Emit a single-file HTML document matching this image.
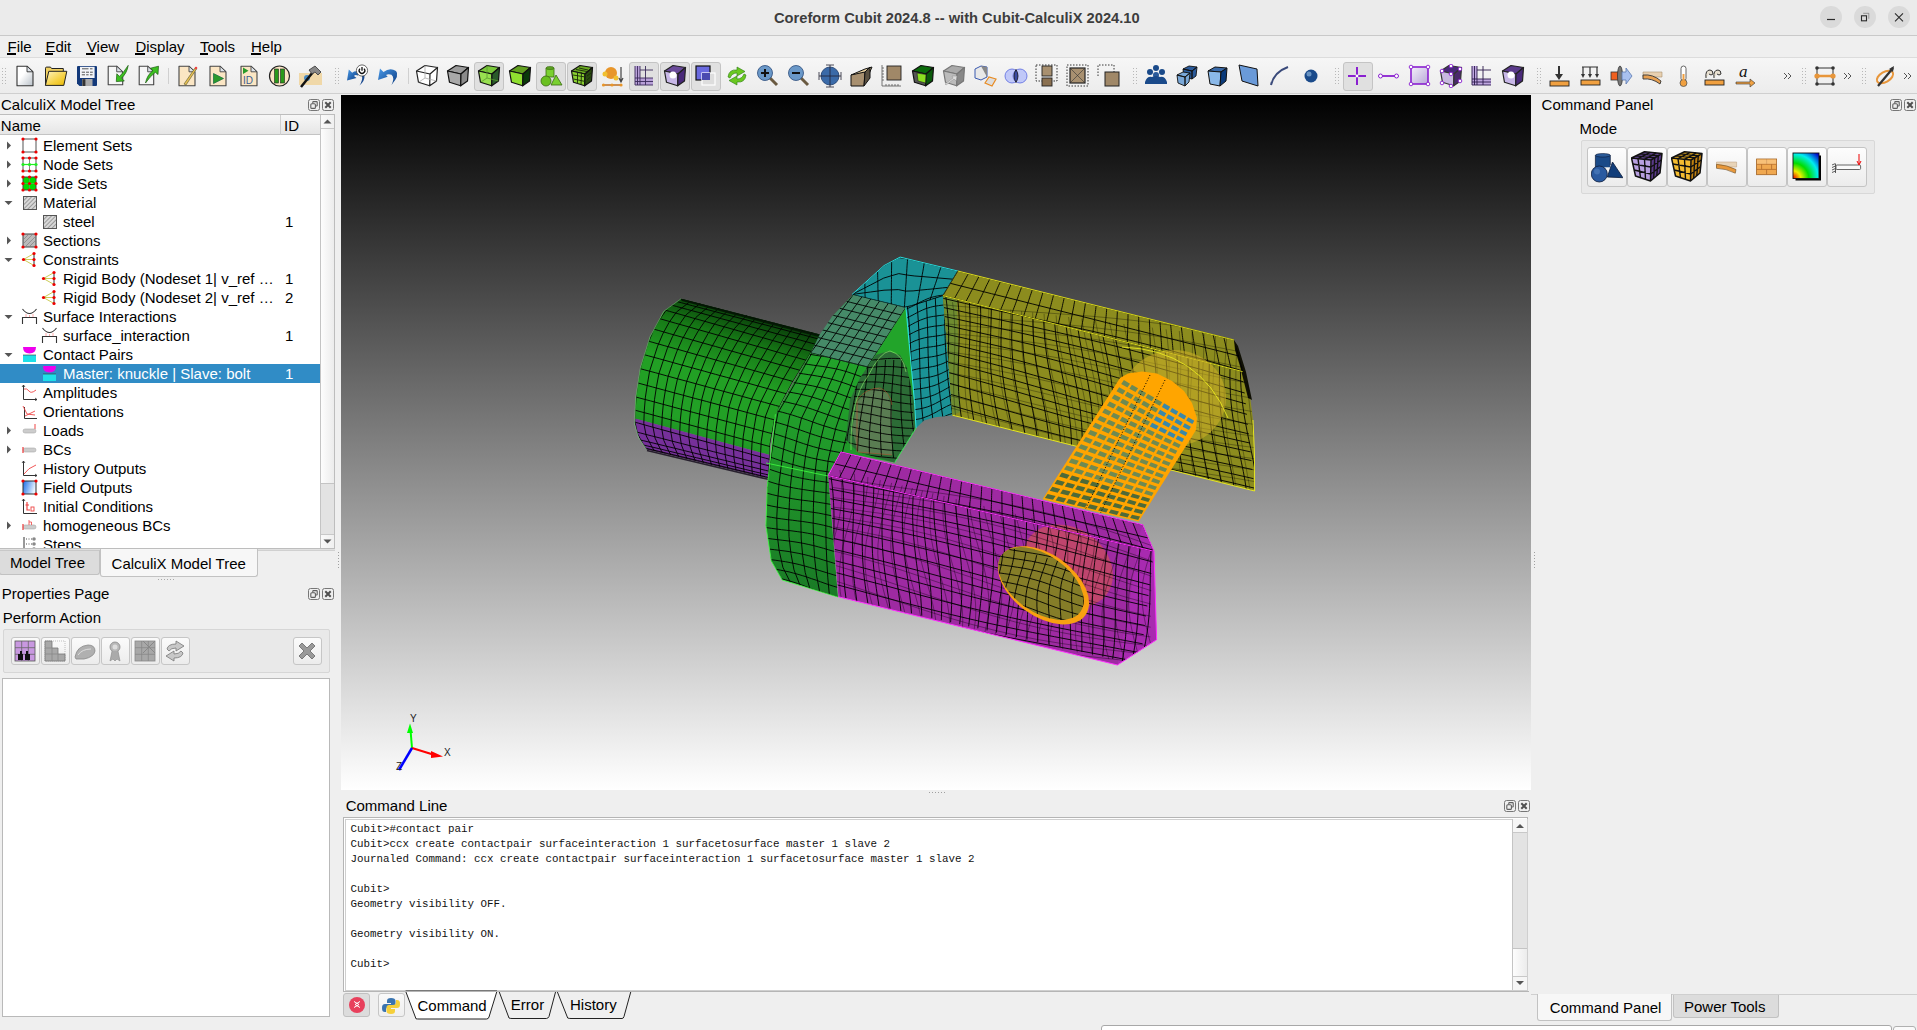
<!DOCTYPE html>
<html><head><meta charset="utf-8"><title>Coreform Cubit</title>
<style>
html,body{margin:0;padding:0;width:1917px;height:1030px;overflow:hidden;background:#efefef;position:relative}
.t{position:absolute;white-space:pre;line-height:1;font-family:'Liberation Sans',sans-serif}
svg{display:block}
</style></head><body>
<div style="position:absolute;left:0px;top:0px;width:1917px;height:35px;background:#ebebeb"></div>
<div style="position:absolute;left:0px;top:35px;width:1917px;height:1px;background:#c9c9c9"></div>
<div class="t" style="left:774px;top:10.76px;font-size:14.7px;color:#3d3d3d;font-family:'Liberation Sans',sans-serif;font-weight:700;">Coreform Cubit 2024.8 -- with Cubit-CalculiX 2024.10</div>
<div style="position:absolute;left:1820px;top:6px;width:22px;height:22px;border-radius:50%;background:#dadada"></div>
<div style="position:absolute;left:1854px;top:6px;width:22px;height:22px;border-radius:50%;background:#dadada"></div>
<div style="position:absolute;left:1888px;top:6px;width:22px;height:22px;border-radius:50%;background:#dadada"></div>
<svg style="position:absolute;left:1820px;top:6px" width="90" height="22" viewBox="0 0 90 22"><path d="M7 13.5h8" stroke="#2b2b2b" stroke-width="1.2"/><rect x="41.5" y="9.8" width="5" height="5" fill="none" stroke="#2b2b2b" stroke-width="1.1"/><path d="M43.2 7.3H48.8V12.8" fill="none" stroke="#555" stroke-width="0.5"/><path d="M75 7.3l8 8M83 7.3l-8 8" stroke="#2b2b2b" stroke-width="1.1"/></svg>
<div style="position:absolute;left:0px;top:36px;width:1917px;height:22px;background:#efefef"></div>
<div style="position:absolute;left:0px;top:57px;width:1917px;height:1px;background:#dcdcdc"></div>
<div class="t" style="left:7.5px;top:38.70px;font-size:15px;color:#000;font-family:'Liberation Sans',sans-serif;">File</div>
<div style="position:absolute;left:7.0px;top:53.2px;width:8.5px;height:1.6px;background:#000"></div>
<div class="t" style="left:45.4px;top:38.70px;font-size:15px;color:#000;font-family:'Liberation Sans',sans-serif;">Edit</div>
<div style="position:absolute;left:44.9px;top:53.2px;width:8.5px;height:1.6px;background:#000"></div>
<div class="t" style="left:86.9px;top:38.70px;font-size:15px;color:#000;font-family:'Liberation Sans',sans-serif;">View</div>
<div style="position:absolute;left:86.4px;top:53.2px;width:8.5px;height:1.6px;background:#000"></div>
<div class="t" style="left:135.4px;top:38.70px;font-size:15px;color:#000;font-family:'Liberation Sans',sans-serif;">Display</div>
<div style="position:absolute;left:134.9px;top:53.2px;width:10px;height:1.6px;background:#000"></div>
<div class="t" style="left:200px;top:38.70px;font-size:15px;color:#000;font-family:'Liberation Sans',sans-serif;">Tools</div>
<div style="position:absolute;left:199.5px;top:53.2px;width:8.5px;height:1.6px;background:#000"></div>
<div class="t" style="left:251px;top:38.70px;font-size:15px;color:#000;font-family:'Liberation Sans',sans-serif;">Help</div>
<div style="position:absolute;left:250.5px;top:53.2px;width:10px;height:1.6px;background:#000"></div>
<div style="position:absolute;left:0px;top:58px;width:1917px;height:35px;background:linear-gradient(#f6f6f6,#ececec)"></div>
<div style="position:absolute;left:0px;top:93px;width:1917px;height:1px;background:#cfcfcf"></div>
<div style="position:absolute;left:0px;top:94px;width:1917px;height:1px;background:#efefef"></div>
<div style="position:absolute;left:0px;top:95px;width:341px;height:935px;background:#efefef"></div>
<div class="t" style="left:1px;top:97.00px;font-size:15px;color:#000;font-family:'Liberation Sans',sans-serif;">CalculiX Model Tree</div>
<svg style="position:absolute;left:308px;top:99px" width="27" height="12" viewBox="0 0 27 12"><rect x="0.5" y="0.5" width="11" height="11" rx="2" fill="none" stroke="#777"/><rect x="2.8" y="4.8" width="4.6" height="4.6" rx="1" fill="none" stroke="#606060" stroke-width="1.1"/><path d="M4.8 4.6V3.2Q4.8 2.6 5.4 2.6H8.6Q9.2 2.6 9.2 3.2V6.4Q9.2 7 8.6 7H7.6" fill="none" stroke="#606060" stroke-width="1.1"/><rect x="14.5" y="0.5" width="11" height="11" rx="2" fill="none" stroke="#777"/><path d="M17.3 3.3l5.4 5.4M22.7 3.3l-5.4 5.4" stroke="#505050" stroke-width="2"/></svg>
<div style="position:absolute;left:-1px;top:114px;width:336px;height:435px;background:#fff;border:1px solid #bdbdbd;box-sizing:border-box"></div>
<div style="position:absolute;left:0px;top:115px;width:320px;height:20px;background:linear-gradient(#f7f7f7,#e6e6e6);border-bottom:1px solid #c4c4c4;box-sizing:border-box"></div>
<div style="position:absolute;left:280px;top:115px;width:1px;height:20px;background:#cfcfcf"></div>
<div class="t" style="left:0.8px;top:117.90px;font-size:15px;color:#000;font-family:'Liberation Sans',sans-serif;">Name</div>
<div class="t" style="left:284px;top:117.90px;font-size:15px;color:#000;font-family:'Liberation Sans',sans-serif;">ID</div>
<div style="position:absolute;left:320px;top:115px;width:14px;height:433px;background:#e3e3e3;border-left:1px solid #c4c4c4;box-sizing:border-box"></div>
<div style="position:absolute;left:321px;top:115px;width:13px;height:14px;background:linear-gradient(90deg,#fafafa,#f0f0f0);border-bottom:1px solid #c8c8c8;box-sizing:border-box"></div>
<div style="position:absolute;left:321px;top:129px;width:13px;height:355px;background:linear-gradient(90deg,#fdfdfd,#ececec);border-bottom:1px solid #c4c4c4;box-sizing:border-box"></div>
<div style="position:absolute;left:321px;top:534px;width:13px;height:14px;background:linear-gradient(90deg,#fafafa,#f0f0f0);border-top:1px solid #c8c8c8;box-sizing:border-box"></div>
<svg style="position:absolute;left:321px;top:115px" width="13" height="14" viewBox="0 0 13 14"><path d="M2.5 8.5L6.5 4.5L10.5 8.5z" fill="#555"/></svg>
<svg style="position:absolute;left:321px;top:534px" width="13" height="14" viewBox="0 0 13 14"><path d="M2.5 5.5L6.5 9.5L10.5 5.5z" fill="#555"/></svg>
<div style="position:absolute;left:0px;top:136px;width:320px;height:412px;overflow:hidden">
<svg style="position:absolute;left:6px;top:5px" width="6" height="9"><path d="M1 0.5L5 4.5L1 8.5z" fill="#555"/></svg>
<div class="ic" style="position:absolute;left:21px;top:1px;width:17px;height:17px"><svg width="17" height="17" viewBox="0 0 17 17"><rect x="2" y="2" width="13" height="13" fill="none" stroke="#555" stroke-width="1"/><circle cx="2" cy="2" r="1.6" fill="#e00"/><circle cx="15" cy="2" r="1.6" fill="#e00"/><circle cx="2" cy="15" r="1.6" fill="#e00"/><circle cx="15" cy="15" r="1.6" fill="#e00"/></svg></div>
<div class="t" style="left:43px;top:2.3px;font-size:15px;color:#000">Element Sets</div>
<svg style="position:absolute;left:6px;top:24px" width="6" height="9"><path d="M1 0.5L5 4.5L1 8.5z" fill="#555"/></svg>
<div class="ic" style="position:absolute;left:21px;top:20px;width:17px;height:17px"><svg width="17" height="17" viewBox="0 0 17 17"><rect x="2" y="2" width="13" height="13" fill="none" stroke="#555"/><path d="M8.5 2V15" stroke="#888"/><path d="M2 8.5H15" stroke="#2e2" stroke-width="1.2"/><circle cx="2" cy="2" r="1.6" fill="#e00"/><circle cx="8.5" cy="2" r="1.6" fill="#e00"/><circle cx="15" cy="2" r="1.6" fill="#e00"/><circle cx="2" cy="15" r="1.6" fill="#e00"/><circle cx="8.5" cy="15" r="1.6" fill="#e00"/><circle cx="15" cy="15" r="1.6" fill="#e00"/><circle cx="2" cy="8.5" r="1.6" fill="#2e2"/><circle cx="8.5" cy="8.5" r="1.6" fill="#2e2"/><circle cx="15" cy="8.5" r="1.6" fill="#2e2"/></svg></div>
<div class="t" style="left:43px;top:21.3px;font-size:15px;color:#000">Node Sets</div>
<svg style="position:absolute;left:6px;top:43px" width="6" height="9"><path d="M1 0.5L5 4.5L1 8.5z" fill="#555"/></svg>
<div class="ic" style="position:absolute;left:21px;top:39px;width:17px;height:17px"><svg width="17" height="17" viewBox="0 0 17 17"><rect x="2" y="2" width="13" height="13" fill="#0d0" stroke="#444"/><path d="M8.5 2V15M2 8.5H15" stroke="#5a5" stroke-width="0.8"/><circle cx="2" cy="2" r="1.6" fill="#e00"/><circle cx="8.5" cy="2" r="1.6" fill="#e00"/><circle cx="15" cy="2" r="1.6" fill="#e00"/><circle cx="2" cy="8.5" r="1.6" fill="#e00"/><circle cx="8.5" cy="8.5" r="1.6" fill="#e00"/><circle cx="15" cy="8.5" r="1.6" fill="#e00"/><circle cx="2" cy="15" r="1.6" fill="#e00"/><circle cx="8.5" cy="15" r="1.6" fill="#e00"/><circle cx="15" cy="15" r="1.6" fill="#e00"/></svg></div>
<div class="t" style="left:43px;top:40.3px;font-size:15px;color:#000">Side Sets</div>
<svg style="position:absolute;left:4px;top:64px" width="9" height="6"><path d="M0.5 1L4.5 5L8.5 1z" fill="#555"/></svg>
<div class="ic" style="position:absolute;left:21px;top:58px;width:17px;height:17px"><svg width="17" height="17" viewBox="0 0 17 17"><defs><pattern id="hat" width="3" height="3" patternUnits="userSpaceOnUse" patternTransform="rotate(45)"><rect width="3" height="3" fill="#d8d8d8"/><rect width="1" height="3" fill="#9a9a9a"/></pattern></defs><rect x="2.5" y="2.5" width="13" height="13" fill="url(#hat)" stroke="#555"/></svg></div>
<div class="t" style="left:43px;top:59.3px;font-size:15px;color:#000">Material</div>
<div class="ic" style="position:absolute;left:41px;top:77px;width:17px;height:17px"><svg width="17" height="17" viewBox="0 0 17 17"><defs><pattern id="hat" width="3" height="3" patternUnits="userSpaceOnUse" patternTransform="rotate(45)"><rect width="3" height="3" fill="#d8d8d8"/><rect width="1" height="3" fill="#9a9a9a"/></pattern></defs><rect x="2.5" y="2.5" width="13" height="13" fill="url(#hat)" stroke="#555"/></svg></div>
<div class="t" style="left:63px;top:78.3px;font-size:15px;color:#000">steel</div>
<div class="t" style="left:285px;top:78.3px;font-size:15px;color:#000">1</div>
<svg style="position:absolute;left:6px;top:100px" width="6" height="9"><path d="M1 0.5L5 4.5L1 8.5z" fill="#555"/></svg>
<div class="ic" style="position:absolute;left:21px;top:96px;width:17px;height:17px"><svg width="17" height="17" viewBox="0 0 17 17"><rect x="2" y="2" width="13" height="13" fill="#bbb" stroke="#444"/><path d="M3 11l8-8M5 14l9-9M3 7l4-4M9 14l5-5" stroke="#888" stroke-width="0.8"/><circle cx="2" cy="2" r="1.6" fill="#e00"/><circle cx="15" cy="2" r="1.6" fill="#e00"/><circle cx="2" cy="15" r="1.6" fill="#e00"/><circle cx="15" cy="15" r="1.6" fill="#e00"/></svg></div>
<div class="t" style="left:43px;top:97.3px;font-size:15px;color:#000">Sections</div>
<svg style="position:absolute;left:4px;top:121px" width="9" height="6"><path d="M0.5 1L4.5 5L8.5 1z" fill="#555"/></svg>
<div class="ic" style="position:absolute;left:21px;top:115px;width:17px;height:17px"><svg width="17" height="17" viewBox="0 0 17 17"><path d="M2.5 8.5L13 2.5M2.5 8.5H13M2.5 8.5L13 14.5" stroke="#cc5" stroke-width="1"/><path d="M13 2V15" stroke="#333"/><circle cx="2.5" cy="8.5" r="1.6" fill="#e00"/><circle cx="13" cy="2.5" r="1.6" fill="#e00"/><circle cx="13" cy="8.5" r="1.6" fill="#e00"/><circle cx="13" cy="14.5" r="1.6" fill="#e00"/></svg></div>
<div class="t" style="left:43px;top:116.3px;font-size:15px;color:#000">Constraints</div>
<div class="ic" style="position:absolute;left:41px;top:134px;width:17px;height:17px"><svg width="17" height="17" viewBox="0 0 17 17"><path d="M2.5 8.5L13 2.5M2.5 8.5H13M2.5 8.5L13 14.5" stroke="#cc5" stroke-width="1"/><path d="M13 2V15" stroke="#333"/><circle cx="2.5" cy="8.5" r="1.6" fill="#e00"/><circle cx="13" cy="2.5" r="1.6" fill="#e00"/><circle cx="13" cy="8.5" r="1.6" fill="#e00"/><circle cx="13" cy="14.5" r="1.6" fill="#e00"/></svg></div>
<div class="t" style="left:63px;top:135.3px;font-size:15px;color:#000">Rigid Body (Nodeset 1| v_ref …</div>
<div class="t" style="left:285px;top:135.3px;font-size:15px;color:#000">1</div>
<div class="ic" style="position:absolute;left:41px;top:153px;width:17px;height:17px"><svg width="17" height="17" viewBox="0 0 17 17"><path d="M2.5 8.5L13 2.5M2.5 8.5H13M2.5 8.5L13 14.5" stroke="#cc5" stroke-width="1"/><path d="M13 2V15" stroke="#333"/><circle cx="2.5" cy="8.5" r="1.6" fill="#e00"/><circle cx="13" cy="2.5" r="1.6" fill="#e00"/><circle cx="13" cy="8.5" r="1.6" fill="#e00"/><circle cx="13" cy="14.5" r="1.6" fill="#e00"/></svg></div>
<div class="t" style="left:63px;top:154.3px;font-size:15px;color:#000">Rigid Body (Nodeset 2| v_ref …</div>
<div class="t" style="left:285px;top:154.3px;font-size:15px;color:#000">2</div>
<svg style="position:absolute;left:4px;top:178px" width="9" height="6"><path d="M0.5 1L4.5 5L8.5 1z" fill="#555"/></svg>
<div class="ic" style="position:absolute;left:21px;top:172px;width:17px;height:17px"><svg width="17" height="17" viewBox="0 0 17 17"><path d="M1.5 1Q8.5 10 15.5 1" fill="none" stroke="#333" stroke-width="1.1"/><path d="M1.5 16V9.5H15.5V16" fill="none" stroke="#333" stroke-width="1.1"/><path d="M5 6V9M8.5 7V9M12 6V9" stroke="#f88" stroke-width="0.7"/></svg></div>
<div class="t" style="left:43px;top:173.3px;font-size:15px;color:#000">Surface Interactions</div>
<div class="ic" style="position:absolute;left:41px;top:191px;width:17px;height:17px"><svg width="17" height="17" viewBox="0 0 17 17"><path d="M1.5 1Q8.5 10 15.5 1" fill="none" stroke="#333" stroke-width="1.1"/><path d="M1.5 16V9.5H15.5V16" fill="none" stroke="#333" stroke-width="1.1"/><path d="M5 6V9M8.5 7V9M12 6V9" stroke="#f88" stroke-width="0.7"/></svg></div>
<div class="t" style="left:63px;top:192.3px;font-size:15px;color:#000">surface_interaction</div>
<div class="t" style="left:285px;top:192.3px;font-size:15px;color:#000">1</div>
<svg style="position:absolute;left:4px;top:216px" width="9" height="6"><path d="M0.5 1L4.5 5L8.5 1z" fill="#555"/></svg>
<div class="ic" style="position:absolute;left:21px;top:210px;width:17px;height:17px"><svg width="17" height="17" viewBox="0 0 17 17"><path d="M2 1H15Q15 7.5 8.5 7.5Q2 7.5 2 1z" fill="#e0e"/><rect x="2" y="9" width="13" height="7" fill="#1ee0e8"/><path d="M2 9H15" stroke="#333" stroke-width="0.6"/></svg></div>
<div class="t" style="left:43px;top:211.3px;font-size:15px;color:#000">Contact Pairs</div>
<div style="position:absolute;left:0;top:228px;width:320px;height:19px;background:#308cc6"></div>
<div class="ic" style="position:absolute;left:41px;top:229px;width:17px;height:17px"><svg width="17" height="17" viewBox="0 0 17 17"><path d="M2 1H15Q15 7.5 8.5 7.5Q2 7.5 2 1z" fill="#e0e"/><rect x="2" y="9" width="13" height="7" fill="#1ee0e8"/><path d="M2 9H15" stroke="#333" stroke-width="0.6"/></svg></div>
<div class="t" style="left:63px;top:230.3px;font-size:15px;color:#fff">Master: knuckle | Slave: bolt</div>
<div class="t" style="left:285px;top:230.3px;font-size:15px;color:#fff">1</div>
<div class="ic" style="position:absolute;left:21px;top:248px;width:17px;height:17px"><svg width="17" height="17" viewBox="0 0 17 17"><path d="M2.5 1V15.5H16" fill="none" stroke="#333"/><path d="M1 3L2.5 1L4 3M14 14L16 15.5L14 17" fill="none" stroke="#333" stroke-width="0.8"/><path d="M3 5Q6 4 8 7T15 6" fill="none" stroke="#e44" stroke-width="0.9"/></svg></div>
<div class="t" style="left:43px;top:249.3px;font-size:15px;color:#000">Amplitudes</div>
<div class="ic" style="position:absolute;left:21px;top:267px;width:17px;height:17px"><svg width="17" height="17" viewBox="0 0 17 17"><path d="M3.5 4V15.5H16" fill="none" stroke="#333"/><path d="M2 3L6 11L14 12M4 13L14 8" fill="none" stroke="#e44" stroke-width="0.9"/></svg></div>
<div class="t" style="left:43px;top:268.3px;font-size:15px;color:#000">Orientations</div>
<svg style="position:absolute;left:6px;top:290px" width="6" height="9"><path d="M1 0.5L5 4.5L1 8.5z" fill="#555"/></svg>
<div class="ic" style="position:absolute;left:21px;top:286px;width:17px;height:17px"><svg width="17" height="17" viewBox="0 0 17 17"><rect x="2" y="7" width="13" height="4" rx="2" fill="#ccc" stroke="#aaa" stroke-width="0.6"/><path d="M14 2V7" stroke="#e44" stroke-width="1"/></svg></div>
<div class="t" style="left:43px;top:287.3px;font-size:15px;color:#000">Loads</div>
<svg style="position:absolute;left:6px;top:309px" width="6" height="9"><path d="M1 0.5L5 4.5L1 8.5z" fill="#555"/></svg>
<div class="ic" style="position:absolute;left:21px;top:305px;width:17px;height:17px"><svg width="17" height="17" viewBox="0 0 17 17"><rect x="2" y="7" width="13" height="4" rx="2" fill="#ccc" stroke="#aaa" stroke-width="0.6"/><path d="M2 6V12M1 7h2M1 9h2M1 11h2" stroke="#e44" stroke-width="0.8"/></svg></div>
<div class="t" style="left:43px;top:306.3px;font-size:15px;color:#000">BCs</div>
<div class="ic" style="position:absolute;left:21px;top:324px;width:17px;height:17px"><svg width="17" height="17" viewBox="0 0 17 17"><path d="M2.5 1V15.5H16" fill="none" stroke="#333"/><path d="M1 3L2.5 1L4 3M14 14L16 15.5L14 17" fill="none" stroke="#333" stroke-width="0.8"/><path d="M3 14Q7 8 15 5" fill="none" stroke="#e44" stroke-width="0.9"/></svg></div>
<div class="t" style="left:43px;top:325.3px;font-size:15px;color:#000">History Outputs</div>
<div class="ic" style="position:absolute;left:21px;top:343px;width:17px;height:17px"><svg width="17" height="17" viewBox="0 0 17 17"><defs><linearGradient id="fg" x1="0" y1="0" x2="1" y2="0.3"><stop offset="0" stop-color="#1a6ee8"/><stop offset="1" stop-color="#e8f4ff"/></linearGradient></defs><rect x="2" y="2" width="13" height="13" fill="url(#fg)" stroke="#333"/><circle cx="2" cy="2" r="1.6" fill="#e00"/><circle cx="15" cy="2" r="1.6" fill="#e00"/><circle cx="2" cy="15" r="1.6" fill="#e00"/><circle cx="15" cy="15" r="1.6" fill="#e00"/></svg></div>
<div class="t" style="left:43px;top:344.3px;font-size:15px;color:#000">Field Outputs</div>
<div class="ic" style="position:absolute;left:21px;top:362px;width:17px;height:17px"><svg width="17" height="17" viewBox="0 0 17 17"><path d="M2.5 1V15.5H16" fill="none" stroke="#333"/><path d="M1 3L2.5 1L4 3" fill="none" stroke="#333" stroke-width="0.8"/><path d="M6 4V12H9M4.5 7H8" fill="none" stroke="#e44" stroke-width="1.2"/><rect x="10" y="9" width="3" height="4" fill="none" stroke="#e44" stroke-width="0.9"/></svg></div>
<div class="t" style="left:43px;top:363.3px;font-size:15px;color:#000">Initial Conditions</div>
<svg style="position:absolute;left:6px;top:385px" width="6" height="9"><path d="M1 0.5L5 4.5L1 8.5z" fill="#555"/></svg>
<div class="ic" style="position:absolute;left:21px;top:381px;width:17px;height:17px"><svg width="17" height="17" viewBox="0 0 17 17"><rect x="2" y="8" width="13" height="4" rx="2" fill="#ccc" stroke="#aaa" stroke-width="0.6"/><path d="M2 7V13M1 8h2M1 10h2M1 12h2M8 3V8M8 5h2.5V8" stroke="#e44" stroke-width="0.8" fill="none"/></svg></div>
<div class="t" style="left:43px;top:382.3px;font-size:15px;color:#000">homogeneous BCs</div>
<div class="ic" style="position:absolute;left:21px;top:400px;width:17px;height:17px"><svg width="17" height="17" viewBox="0 0 17 17"><path d="M3 1V16" stroke="#333"/><path d="M5 3H14M5 8H14" stroke="#555" stroke-dasharray="1 1.5"/><circle cx="13" cy="3" r="1.8" fill="#888"/><circle cx="13" cy="8" r="1.8" fill="#888"/><circle cx="13" cy="13" r="1.8" fill="#888"/></svg></div>
<div class="t" style="left:43px;top:401.3px;font-size:15px;color:#000">Steps</div>
</div>
<div style="position:absolute;left:0px;top:549px;width:341px;height:1px;background:#e0e0e0"></div>
<div style="position:absolute;left:-1px;top:550px;width:101px;height:24.5px;background:#dcdcdc;border:1px solid #c2c2c2;border-top:1px solid #c8c8c8;border-radius:0 0 3px 3px;box-sizing:border-box"></div>
<div style="position:absolute;left:100px;top:549px;width:158px;height:28px;background:#f7f7f7;border:1px solid #c2c2c2;border-top:none;border-radius:0 0 3px 3px;box-sizing:border-box"></div>
<div class="t" style="left:10px;top:555.10px;font-size:15px;color:#000;font-family:'Liberation Sans',sans-serif;">Model Tree</div>
<div class="t" style="left:111.6px;top:556.00px;font-size:15px;color:#000;font-family:'Liberation Sans',sans-serif;">CalculiX Model Tree</div>
<svg style="position:absolute;left:158px;top:579px" width="18" height="3" viewBox="0 0 18 3"><rect x="0" y="0" width="1" height="1" fill="#aaa"/><rect x="3" y="0" width="1" height="1" fill="#aaa"/><rect x="6" y="0" width="1" height="1" fill="#aaa"/><rect x="9" y="0" width="1" height="1" fill="#aaa"/><rect x="12" y="0" width="1" height="1" fill="#aaa"/><rect x="15" y="0" width="1" height="1" fill="#aaa"/></svg>
<div class="t" style="left:1.8px;top:586.30px;font-size:15px;color:#000;font-family:'Liberation Sans',sans-serif;">Properties Page</div>
<svg style="position:absolute;left:308px;top:588px" width="27" height="12" viewBox="0 0 27 12"><rect x="0.5" y="0.5" width="11" height="11" rx="2" fill="none" stroke="#777"/><rect x="2.8" y="4.8" width="4.6" height="4.6" rx="1" fill="none" stroke="#606060" stroke-width="1.1"/><path d="M4.8 4.6V3.2Q4.8 2.6 5.4 2.6H8.6Q9.2 2.6 9.2 3.2V6.4Q9.2 7 8.6 7H7.6" fill="none" stroke="#606060" stroke-width="1.1"/><rect x="14.5" y="0.5" width="11" height="11" rx="2" fill="none" stroke="#777"/><path d="M17.3 3.3l5.4 5.4M22.7 3.3l-5.4 5.4" stroke="#505050" stroke-width="2"/></svg>
<div class="t" style="left:2.7px;top:610.00px;font-size:15px;color:#000;font-family:'Liberation Sans',sans-serif;">Perform Action</div>
<div style="position:absolute;left:3px;top:629px;width:327px;height:44px;background:#e9e9e9;border:1px solid #d6d6d6;border-radius:2px;box-sizing:border-box"></div>
<div style="position:absolute;left:10.5px;top:636.5px;width:29px;height:28px;background:linear-gradient(#fbfbfb,#ececec);border:1px solid #c6c6c6;border-radius:3px;box-sizing:border-box"></div>
<div style="position:absolute;left:41px;top:636.5px;width:29px;height:28px;background:linear-gradient(#fbfbfb,#ececec);border:1px solid #c6c6c6;border-radius:3px;box-sizing:border-box"></div>
<div style="position:absolute;left:71px;top:636.5px;width:29px;height:28px;background:linear-gradient(#fbfbfb,#ececec);border:1px solid #c6c6c6;border-radius:3px;box-sizing:border-box"></div>
<div style="position:absolute;left:101px;top:636.5px;width:29px;height:28px;background:linear-gradient(#fbfbfb,#ececec);border:1px solid #c6c6c6;border-radius:3px;box-sizing:border-box"></div>
<div style="position:absolute;left:131px;top:636.5px;width:29px;height:28px;background:linear-gradient(#fbfbfb,#ececec);border:1px solid #c6c6c6;border-radius:3px;box-sizing:border-box"></div>
<div style="position:absolute;left:161px;top:636.5px;width:29px;height:28px;background:linear-gradient(#fbfbfb,#ececec);border:1px solid #c6c6c6;border-radius:3px;box-sizing:border-box"></div>
<div style="position:absolute;left:292.5px;top:636.5px;width:29px;height:28px;background:linear-gradient(#fbfbfb,#ececec);border:1px solid #c6c6c6;border-radius:3px;box-sizing:border-box"></div>
<div style="position:absolute;left:2px;top:678px;width:328px;height:339px;background:#fff;border:1px solid #b9b9b9;box-sizing:border-box"></div>
<div style="position:absolute;left:335px;top:95px;width:6px;height:695px;background:#efefef"></div>
<div style="position:absolute;left:341px;top:95px;width:1190px;height:695px;background:linear-gradient(#000 0%,#fff 100%);overflow:hidden"><svg width="1190" height="695" viewBox="341 95 1190 695" style="position:absolute;left:0;top:0"><defs><linearGradient id="gcyl" gradientUnits="userSpaceOnUse" x1="700" y1="300" x2="655" y2="440"><stop offset="0" stop-color="#0a400a"/><stop offset="0.18" stop-color="#167816"/><stop offset="0.45" stop-color="#22a024"/><stop offset="0.8" stop-color="#22a026"/><stop offset="1" stop-color="#1c8a22"/></linearGradient></defs><polygon points="681.3,298.7 676.8,302.0 672.3,305.3 667.7,308.5 663.5,312.0 660.8,317.0 658.1,321.9 655.5,326.8 652.8,331.7 650.2,336.6 648.5,342.0 646.9,347.3 645.2,352.6 643.5,358.0 641.9,363.3 640.3,368.7 639.5,374.2 638.6,379.7 637.8,385.2 636.9,390.8 636.1,396.3 635.6,401.8 635.4,407.4 635.1,413.0 634.9,418.6 769.6,454.9 769.8,449.3 770.2,443.8 771.2,438.3 772.1,432.9 773.1,427.4 774.0,422.0 775.0,416.5 776.9,411.4 779.5,406.5 782.1,401.6 784.7,396.7 787.3,391.8 789.9,386.9 792.6,382.1 795.5,377.4 798.4,372.6 801.3,367.9 804.2,363.2 807.1,358.5 810.0,353.8 812.9,349.0 815.7,344.3 818.5,339.5 821.3,334.7" fill="url(#gcyl)"/><polygon points="634.9,418.6 634.7,422.8 635.5,426.9 636.7,430.9 637.8,434.9 639.4,438.8 641.7,442.2 644.1,445.7 646.4,449.2 768.7,478.3 768.8,475.6 768.9,473.0 769.0,470.3 769.1,467.6 769.2,465.0 769.3,462.3 769.4,459.7 769.6,454.9" fill="#76309a"/><clipPath id="c1"><polygon points="681.3,298.7 676.8,302.0 672.3,305.3 667.7,308.5 663.5,312.0 660.8,317.0 658.1,321.9 655.5,326.8 652.8,331.7 650.2,336.6 648.5,342.0 646.9,347.3 645.2,352.6 643.5,358.0 641.9,363.3 640.3,368.7 639.5,374.2 638.6,379.7 637.8,385.2 636.9,390.8 636.1,396.3 635.6,401.8 635.4,407.4 635.1,413.0 634.9,418.6 634.8,424.2 636.3,429.5 637.8,434.9 640.2,439.9 643.3,444.6 646.4,449.2 768.7,478.3 768.8,474.8 769.0,471.2 769.1,467.6 769.2,464.1 769.4,460.6 769.6,454.9 769.8,449.3 770.2,443.8 771.2,438.3 772.1,432.9 773.1,427.4 774.0,422.0 775.0,416.5 776.9,411.4 779.5,406.5 782.1,401.6 784.7,396.7 787.3,391.8 789.9,386.9 792.6,382.1 795.5,377.4 798.4,372.6 801.3,367.9 804.2,363.2 807.1,358.5 810.0,353.8 812.9,349.0 815.7,344.3 818.5,339.5 821.3,334.7"/></clipPath><g clip-path="url(#c1)"><path d="M688.1 293.8 L677.4 301.5 L666.8 309.3 L659.3 319.8 L653.0 331.4 L648.0 343.5 L644.1 356.1 L640.3 368.7 L638.3 381.7 L636.3 394.7 L635.3 407.8 L634.8 421.0 L637.5 433.8 L643.7 445.2 L646.4 449.2 M697.2 296.0 L686.9 304.0 L676.5 312.0 L669.0 322.5 L662.7 334.1 L657.6 346.2 L653.6 358.7 L649.6 371.2 L647.4 384.1 L645.4 397.2 L644.3 410.3 L643.8 423.5 L646.3 436.0 L652.1 447.2 L654.6 451.1 M706.4 298.3 L696.3 306.5 L686.2 314.7 L678.8 325.3 L672.4 336.8 L667.2 348.8 L663.0 361.3 L658.9 373.7 L656.5 386.6 L654.5 399.6 L653.3 412.7 L652.8 426.0 L655.1 438.2 L660.4 449.2 L662.7 453.1 M715.6 300.5 L705.7 309.0 L695.9 317.4 L688.5 328.1 L682.1 339.6 L676.8 351.5 L672.4 363.8 L668.2 376.2 L665.6 389.0 L663.5 402.0 L662.3 415.1 L661.7 428.5 L663.8 440.4 L668.7 451.2 L670.9 455.0 M724.7 302.8 L715.1 311.5 L705.6 320.1 L698.3 330.8 L691.8 342.3 L686.4 354.1 L681.9 366.4 L677.5 378.8 L674.7 391.5 L672.6 404.5 L671.3 417.5 L670.7 431.0 L672.6 442.6 L677.1 453.2 L679.0 457.0 M733.9 305.0 L724.6 313.9 L715.3 322.9 L708.0 333.6 L701.6 345.0 L696.0 356.8 L691.3 369.0 L686.7 381.3 L683.8 394.0 L681.7 406.9 L680.3 420.0 L679.7 433.5 L681.4 444.8 L685.4 455.2 L687.2 458.9 M743.1 307.3 L734.0 316.4 L725.0 325.6 L717.8 336.3 L711.3 347.7 L705.5 359.5 L700.7 371.6 L696.0 383.8 L692.9 396.4 L690.7 409.4 L689.3 422.4 L688.7 436.0 L690.2 447.0 L693.8 457.2 L695.3 460.8 M752.2 309.5 L743.4 318.9 L734.7 328.3 L727.5 339.1 L721.0 350.5 L715.1 362.1 L710.2 374.2 L705.3 386.3 L701.9 398.9 L699.8 411.8 L698.2 424.8 L697.6 438.5 L698.9 449.2 L702.1 459.2 L703.5 462.8 M761.4 311.8 L752.9 321.4 L744.4 331.0 L737.3 341.9 L730.7 353.2 L724.7 364.8 L719.6 376.8 L714.6 388.8 L711.0 401.3 L708.9 414.2 L707.2 427.2 L706.6 441.0 L707.7 451.4 L710.4 461.2 L711.6 464.7 M770.5 314.0 L762.3 323.9 L754.1 333.7 L747.0 344.6 L740.4 355.9 L734.3 367.5 L729.0 379.4 L723.8 391.4 L720.1 403.8 L718.0 416.7 L716.2 429.6 L715.6 443.5 L716.5 453.6 L718.8 463.2 L719.8 466.7 M779.7 316.3 L771.7 326.4 L763.8 336.5 L756.7 347.4 L750.1 358.7 L743.9 370.1 L738.5 382.0 L733.1 393.9 L729.2 406.2 L727.0 419.1 L725.2 432.1 L724.6 446.0 L725.3 455.8 L727.1 465.2 L727.9 468.6 M788.9 318.5 L781.2 328.9 L773.5 339.2 L766.5 350.2 L759.8 361.4 L753.4 372.8 L747.9 384.6 L742.4 396.4 L738.3 408.7 L736.1 421.6 L734.2 434.5 L733.5 448.5 L734.0 458.1 L735.5 467.2 L736.1 470.5 M798.0 320.8 L790.6 331.3 L783.2 341.9 L776.2 352.9 L769.5 364.1 L763.0 375.4 L757.3 387.2 L751.7 398.9 L747.4 411.1 L745.2 424.0 L743.2 436.9 L742.5 451.0 L742.8 460.3 L743.8 469.3 L744.2 472.5 M807.2 323.0 L800.0 333.8 L792.9 344.6 L786.0 355.7 L779.2 366.8 L772.6 378.1 L766.8 389.8 L760.9 401.4 L756.5 413.6 L754.3 426.4 L752.2 439.3 L751.5 453.5 L751.6 462.5 L752.1 471.3 L752.4 474.4 M816.4 325.3 L809.5 336.3 L802.6 347.3 L795.7 358.4 L788.9 369.6 L782.2 380.8 L776.2 392.4 L770.2 404.0 L765.6 416.0 L763.3 428.9 L761.2 441.8 L760.5 456.0 L760.4 464.7 L760.5 473.3 L760.5 476.4 M825.5 327.5 L818.9 338.8 L812.3 350.1 L805.5 361.2 L798.6 372.3 L791.8 383.4 L785.6 395.0 L779.5 406.5 L774.7 418.5 L772.4 431.3 L770.1 444.2 L769.4 458.5 L769.1 466.9 L768.8 475.3 L768.7 478.3 M674.3 296.9 L685.3 299.7 L696.3 302.6 L707.3 305.4 L718.3 308.2 L729.3 311.0 L740.3 313.9 L751.3 316.7 L762.3 319.5 L773.3 322.4 L784.3 325.2 L795.3 328.0 L806.3 330.8 L817.3 333.7 L828.3 336.5 M673.2 297.6 L684.3 300.5 L695.3 303.3 L706.3 306.2 L717.4 309.1 L728.4 311.9 L739.4 314.8 L750.5 317.6 L761.5 320.5 L772.5 323.3 L783.6 326.2 L794.6 329.0 L805.6 331.9 L816.6 334.8 L827.7 337.6 M670.1 299.8 L681.3 302.7 L692.4 305.7 L703.5 308.6 L714.6 311.5 L725.7 314.5 L736.9 317.4 L748.0 320.3 L759.1 323.3 L770.2 326.2 L781.3 329.1 L792.5 332.1 L803.6 335.0 L814.7 338.0 L825.8 340.9 M665.0 303.3 L676.3 306.4 L687.6 309.5 L698.9 312.5 L710.1 315.6 L721.4 318.7 L732.7 321.7 L743.9 324.8 L755.2 327.9 L766.5 330.9 L777.7 334.0 L789.0 337.1 L800.3 340.1 L811.6 343.2 L822.8 346.2 M658.1 308.2 L669.6 311.4 L681.1 314.6 L692.5 317.9 L704.0 321.1 L715.5 324.4 L727.0 327.6 L738.4 330.8 L749.9 334.1 L761.4 337.3 L772.9 340.6 L784.3 343.8 L795.8 347.0 L807.3 350.3 L818.7 353.5 M652.5 316.6 L664.0 319.9 L675.5 323.2 L687.0 326.4 L698.5 329.7 L710.0 332.9 L721.5 336.2 L733.0 339.5 L744.5 342.7 L756.0 346.0 L767.4 349.2 L778.9 352.5 L790.4 355.8 L801.9 359.0 L813.4 362.3 M646.9 327.2 L658.3 330.4 L669.8 333.7 L681.2 336.9 L692.7 340.1 L704.1 343.3 L715.6 346.5 L727.0 349.8 L738.5 353.0 L749.9 356.2 L761.4 359.4 L772.8 362.7 L784.2 365.9 L795.7 369.1 L807.1 372.3 M641.5 339.3 L652.9 342.4 L664.2 345.6 L675.5 348.7 L686.9 351.9 L698.2 355.1 L709.5 358.2 L720.8 361.4 L732.2 364.5 L743.5 367.7 L754.8 370.8 L766.2 374.0 L777.5 377.2 L788.8 380.3 L800.2 383.5 M637.5 352.8 L648.6 355.9 L659.7 358.9 L670.9 362.0 L682.0 365.1 L693.1 368.1 L704.3 371.2 L715.4 374.3 L726.5 377.3 L737.7 380.4 L748.8 383.4 L760.0 386.5 L771.1 389.6 L782.2 392.6 L793.4 395.7 M633.4 366.8 L644.3 369.8 L655.3 372.7 L666.2 375.7 L677.1 378.7 L688.1 381.6 L699.0 384.6 L709.9 387.6 L720.9 390.6 L731.8 393.5 L742.7 396.5 L753.7 399.5 L764.6 402.4 L775.5 405.4 L786.5 408.4 M631.3 381.2 L642.0 384.1 L652.7 387.0 L663.4 389.9 L674.1 392.8 L684.9 395.7 L695.6 398.6 L706.3 401.4 L717.0 404.3 L727.7 407.2 L738.4 410.1 L749.1 413.0 L759.8 415.9 L770.5 418.8 L781.2 421.7 M629.2 395.2 L639.8 398.1 L650.5 400.9 L661.2 403.8 L671.9 406.7 L682.6 409.6 L693.3 412.4 L704.0 415.3 L714.7 418.2 L725.4 421.1 L736.0 423.9 L746.7 426.8 L757.4 429.7 L768.1 432.6 L778.8 435.4 M628.5 408.4 L639.1 411.3 L649.7 414.1 L660.3 417.0 L670.8 419.8 L681.4 422.7 L692.0 425.5 L702.6 428.4 L713.2 431.2 L723.8 434.1 L734.3 436.9 L744.9 439.8 L755.5 442.7 L766.1 445.5 L776.7 448.4 M628.0 420.3 L638.6 423.2 L649.2 426.2 L659.8 429.1 L670.4 432.0 L680.9 434.9 L691.5 437.8 L702.1 440.7 L712.7 443.6 L723.3 446.6 L733.8 449.5 L744.4 452.4 L755.0 455.3 L765.6 458.2 L776.1 461.1 M630.4 430.5 L640.8 433.1 L651.2 435.8 L661.6 438.4 L672.0 441.1 L682.3 443.7 L692.7 446.4 L703.1 449.0 L713.5 451.7 L723.9 454.3 L734.3 456.9 L744.6 459.6 L755.0 462.2 L765.4 464.9 L775.8 467.5 M633.7 438.3 L643.8 440.8 L653.9 443.2 L664.1 445.7 L674.2 448.1 L684.3 450.6 L694.4 453.1 L704.6 455.5 L714.7 458.0 L724.8 460.4 L734.9 462.9 L745.0 465.4 L755.2 467.8 L765.3 470.3 L775.4 472.7 M637.3 443.5 L647.2 445.9 L657.0 448.2 L666.8 450.6 L676.7 453.0 L686.5 455.3 L696.4 457.7 L706.2 460.0 L716.0 462.4 L725.9 464.8 L735.7 467.1 L745.6 469.5 L755.4 471.9 L765.2 474.2 L775.1 476.6 M639.5 446.7 L649.2 449.0 L658.9 451.3 L668.5 453.6 L678.2 455.9 L687.9 458.2 L697.5 460.5 L707.2 462.8 L716.9 465.1 L726.5 467.4 L736.2 469.7 L745.9 472.0 L755.5 474.3 L765.2 476.7 L774.9 479.0 M640.3 447.7 L649.9 450.0 L659.5 452.3 L669.1 454.6 L678.7 456.9 L688.3 459.2 L697.9 461.5 L707.5 463.8 L717.2 466.0 L726.8 468.3 L736.4 470.6 L746.0 472.9 L755.6 475.2 L765.2 477.5 L774.8 479.8" fill="none" stroke="#000" stroke-width="1" stroke-opacity="0.9"/></g><path d="M681.3,298.7 663.8,311.4 650.2,336.6 640.5,367.7 635.7,398.7 634.7,424.0 638.6,437.6 646.4,449.2" fill="none" stroke="#7dff7d" stroke-width="0.8" stroke-opacity="0.6"/><path d="M682 300L821 336.5" stroke="#031803" stroke-width="2.2" stroke-opacity="0.85"/><path d="M647 450.5L769 479.5" stroke="#100818" stroke-width="1.6" stroke-opacity="0.8"/><defs><linearGradient id="gfl" gradientUnits="userSpaceOnUse" x1="0" y1="350" x2="0" y2="595"><stop offset="0" stop-color="#22a42a"/><stop offset="0.45" stop-color="#20982a"/><stop offset="1" stop-color="#1a7a26"/></linearGradient></defs><polygon points="853.4,294.4 905.9,307.5 914.6,403.6 916.0,428.0 894.7,462.5 841.0,452.0 828.0,474.0 838.0,597.0 782.2,580.0 771.3,561.0 765.9,525.7 767.2,487.6 775.4,414.2 810.6,352.9 832.4,316.2" fill="url(#gfl)"/><clipPath id="c2"><polygon points="853.4,294.4 905.9,307.5 914.6,403.6 916.0,428.0 894.7,462.5 841.0,452.0 828.0,474.0 838.0,597.0 782.2,580.0 771.3,561.0 765.9,525.7 767.2,487.6 775.4,414.2 810.6,352.9 832.4,316.2"/></clipPath><g clip-path="url(#c2)"><path d="M811.8 353.2 L803.5 368.1 L795.1 383.1 L786.6 398.0 L777.9 412.8 L774.9 429.5 L772.5 446.5 L770.2 463.4 L767.7 480.3 L766.1 497.3 L765.1 514.4 L765.3 531.4 L767.8 548.4 L772.0 564.7 L780.9 579.6 M821.5 355.6 L813.7 370.7 L805.8 385.8 L797.8 400.8 L789.7 415.8 L786.3 432.4 L783.6 449.2 L781.2 466.1 L779.1 482.9 L777.7 499.9 L776.8 516.9 L777.1 533.9 L779.2 550.8 L782.9 567.3 L790.4 582.5 M830.9 357.9 L823.7 373.2 L816.3 388.4 L808.7 403.6 L801.3 418.8 L797.6 435.3 L794.6 452.0 L792.3 468.7 L790.5 485.6 L789.4 502.5 L788.7 519.5 L789.0 536.4 L790.9 553.3 L794.0 569.9 L800.0 585.4 M840.3 360.2 L833.5 375.6 L826.6 391.0 L819.6 406.4 L812.8 421.8 L809.0 438.2 L805.7 454.7 L803.5 471.4 L802.1 488.2 L801.3 505.1 L800.9 522.1 L801.2 539.0 L802.7 555.9 L805.2 572.5 L809.8 588.4 M849.4 362.5 L843.2 378.1 L836.8 393.6 L830.4 409.1 L824.3 424.7 L820.4 441.1 L816.8 457.5 L814.9 474.2 L813.9 491.0 L813.4 507.8 L813.2 524.7 L813.6 541.6 L814.7 558.5 L816.5 575.2 L819.6 591.4 M858.5 364.7 L852.8 380.4 L847.0 396.2 L841.3 411.9 L835.9 427.7 L831.9 444.0 L828.2 460.3 L826.4 476.9 L826.0 493.7 L825.8 510.5 L825.8 527.4 L826.1 544.3 L826.8 561.1 L827.8 577.8 L829.3 594.4 M867.5 366.9 L862.4 382.8 L857.3 398.8 L852.2 414.7 L847.7 430.8 L843.7 447.0 L839.8 463.2 L838.2 479.8 L838.2 496.5 L838.3 513.3 L838.5 530.1 L838.7 546.9 L838.9 563.7 L839.1 580.5 L839.0 597.3 M809.8 354.3 L814.0 355.0 L818.3 355.7 L822.6 356.3 L826.8 356.9 L830.9 357.9 L834.9 358.9 L839.0 359.9 L843.1 360.9 L847.1 361.9 L851.2 362.9 L855.2 363.9 L859.3 364.9 L863.3 365.9 L867.4 366.9 M804.3 363.8 L808.8 364.5 L813.3 365.2 L817.7 365.8 L822.2 366.4 L826.6 367.1 L830.9 367.9 L835.2 368.7 L839.5 369.7 L843.7 370.8 L847.8 372.0 L851.9 373.4 L856.0 374.8 L860.1 376.3 L864.2 377.8 M798.9 373.2 L803.6 373.9 L808.2 374.6 L812.9 375.3 L817.5 376.1 L822.0 376.9 L826.4 377.9 L830.9 379.0 L835.2 380.2 L839.5 381.5 L843.8 382.9 L848.1 384.4 L852.4 386.0 L856.7 387.5 L861.0 389.1 M793.6 382.6 L798.4 383.3 L803.2 384.1 L808.0 385.0 L812.7 385.9 L817.3 387.0 L821.9 388.1 L826.4 389.5 L830.9 390.9 L835.3 392.4 L839.8 394.0 L844.2 395.6 L848.7 397.2 L853.2 398.7 L857.7 400.2 M788.2 391.9 L793.2 392.8 L798.1 393.7 L803.0 394.8 L807.7 395.9 L812.5 397.2 L817.2 398.6 L821.8 400.1 L826.4 401.7 L831.1 403.4 L835.7 405.1 L840.4 406.7 L845.0 408.3 L849.8 409.8 L854.5 411.2 M782.8 401.4 L787.8 402.4 L792.9 403.6 L797.8 404.8 L802.7 406.2 L807.6 407.7 L812.4 409.3 L817.2 411.0 L822.0 412.7 L826.8 414.4 L831.7 416.1 L836.6 417.7 L841.5 419.3 L846.5 420.7 L851.5 422.0 M777.2 411.0 L782.4 412.3 L787.6 413.7 L792.7 415.2 L797.7 416.8 L802.8 418.5 L807.8 420.2 L812.8 422.0 L817.8 423.8 L822.9 425.5 L828.1 427.1 L833.2 428.7 L838.4 430.1 L843.7 431.4 L849.0 432.6 M774.5 421.8 L779.7 423.3 L784.9 424.8 L790.0 426.5 L795.1 428.3 L800.2 430.0 L805.3 431.8 L810.4 433.6 L815.5 435.3 L820.6 436.9 L825.7 438.3 L830.9 439.7 L836.0 440.9 L841.3 442.0 L846.5 442.9 M773.3 433.4 L778.3 435.0 L783.3 436.6 L788.4 438.4 L793.4 440.1 L798.4 441.9 L803.4 443.6 L808.4 445.2 L813.4 446.7 L818.4 448.1 L823.5 449.3 L828.6 450.4 L833.7 451.4 L838.9 452.3 L844.0 453.2 M771.9 445.2 L776.9 446.9 L781.8 448.6 L786.7 450.3 L791.6 452.0 L796.5 453.6 L801.5 455.2 L806.4 456.6 L811.3 457.9 L816.3 459.0 L821.3 460.0 L826.4 461.0 L831.4 461.8 L836.5 462.6 L841.6 463.4 M770.6 457.2 L775.5 458.9 L780.4 460.6 L785.3 462.2 L790.3 463.8 L795.2 465.2 L800.2 466.6 L805.1 467.8 L810.1 468.9 L815.1 469.8 L820.1 470.7 L825.0 471.4 L830.0 472.2 L835.0 472.9 L839.9 473.7 M769.3 469.2 L774.2 470.9 L779.2 472.5 L784.2 474.0 L789.3 475.4 L794.3 476.7 L799.4 477.8 L804.4 478.8 L809.5 479.7 L814.5 480.5 L819.6 481.2 L824.7 481.9 L829.7 482.7 L834.7 483.5 L839.8 484.3 M767.9 481.2 L773.0 482.8 L778.1 484.3 L783.2 485.6 L788.3 486.8 L793.4 487.9 L798.6 488.8 L803.7 489.6 L808.9 490.4 L814.0 491.1 L819.1 491.8 L824.3 492.5 L829.4 493.3 L834.5 494.2 L839.6 495.2 M767.0 493.2 L772.2 494.6 L777.3 495.8 L782.5 496.9 L787.7 497.9 L792.9 498.8 L798.0 499.6 L803.2 500.3 L808.4 500.9 L813.6 501.6 L818.8 502.4 L823.9 503.2 L829.1 504.1 L834.3 505.2 L839.4 506.3 M766.6 504.9 L771.8 506.1 L777.0 507.1 L782.2 508.0 L787.4 508.8 L792.6 509.6 L797.8 510.2 L803.0 510.9 L808.1 511.6 L813.3 512.3 L818.5 513.1 L823.7 514.1 L828.9 515.2 L834.1 516.4 L839.2 517.7 M766.2 516.4 L771.4 517.3 L776.6 518.2 L781.8 518.9 L787.1 519.6 L792.3 520.2 L797.5 520.9 L802.7 521.5 L807.9 522.3 L813.1 523.1 L818.3 524.1 L823.5 525.2 L828.7 526.5 L833.9 527.9 L839.1 529.3 M766.2 527.6 L771.3 528.3 L776.5 529.0 L781.6 529.7 L786.8 530.3 L792.0 530.9 L797.2 531.6 L802.4 532.3 L807.6 533.2 L812.8 534.2 L818.1 535.4 L823.3 536.7 L828.5 538.1 L833.7 539.5 L838.9 541.1 M767.8 538.4 L772.8 539.1 L777.8 539.7 L782.9 540.3 L787.9 540.9 L792.9 541.6 L798.0 542.4 L803.1 543.3 L808.2 544.4 L813.3 545.5 L818.4 546.9 L823.5 548.3 L828.6 549.8 L833.6 551.3 L838.7 552.9 M769.5 549.1 L774.3 549.7 L779.2 550.3 L784.1 550.9 L789.0 551.6 L794.0 552.5 L798.9 553.4 L803.9 554.5 L808.8 555.7 L813.8 557.1 L818.8 558.5 L823.7 560.1 L828.7 561.6 L833.6 563.1 L838.5 564.6 M771.1 559.7 L775.8 560.3 L780.6 561.0 L785.4 561.7 L790.2 562.6 L795.0 563.6 L799.8 564.7 L804.7 566.0 L809.5 567.4 L814.3 568.8 L819.1 570.4 L824.0 571.9 L828.8 573.4 L833.6 574.8 L838.3 576.2 M776.0 569.3 L780.3 570.1 L784.7 571.0 L789.1 571.9 L793.5 573.1 L798.0 574.3 L802.6 575.7 L807.1 577.1 L811.6 578.7 L816.2 580.2 L820.6 581.8 L825.0 583.4 L829.4 584.9 L833.8 586.3 L838.1 587.5 M781.5 578.8 L785.4 579.8 L789.4 580.9 L793.5 582.2 L797.6 583.5 L801.8 585.0 L805.9 586.6 L810.0 588.2 L814.1 589.7 L818.1 590.9 L822.1 592.1 L826.0 593.4 L830.0 594.6 L834.0 595.8 L838.0 597.0" fill="none" stroke="#000" stroke-width="1" stroke-opacity="0.9"/></g><path d="M775.4 414.2L767.2 487.6L765.9 525.7L771.3 561L782.2 580L838 597M766 463L828 476" fill="none" stroke="#40ff40" stroke-width="1" stroke-opacity="0.8"/><polygon points="853.4,294.4 905.9,307.5 867.4,366.9 810.6,352.9 820.0,334.0 832.4,316.2" fill="#468a68"/><clipPath id="c3"><polygon points="853.4,294.4 905.9,307.5 867.4,366.9 810.6,352.9 820.0,334.0 832.4,316.2"/></clipPath><g clip-path="url(#c3)"><path d="M866.2 276.8 L861.3 283.5 L856.5 290.2 L851.6 296.9 L846.7 303.6 L841.8 310.3 L836.9 317.0 L832.0 323.6 L827.1 330.3 L822.2 337.0 L817.3 343.7 L812.4 350.4 L807.5 357.1 L802.7 363.8 L797.8 370.4 M874.8 279.0 L870.0 285.7 L865.2 292.4 L860.3 299.1 L855.5 305.8 L850.7 312.5 L845.9 319.2 L841.1 325.9 L836.3 332.6 L831.5 339.3 L826.7 346.0 L821.9 352.7 L817.1 359.4 L812.3 366.1 L807.4 372.8 M883.3 281.1 L878.6 287.8 L873.9 294.6 L869.1 301.3 L864.4 308.0 L859.7 314.7 L854.9 321.4 L850.2 328.2 L845.5 334.9 L840.8 341.6 L836.0 348.3 L831.3 355.0 L826.6 361.8 L821.9 368.5 L817.1 375.2 M891.8 283.3 L887.2 290.0 L882.6 296.7 L877.9 303.5 L873.3 310.2 L868.6 317.0 L864.0 323.7 L859.3 330.4 L854.7 337.2 L850.0 343.9 L845.4 350.6 L840.7 357.4 L836.1 364.1 L831.5 370.8 L826.8 377.6 M900.4 285.4 L895.8 292.2 L891.3 298.9 L886.7 305.7 L882.1 312.4 L877.6 319.2 L873.0 325.9 L868.4 332.7 L863.9 339.4 L859.3 346.2 L854.7 352.9 L850.2 359.7 L845.6 366.5 L841.1 373.2 L836.5 380.0 M908.9 287.5 L904.4 294.3 L900.0 301.1 L895.5 307.9 L891.0 314.6 L886.5 321.4 L882.0 328.2 L877.5 334.9 L873.1 341.7 L868.6 348.5 L864.1 355.3 L859.6 362.0 L855.1 368.8 L850.7 375.6 L846.2 382.3 M917.4 289.7 L913.0 296.5 L908.6 303.3 L904.2 310.0 L899.9 316.8 L895.4 323.6 L891.0 330.4 L886.6 337.2 L882.2 344.0 L877.9 350.8 L873.4 357.6 L869.0 364.4 L864.6 371.1 L860.2 377.9 L855.9 384.7 M837.6 290.5 L843.6 292.0 L849.6 293.5 L855.6 295.0 L861.6 296.5 L867.6 298.0 L873.6 299.5 L879.6 300.9 L885.6 302.4 L891.6 303.9 L897.6 305.4 L903.6 306.9 L909.6 308.4 L915.6 309.9 L921.6 311.4 M832.1 297.7 L838.2 299.3 L844.3 300.8 L850.3 302.3 L856.4 303.8 L862.4 305.3 L868.5 306.8 L874.6 308.3 L880.6 309.8 L886.7 311.3 L892.8 312.8 L898.8 314.4 L904.9 315.9 L910.9 317.4 L917.0 318.9 M826.6 305.0 L832.8 306.6 L838.9 308.1 L845.0 309.6 L851.1 311.1 L857.2 312.6 L863.4 314.2 L869.5 315.7 L875.6 317.2 L881.7 318.7 L887.9 320.3 L894.0 321.8 L900.1 323.3 L906.2 324.8 L912.3 326.3 M821.1 312.3 L827.3 313.8 L833.5 315.4 L839.7 316.9 L845.9 318.4 L852.0 320.0 L858.2 321.5 L864.4 323.1 L870.6 324.6 L876.8 326.1 L883.0 327.7 L889.1 329.2 L895.3 330.7 L901.5 332.3 L907.7 333.8 M815.6 319.6 L821.9 321.1 L828.1 322.7 L834.3 324.2 L840.6 325.8 L846.8 327.3 L853.1 328.9 L859.3 330.4 L865.6 332.0 L871.8 333.5 L878.1 335.1 L884.3 336.6 L890.6 338.2 L896.8 339.7 L903.0 341.3 M810.1 326.9 L816.4 328.4 L822.7 330.0 L829.0 331.5 L835.3 333.1 L841.6 334.7 L847.9 336.2 L854.2 337.8 L860.6 339.4 L866.9 340.9 L873.2 342.5 L879.5 344.0 L885.8 345.6 L892.1 347.2 L898.4 348.7 M804.6 334.1 L811.0 335.7 L817.3 337.3 L823.7 338.9 L830.1 340.4 L836.4 342.0 L842.8 343.6 L849.2 345.2 L855.5 346.7 L861.9 348.3 L868.3 349.9 L874.6 351.5 L881.0 353.0 L887.4 354.6 L893.7 356.2 M799.1 341.4 L805.5 343.0 L811.9 344.6 L818.4 346.2 L824.8 347.8 L831.2 349.4 L837.7 350.9 L844.1 352.5 L850.5 354.1 L856.9 355.7 L863.4 357.3 L869.8 358.9 L876.2 360.5 L882.7 362.1 L889.1 363.6 M793.6 348.7 L800.1 350.3 L806.5 351.9 L813.0 353.5 L819.5 355.1 L826.0 356.7 L832.5 358.3 L839.0 359.9 L845.5 361.5 L852.0 363.1 L858.5 364.7 L865.0 366.3 L871.5 367.9 L877.9 369.5 L884.4 371.1" fill="none" stroke="#000" stroke-width="1" stroke-opacity="0.9"/></g><polygon points="867.4,366.9 876.0,355.0 888.4,351.0 900.0,355.0 907.0,368.0 914.6,403.6 916.0,428.0 894.7,462.5 858.0,452.0 846.0,440.0 850.0,400.0 860.0,378.0" fill="#2c6c36"/><polygon points="857.0,402.0 866.0,392.0 878.0,388.0 888.0,394.0 892.0,410.0 892.0,455.0 858.0,452.0 852.0,430.0" fill="#5a7c52"/><clipPath id="c4"><polygon points="867.4,366.9 876.0,355.0 888.4,351.0 900.0,355.0 907.0,368.0 914.6,403.6 916.0,428.0 894.7,462.5 858.0,452.0 846.0,440.0 850.0,400.0 860.0,378.0"/></clipPath><g clip-path="url(#c4)"><path d="M859.5 360.0 L859.0 366.5 L858.4 372.9 L857.6 379.4 L856.7 385.8 L855.7 392.2 L854.5 398.6 L853.3 405.0 L852.0 411.4 L850.7 417.7 L849.5 424.1 L848.3 430.4 L847.3 436.8 L846.5 443.2 L845.8 449.6 M868.4 360.0 L867.9 366.6 L867.3 373.2 L866.6 379.8 L865.7 386.4 L864.7 392.9 L863.7 399.4 L862.6 406.0 L861.5 412.5 L860.5 419.0 L859.6 425.5 L858.8 432.0 L858.2 438.5 L857.8 445.1 L857.5 451.7 M877.1 360.0 L876.6 366.7 L876.0 373.5 L875.4 380.2 L874.6 386.9 L873.7 393.6 L872.8 400.2 L871.9 406.9 L871.1 413.5 L870.5 420.2 L869.9 426.9 L869.5 433.5 L869.3 440.3 L869.3 447.0 L869.4 453.8 M885.5 360.0 L885.1 366.9 L884.6 373.7 L884.0 380.6 L883.3 387.4 L882.6 394.2 L882.0 401.0 L881.4 407.8 L881.0 414.6 L880.6 421.5 L880.5 428.3 L880.5 435.1 L880.7 442.0 L881.0 449.0 L881.5 455.9 M893.8 360.0 L893.5 367.0 L893.1 374.0 L892.6 381.0 L892.1 388.0 L891.7 394.9 L891.3 401.9 L891.1 408.8 L891.0 415.8 L891.1 422.8 L891.3 429.8 L891.7 436.8 L892.3 443.8 L892.9 450.9 L893.6 458.0 M902.0 360.0 L901.8 367.1 L901.5 374.3 L901.2 381.4 L901.0 388.5 L900.9 395.6 L900.9 402.7 L901.0 409.8 L901.3 416.9 L901.8 424.1 L902.4 431.2 L903.1 438.5 L904.0 445.7 L904.8 452.9 L905.7 460.2 M910.1 360.0 L910.0 367.3 L909.9 374.5 L909.9 381.8 L910.0 389.0 L910.3 396.3 L910.6 403.5 L911.1 410.8 L911.8 418.1 L912.7 425.4 L913.6 432.8 L914.6 440.1 L915.7 447.5 L916.7 454.9 L917.7 462.3 M857.8 361.4 L861.6 361.1 L865.4 360.8 L869.1 360.4 L872.9 360.0 L876.6 359.6 L880.3 359.1 L884.0 358.8 L887.7 358.5 L891.4 358.4 L895.1 358.4 L898.8 358.5 L902.5 358.7 L906.2 359.1 L910.0 359.5 M857.1 368.5 L860.9 368.2 L864.8 367.9 L868.6 367.5 L872.4 367.2 L876.3 366.9 L880.1 366.6 L883.9 366.5 L887.7 366.5 L891.4 366.6 L895.2 366.8 L899.0 367.2 L902.9 367.6 L906.7 368.1 L910.5 368.7 M856.3 375.5 L860.2 375.2 L864.2 374.9 L868.1 374.7 L872.0 374.5 L875.9 374.3 L879.8 374.3 L883.7 374.4 L887.6 374.6 L891.5 375.0 L895.4 375.5 L899.3 376.0 L903.2 376.6 L907.1 377.2 L911.0 377.8 M855.5 382.4 L859.5 382.2 L863.6 382.0 L867.6 381.9 L871.6 381.9 L875.6 382.0 L879.6 382.2 L883.5 382.6 L887.5 383.1 L891.5 383.6 L895.5 384.3 L899.5 385.0 L903.5 385.6 L907.5 386.3 L911.6 386.8 M854.7 389.3 L858.9 389.3 L863.0 389.3 L867.1 389.4 L871.1 389.6 L875.2 389.9 L879.3 390.4 L883.4 391.0 L887.4 391.7 L891.5 392.4 L895.6 393.1 L899.7 393.9 L903.9 394.6 L908.0 395.2 L912.1 395.6 M854.0 396.4 L858.2 396.5 L862.3 396.7 L866.5 397.0 L870.7 397.5 L874.8 398.1 L879.0 398.8 L883.2 399.6 L887.4 400.4 L891.5 401.2 L895.8 402.0 L900.0 402.7 L904.2 403.3 L908.4 403.8 L912.6 404.2 M853.2 403.6 L857.4 403.9 L861.7 404.4 L866.0 405.0 L870.2 405.7 L874.5 406.5 L878.7 407.3 L883.0 408.2 L887.3 409.1 L891.6 409.9 L895.9 410.6 L900.2 411.3 L904.5 411.8 L908.8 412.2 L913.1 412.5 M852.3 411.0 L856.7 411.6 L861.0 412.3 L865.4 413.1 L869.7 414.0 L874.1 414.9 L878.4 415.9 L882.8 416.8 L887.2 417.7 L891.6 418.4 L896.0 419.1 L900.4 419.7 L904.8 420.1 L909.2 420.3 L913.6 420.5 M851.5 418.7 L855.9 419.5 L860.3 420.4 L864.8 421.4 L869.2 422.4 L873.7 423.4 L878.2 424.4 L882.6 425.3 L887.1 426.1 L891.6 426.8 L896.1 427.3 L900.6 427.7 L905.1 428.1 L909.6 428.3 L914.0 428.4 M850.6 426.6 L855.1 427.6 L859.7 428.6 L864.2 429.7 L868.7 430.8 L873.3 431.8 L877.9 432.7 L882.5 433.5 L887.1 434.3 L891.6 434.8 L896.2 435.3 L900.8 435.6 L905.4 435.9 L909.9 436.0 L914.5 436.2 M849.7 434.6 L854.3 435.7 L859.0 436.9 L863.6 438.0 L868.3 439.0 L872.9 440.0 L877.6 440.9 L882.3 441.6 L887.0 442.2 L891.7 442.7 L896.3 443.0 L901.0 443.3 L905.7 443.6 L910.3 443.8 L914.9 444.1 M848.8 442.7 L853.5 443.9 L858.3 445.0 L863.0 446.1 L867.8 447.1 L872.6 448.0 L877.4 448.7 L882.1 449.4 L886.9 449.9 L891.7 450.3 L896.5 450.6 L901.2 450.9 L906.0 451.3 L910.7 451.6 L915.4 452.1 M847.9 450.7 L852.8 451.9 L857.6 453.1 L862.5 454.1 L867.3 455.0 L872.2 455.7 L877.1 456.4 L882.0 456.9 L886.9 457.4 L891.7 457.8 L896.6 458.2 L901.4 458.6 L906.2 459.1 L911.1 459.6 L915.9 460.3" fill="none" stroke="#000" stroke-width="1" stroke-opacity="0.9"/></g><path d="M857 452L857 400Q866 388 880 388Q890 392 892 405M858 452L892 455" fill="none" stroke="#c05030" stroke-width="0.8" stroke-opacity="0.7"/><path d="M851 450Q850 400 868 376Q880 352 890 351Q903 354 906 372" fill="none" stroke="#9aff70" stroke-width="0.8" stroke-opacity="0.7"/><path d="M916 428L894.7 462.5" stroke="#40ff60" stroke-width="1" stroke-opacity="0.8"/><polygon points="852.0,294.5 862.7,284.9 884.0,265.6 900.1,257.1 957.8,271.0 942.9,295.6 948.2,359.7 952.5,415.2 935.4,417.2 924.0,420.5 916.0,428.0 914.6,403.6 905.9,307.5" fill="#1a9296"/><clipPath id="c5"><polygon points="852.0,294.5 862.7,284.9 884.0,265.6 900.1,257.1 957.8,271.0 942.9,295.6 948.2,359.7 952.5,415.2 935.4,417.2 924.0,420.5 916.0,428.0 914.6,403.6 905.9,307.5"/></clipPath><g clip-path="url(#c5)"><path d="M852.0 294.5 L852.0 294.5 L852.0 294.5 L852.0 294.5 L852.0 294.5 L852.0 294.5 L852.0 294.5 L852.0 294.5 L852.0 294.5 L852.0 294.5 L852.0 294.5 L852.0 294.5 L852.0 294.5 L852.0 294.5 L852.0 294.5 M864.8 282.7 L864.8 283.8 L864.9 284.9 L864.9 286.0 L864.9 287.0 L864.9 288.1 L864.9 289.2 L865.0 290.3 L865.0 291.4 L865.0 292.5 L865.0 293.6 L865.0 294.7 L865.1 295.8 L865.1 296.9 L865.1 298.0 M877.6 270.8 L877.6 273.0 L877.7 275.2 L877.7 277.4 L877.8 279.6 L877.8 281.7 L877.9 283.9 L877.9 286.1 L877.9 288.3 L878.0 290.5 L878.0 292.7 L878.1 294.9 L878.1 297.0 L878.2 299.2 L878.2 301.4 M891.6 260.7 L891.6 263.9 L891.6 267.0 L891.5 270.2 L891.5 273.3 L891.5 276.5 L891.5 279.6 L891.4 282.8 L891.4 285.9 L891.4 289.1 L891.4 292.2 L891.4 295.4 L891.3 298.5 L891.3 301.7 L891.3 304.8 M907.6 257.9 L907.4 261.5 L907.1 265.1 L906.9 268.7 L906.7 272.3 L906.4 275.8 L906.2 279.4 L906.0 283.0 L905.7 286.6 L905.5 290.2 L905.3 293.8 L905.0 297.3 L904.8 300.9 L904.6 304.5 L904.3 308.1 M924.4 262.1 L923.9 265.1 L923.4 268.2 L922.9 271.2 L922.3 274.3 L921.8 277.3 L921.3 280.3 L920.8 283.4 L920.2 286.4 L919.7 289.5 L919.2 292.5 L918.7 295.5 L918.2 298.6 L917.6 301.6 L917.1 304.7 M941.3 266.3 L940.4 268.7 L939.6 271.2 L938.8 273.6 L938.0 276.0 L937.2 278.5 L936.4 280.9 L935.6 283.3 L934.7 285.8 L933.9 288.2 L933.1 290.6 L932.3 293.1 L931.5 295.5 L930.7 297.9 L929.9 300.4 M958.1 270.5 L957.0 272.3 L955.9 274.2 L954.8 276.0 L953.7 277.8 L952.6 279.6 L951.5 281.5 L950.3 283.3 L949.2 285.1 L948.1 287.0 L947.0 288.8 L945.9 290.6 L944.8 292.4 L943.7 294.3 L942.6 296.1 M852.0 294.5 L856.9 290.1 L863.5 284.1 L870.2 278.1 L876.8 272.1 L883.5 266.1 L891.3 261.7 L899.2 257.6 L907.9 259.0 L916.6 261.1 L925.3 263.2 L934.0 265.3 L942.7 267.4 L951.4 269.5 L957.8 271.0 M852.0 294.5 L856.9 292.0 L863.6 288.5 L870.3 285.1 L877.0 281.6 L883.7 278.1 L891.2 275.8 L898.8 273.6 L906.8 275.0 L914.8 276.0 L922.9 276.6 L930.9 277.3 L938.9 278.0 L947.0 278.7 L952.8 279.2 M852.0 294.5 L856.9 293.8 L863.7 292.9 L870.5 292.0 L877.2 291.1 L884.0 290.2 L891.1 289.9 L898.3 289.6 L905.7 291.1 L913.1 290.9 L920.4 290.1 L927.8 289.4 L935.1 288.7 L942.5 287.9 L947.9 287.4 M852.0 294.5 L857.0 295.7 L863.8 297.3 L870.6 299.0 L877.4 300.6 L884.2 302.3 L891.0 303.9 L897.8 305.6 L904.7 307.2 L911.3 305.7 L918.0 303.6 L924.7 301.5 L931.4 299.3 L938.0 297.2 L942.9 295.6" fill="none" stroke="#000" stroke-width="1" stroke-opacity="0.9"/><path d="M907.5 307.0 L908.4 315.5 L909.2 324.1 L909.8 332.7 L910.3 341.4 L910.7 350.1 L911.0 358.9 L911.2 367.7 L911.4 376.4 L911.6 385.2 L911.9 394.0 L912.3 402.7 L912.8 411.4 L913.5 420.0 L914.2 428.6 M917.0 303.9 L917.7 312.5 L918.3 321.1 L918.8 329.8 L919.1 338.5 L919.4 347.3 L919.6 356.0 L919.8 364.8 L920.0 373.5 L920.3 382.3 L920.7 391.0 L921.2 399.6 L921.9 408.3 L922.7 416.8 L923.7 425.3 M926.2 301.0 L926.8 309.6 L927.2 318.2 L927.5 326.9 L927.8 335.7 L927.9 344.4 L928.1 353.2 L928.4 361.9 L928.7 370.6 L929.1 379.3 L929.6 387.9 L930.3 396.5 L931.2 405.0 L932.2 413.5 L933.2 422.0 M935.3 298.0 L935.7 306.7 L936.0 315.4 L936.2 324.1 L936.3 332.8 L936.5 341.6 L936.7 350.3 L937.1 359.0 L937.5 367.6 L938.1 376.2 L938.8 384.8 L939.7 393.3 L940.7 401.7 L941.8 410.2 L943.0 418.5 M944.1 295.2 L944.4 303.9 L944.6 312.6 L944.7 321.3 L944.9 330.0 L945.2 338.7 L945.5 347.4 L946.0 356.0 L946.6 364.6 L947.3 373.1 L948.2 381.6 L949.2 390.0 L950.3 398.4 L951.5 406.8 L952.7 415.1 M906.0 309.2 L908.7 308.0 L911.3 306.8 L913.9 305.5 L916.5 304.1 L919.1 302.7 L921.7 301.4 L924.3 300.2 L926.9 299.0 L929.5 298.0 L932.2 297.2 L934.8 296.5 L937.5 295.9 L940.2 295.5 L942.9 295.1 M906.8 318.0 L909.4 316.7 L912.0 315.4 L914.6 314.0 L917.2 312.6 L919.8 311.3 L922.4 310.1 L925.0 309.0 L927.6 308.1 L930.3 307.3 L932.9 306.6 L935.6 306.1 L938.3 305.7 L941.0 305.3 L943.7 305.0 M907.5 326.7 L910.1 325.3 L912.7 323.9 L915.3 322.5 L917.9 321.3 L920.5 320.1 L923.1 319.1 L925.8 318.2 L928.4 317.4 L931.1 316.8 L933.7 316.4 L936.4 316.0 L939.1 315.6 L941.8 315.3 L944.4 314.9 M908.2 335.2 L910.8 333.8 L913.4 332.5 L916.0 331.2 L918.6 330.1 L921.3 329.1 L923.9 328.3 L926.5 327.6 L929.2 327.1 L931.9 326.6 L934.5 326.2 L937.2 325.9 L939.9 325.6 L942.6 325.2 L945.2 324.7 M908.9 343.8 L911.5 342.5 L914.1 341.2 L916.8 340.2 L919.4 339.2 L922.0 338.5 L924.7 337.8 L927.3 337.3 L930.0 336.9 L932.7 336.5 L935.4 336.2 L938.0 335.8 L940.7 335.4 L943.3 334.8 L946.0 334.2 M909.7 352.4 L912.3 351.3 L914.9 350.3 L917.5 349.4 L920.2 348.7 L922.8 348.1 L925.5 347.6 L928.1 347.2 L930.8 346.9 L933.5 346.5 L936.2 346.1 L938.8 345.6 L941.5 345.0 L944.1 344.3 L946.7 343.4 M910.4 361.4 L913.0 360.4 L915.7 359.6 L918.3 358.9 L921.0 358.3 L923.6 357.9 L926.3 357.5 L929.0 357.2 L931.6 356.8 L934.3 356.4 L936.9 355.8 L939.6 355.2 L942.2 354.4 L944.8 353.5 L947.5 352.4 M911.2 370.5 L913.8 369.8 L916.5 369.2 L919.1 368.6 L921.8 368.2 L924.4 367.9 L927.1 367.5 L929.8 367.1 L932.4 366.6 L935.1 366.1 L937.7 365.3 L940.3 364.5 L943.0 363.5 L945.6 362.3 L948.2 361.1 M912.0 380.0 L914.6 379.4 L917.3 379.0 L919.9 378.6 L922.6 378.2 L925.3 377.8 L927.9 377.4 L930.6 376.9 L933.2 376.3 L935.9 375.5 L938.5 374.6 L941.1 373.5 L943.7 372.3 L946.3 371.0 L948.8 369.6 M912.8 389.8 L915.5 389.3 L918.1 388.9 L920.8 388.6 L923.4 388.2 L926.1 387.7 L928.7 387.1 L931.4 386.4 L934.0 385.6 L936.6 384.6 L939.2 383.5 L941.8 382.2 L944.4 380.9 L946.9 379.5 L949.5 378.1 M913.6 399.7 L916.3 399.3 L918.9 398.9 L921.6 398.5 L924.2 398.0 L926.9 397.4 L929.5 396.6 L932.1 395.7 L934.7 394.7 L937.3 393.5 L939.9 392.2 L942.5 390.8 L945.1 389.4 L947.6 388.0 L950.2 386.6 M914.5 409.7 L917.1 409.3 L919.8 408.8 L922.4 408.3 L925.0 407.6 L927.7 406.8 L930.3 405.8 L932.9 404.7 L935.4 403.5 L938.0 402.1 L940.6 400.7 L943.2 399.3 L945.7 397.9 L948.3 396.5 L950.9 395.3 M915.3 419.6 L917.9 419.2 L920.6 418.6 L923.2 417.8 L925.8 416.9 L928.4 415.9 L931.0 414.7 L933.6 413.4 L936.2 412.1 L938.7 410.6 L941.3 409.2 L943.9 407.8 L946.4 406.5 L949.0 405.3 L951.6 404.2 M916.1 429.5 L918.8 428.8 L921.4 428.0 L924.0 427.1 L926.6 426.0 L929.1 424.7 L931.7 423.4 L934.3 422.0 L936.8 420.6 L939.4 419.1 L942.0 417.8 L944.6 416.5 L947.1 415.3 L949.7 414.3 L952.4 413.4" fill="none" stroke="#000" stroke-width="1" stroke-opacity="0.9"/></g><path d="M852 294.5L862.7 284.9L884 265.6L900.1 257.1L957.8 271M905.9 307.5L914.6 403.6L916 428" fill="none" stroke="#30ffff" stroke-width="1" stroke-opacity="0.8"/><polygon points="957.8,271.0 1233.6,339.2 1242.4,365.4 1249.0,388.0 1253.0,420.0 1254.5,455.0 1254.6,491.0 952.5,415.2 948.2,359.7 942.9,295.6" fill="#8c8c1e"/><polygon points="942.9,295.6 957.0,300.0 960.0,412.0 952.5,415.2 948.2,359.7" fill="#6f8c30"/><polygon points="1234.0,340.0 1238.0,346.0 1246.0,372.0 1252.0,400.0 1248.0,398.0 1240.0,366.0 1235.0,350.0" fill="#101004"/><clipPath id="c6"><polygon points="957.8,271.0 1233.6,339.2 1242.4,365.4 1249.0,388.0 1253.0,420.0 1254.5,455.0 1254.6,491.0 952.5,415.2 948.2,359.7 942.9,295.6"/></clipPath><g clip-path="url(#c6)"><path d="M945.8 296.3 L946.9 305.0 L947.7 313.6 L948.3 322.1 L948.6 330.5 L948.6 338.9 L948.5 347.2 L948.2 355.5 L947.9 363.8 L947.6 372.1 L947.5 380.5 L947.5 388.8 L947.8 397.3 L948.3 405.8 L949.2 414.4 M957.8 299.4 L958.6 307.9 L959.1 316.4 L959.3 324.9 L959.3 333.2 L959.1 341.5 L958.8 349.8 L958.6 358.1 L958.3 366.4 L958.2 374.8 L958.3 383.2 L958.6 391.6 L959.3 400.2 L960.2 408.8 L961.3 417.4 M969.4 302.3 L969.8 310.8 L970.0 319.2 L970.0 327.6 L969.8 335.9 L969.5 344.2 L969.2 352.5 L969.0 360.8 L968.9 369.1 L969.1 377.5 L969.5 386.0 L970.2 394.5 L971.2 403.1 L972.4 411.8 L973.8 420.5 M980.5 305.1 L980.7 313.5 L980.6 321.9 L980.4 330.2 L980.1 338.5 L979.9 346.8 L979.7 355.1 L979.7 363.5 L979.9 371.9 L980.4 380.4 L981.1 388.9 L982.2 397.5 L983.4 406.2 L984.9 415.0 L986.6 423.7 M991.3 307.9 L991.2 316.2 L991.0 324.5 L990.7 332.8 L990.5 341.1 L990.4 349.4 L990.4 357.8 L990.7 366.2 L991.2 374.7 L992.1 383.3 L993.2 392.0 L994.5 400.6 L996.0 409.4 L997.7 418.2 L999.4 427.0 M1001.9 310.6 L1001.6 318.8 L1001.4 327.1 L1001.1 335.4 L1001.0 343.8 L1001.1 352.2 L1001.5 360.6 L1002.1 369.1 L1003.0 377.7 L1004.2 386.4 L1005.5 395.1 L1007.1 403.8 L1008.8 412.6 L1010.5 421.4 L1012.2 430.2 M1012.2 313.2 L1012.0 321.5 L1011.8 329.8 L1011.7 338.1 L1011.9 346.5 L1012.3 355.0 L1013.0 363.5 L1013.9 372.1 L1015.1 380.8 L1016.6 389.5 L1018.2 398.3 L1019.9 407.0 L1021.6 415.8 L1023.3 424.6 L1024.8 433.3 M1022.5 315.8 L1022.4 324.1 L1022.4 332.5 L1022.6 340.9 L1023.1 349.3 L1023.8 357.9 L1024.9 366.5 L1026.1 375.2 L1027.6 383.9 L1029.3 392.7 L1031.0 401.5 L1032.7 410.3 L1034.3 419.0 L1035.8 427.7 L1037.0 436.4 M1033.0 318.4 L1033.1 326.8 L1033.3 335.2 L1033.9 343.7 L1034.7 352.3 L1035.8 360.9 L1037.1 369.6 L1038.7 378.3 L1040.3 387.1 L1042.1 395.9 L1043.8 404.7 L1045.4 413.4 L1046.8 422.2 L1048.0 430.8 L1048.9 439.4 M1043.7 321.2 L1044.1 329.6 L1044.7 338.1 L1045.6 346.7 L1046.7 355.3 L1048.1 364.0 L1049.7 372.8 L1051.4 381.6 L1053.1 390.3 L1054.8 399.1 L1056.4 407.9 L1057.8 416.6 L1058.9 425.2 L1059.8 433.8 L1060.4 442.3 M1054.8 324.0 L1055.5 332.5 L1056.4 341.1 L1057.7 349.7 L1059.1 358.5 L1060.7 367.2 L1062.4 376.0 L1064.2 384.8 L1065.9 393.6 L1067.4 402.3 L1068.7 411.0 L1069.8 419.6 L1070.7 428.2 L1071.2 436.6 L1071.5 445.1 M1066.3 326.9 L1067.3 335.5 L1068.6 344.2 L1070.1 352.9 L1071.7 361.7 L1073.5 370.4 L1075.2 379.2 L1076.9 388.0 L1078.4 396.7 L1079.7 405.4 L1080.7 414.0 L1081.5 422.5 L1082.0 431.0 L1082.2 439.4 L1082.2 447.7 M1078.2 329.9 L1079.5 338.6 L1081.1 347.3 L1082.7 356.1 L1084.5 364.9 L1086.2 373.7 L1087.9 382.4 L1089.3 391.1 L1090.6 399.8 L1091.6 408.4 L1092.3 416.9 L1092.7 425.3 L1092.9 433.7 L1092.9 442.1 L1092.7 450.4 M1090.4 333.0 L1092.0 341.8 L1093.7 350.5 L1095.5 359.3 L1097.2 368.1 L1098.8 376.8 L1100.3 385.5 L1101.5 394.2 L1102.4 402.8 L1103.0 411.3 L1103.4 419.7 L1103.6 428.1 L1103.5 436.4 L1103.3 444.7 L1103.1 453.0 M1103.0 336.2 L1104.7 345.0 L1106.5 353.8 L1108.2 362.5 L1109.8 371.3 L1111.2 380.0 L1112.3 388.6 L1113.2 397.1 L1113.8 405.6 L1114.1 414.1 L1114.2 422.4 L1114.1 430.7 L1113.9 439.0 L1113.7 447.3 L1113.6 455.6 M1115.7 339.4 L1117.5 348.2 L1119.1 357.0 L1120.7 365.7 L1122.0 374.4 L1123.1 383.0 L1124.0 391.5 L1124.5 400.0 L1124.8 408.4 L1124.8 416.8 L1124.7 425.1 L1124.5 433.4 L1124.3 441.6 L1124.2 449.9 L1124.2 458.3 M1128.4 342.6 L1130.1 351.4 L1131.6 360.1 L1132.9 368.8 L1133.9 377.4 L1134.7 385.9 L1135.2 394.4 L1135.4 402.8 L1135.4 411.1 L1135.3 419.4 L1135.1 427.7 L1134.9 436.0 L1134.8 444.3 L1134.9 452.6 L1135.2 461.0 M1141.0 345.8 L1142.5 354.5 L1143.7 363.2 L1144.7 371.8 L1145.4 380.3 L1145.8 388.7 L1146.0 397.1 L1146.0 405.4 L1145.9 413.7 L1145.7 422.0 L1145.5 430.3 L1145.5 438.6 L1145.6 447.0 L1145.9 455.4 L1146.5 463.9 M1153.3 349.0 L1154.5 357.6 L1155.5 366.2 L1156.1 374.7 L1156.5 383.1 L1156.6 391.4 L1156.6 399.8 L1156.4 408.1 L1156.3 416.3 L1156.1 424.6 L1156.1 433.0 L1156.3 441.3 L1156.7 449.8 L1157.4 458.3 L1158.3 466.8 M1165.3 352.0 L1166.2 360.5 L1166.8 369.0 L1167.1 377.4 L1167.2 385.8 L1167.1 394.1 L1167.0 402.4 L1166.8 410.7 L1166.7 419.0 L1166.7 427.3 L1167.0 435.7 L1167.4 444.1 L1168.2 452.7 L1169.2 461.2 L1170.5 469.9 M1176.9 354.9 L1177.4 363.4 L1177.7 371.8 L1177.8 380.1 L1177.7 388.4 L1177.5 396.7 L1177.4 405.0 L1177.3 413.3 L1177.3 421.7 L1177.6 430.1 L1178.2 438.5 L1179.0 447.0 L1180.1 455.6 L1181.4 464.3 L1183.0 473.0 M1188.0 357.8 L1188.2 366.1 L1188.3 374.5 L1188.2 382.8 L1188.0 391.1 L1187.9 399.3 L1187.8 407.6 L1188.0 416.0 L1188.3 424.4 L1188.9 432.9 L1189.8 441.4 L1191.0 450.1 L1192.4 458.7 L1194.0 467.5 L1195.8 476.2 M1198.8 360.5 L1198.8 368.8 L1198.7 377.1 L1198.5 385.4 L1198.4 393.7 L1198.4 402.0 L1198.6 410.4 L1199.0 418.8 L1199.7 427.3 L1200.6 435.8 L1201.9 444.5 L1203.3 453.2 L1205.0 461.9 L1206.8 470.7 L1208.6 479.5 M1209.3 363.2 L1209.2 371.4 L1209.0 379.7 L1208.9 388.0 L1209.0 396.3 L1209.2 404.7 L1209.7 413.2 L1210.4 421.7 L1211.4 430.2 L1212.7 438.9 L1214.3 447.6 L1216.0 456.3 L1217.8 465.1 L1219.6 473.9 L1221.4 482.7 M1219.6 365.8 L1219.5 374.1 L1219.4 382.4 L1219.5 390.7 L1219.8 399.1 L1220.3 407.5 L1221.2 416.1 L1222.3 424.7 L1223.6 433.3 L1225.2 442.0 L1226.9 450.8 L1228.7 459.6 L1230.6 468.3 L1232.3 477.1 L1233.9 485.8 M1230.0 368.4 L1229.9 376.7 L1230.1 385.1 L1230.4 393.5 L1231.0 401.9 L1231.9 410.5 L1233.1 419.1 L1234.5 427.7 L1236.1 436.5 L1237.9 445.2 L1239.7 454.0 L1241.5 462.8 L1243.3 471.5 L1244.9 480.2 L1246.2 488.9 M1240.4 371.1 L1240.6 379.4 L1241.0 387.8 L1241.7 396.3 L1242.7 404.9 L1243.9 413.5 L1245.4 422.2 L1247.0 430.9 L1248.8 439.7 L1250.7 448.4 L1252.5 457.2 L1254.2 466.0 L1255.7 474.7 L1257.0 483.3 L1258.1 491.9 M943.1 298.3 L964.5 303.3 L985.8 308.1 L1007.2 312.7 L1028.5 317.3 L1049.9 321.9 L1071.2 326.6 L1092.5 331.3 L1113.9 336.3 L1135.3 341.5 L1156.7 346.9 L1178.1 352.6 L1199.6 358.5 L1221.0 364.6 L1242.5 370.8 M943.9 307.6 L965.2 312.3 L986.6 316.9 L1007.9 321.5 L1029.3 326.1 L1050.6 330.8 L1072.0 335.7 L1093.4 340.7 L1114.8 346.0 L1136.2 351.5 L1157.7 357.3 L1179.1 363.3 L1200.6 369.4 L1222.1 375.6 L1243.6 381.9 M944.6 316.5 L965.9 321.1 L987.3 325.7 L1008.7 330.3 L1030.1 335.1 L1051.4 340.0 L1072.9 345.2 L1094.3 350.5 L1115.7 356.2 L1137.2 362.0 L1158.7 368.0 L1180.2 374.2 L1201.7 380.5 L1223.2 386.8 L1244.7 393.0 M945.3 325.3 L966.7 329.9 L988.1 334.6 L1009.4 339.4 L1030.9 344.4 L1052.3 349.6 L1073.7 355.1 L1095.2 360.8 L1116.7 366.8 L1138.2 372.9 L1159.7 379.1 L1181.3 385.4 L1202.8 391.6 L1224.3 397.8 L1245.8 403.8 M946.0 334.1 L967.4 338.9 L988.8 343.8 L1010.2 348.8 L1031.7 354.2 L1053.2 359.7 L1074.7 365.5 L1096.2 371.5 L1117.7 377.7 L1139.2 383.9 L1160.8 390.2 L1182.3 396.5 L1203.9 402.6 L1225.4 408.5 L1246.9 414.3 M946.7 343.2 L968.2 348.1 L989.6 353.3 L1011.1 358.7 L1032.6 364.4 L1054.1 370.3 L1075.6 376.4 L1097.2 382.6 L1118.7 388.8 L1140.3 395.1 L1161.8 401.3 L1183.4 407.3 L1204.9 413.2 L1226.4 418.9 L1247.9 424.3 M947.5 352.6 L968.9 357.8 L990.4 363.4 L1012.0 369.1 L1033.5 375.1 L1055.0 381.2 L1076.6 387.4 L1098.2 393.7 L1119.8 399.9 L1141.3 406.1 L1162.9 412.1 L1184.4 417.9 L1205.9 423.4 L1227.4 428.8 L1248.9 433.9 M948.3 362.4 L969.8 368.0 L991.3 373.8 L1012.9 379.9 L1034.4 386.1 L1056.0 392.3 L1077.6 398.6 L1099.2 404.8 L1120.8 410.9 L1142.3 416.8 L1163.8 422.5 L1185.4 428.0 L1206.9 433.2 L1228.3 438.2 L1249.8 443.0 M949.1 372.7 L970.6 378.6 L992.2 384.7 L1013.8 390.9 L1035.4 397.2 L1057.0 403.4 L1078.6 409.6 L1100.2 415.6 L1121.7 421.5 L1143.3 427.1 L1164.8 432.4 L1186.3 437.6 L1207.8 442.5 L1229.2 447.2 L1250.7 451.9 M949.9 383.4 L971.5 389.6 L993.1 395.8 L1014.8 402.1 L1036.4 408.3 L1058.0 414.4 L1079.5 420.4 L1101.1 426.1 L1122.7 431.6 L1144.2 436.9 L1165.7 441.9 L1187.2 446.8 L1208.6 451.5 L1230.1 456.1 L1251.5 460.6 M950.8 394.4 L972.5 400.7 L994.1 406.9 L1015.7 413.1 L1037.3 419.2 L1058.9 425.1 L1080.5 430.7 L1102.0 436.1 L1123.5 441.3 L1145.1 446.3 L1166.6 451.0 L1188.0 455.7 L1209.5 460.3 L1231.0 464.8 L1252.4 469.5 M951.7 405.6 L973.4 411.8 L995.0 418.0 L1016.6 424.0 L1038.2 429.7 L1059.8 435.3 L1081.3 440.6 L1102.9 445.7 L1124.4 450.6 L1145.9 455.3 L1167.4 459.9 L1188.9 464.5 L1210.4 469.0 L1231.8 473.7 L1253.4 478.6 M952.6 416.7 L974.3 422.8 L995.9 428.7 L1017.5 434.4 L1039.1 439.8 L1060.6 445.1 L1082.2 450.0 L1103.7 454.8 L1125.2 459.5 L1146.7 464.1 L1168.2 468.7 L1189.7 473.3 L1211.2 478.0 L1232.8 482.9 L1254.3 488.1" fill="none" stroke="#000" stroke-width="1" stroke-opacity="0.9"/><path d="M939.2 300.5 L940.9 309.9 L942.2 319.3 L943.0 328.6 L943.5 337.8 L943.6 347.0 L943.5 356.1 L943.2 365.1 L942.9 374.2 L942.6 383.2 L942.4 392.2 L942.6 401.3 L943.1 410.4 L944.0 419.6 L945.2 428.9 M952.5 302.2 L953.7 311.6 L954.4 321.0 L954.8 330.3 L954.9 339.6 L954.7 348.7 L954.3 357.9 L954.0 367.0 L953.7 376.1 L953.6 385.3 L953.8 394.5 L954.4 403.7 L955.3 413.0 L956.7 422.4 L958.4 431.9 M965.2 303.8 L965.8 313.3 L966.1 322.7 L966.1 332.0 L965.8 341.3 L965.5 350.5 L965.1 359.7 L964.9 368.9 L964.8 378.2 L965.1 387.5 L965.7 396.8 L966.7 406.2 L968.2 415.7 L970.0 425.3 L972.1 435.0 M977.3 305.4 L977.5 314.8 L977.4 324.2 L977.1 333.6 L976.7 342.9 L976.3 352.2 L976.1 361.6 L976.1 370.9 L976.4 380.3 L977.1 389.7 L978.2 399.3 L979.7 408.9 L981.6 418.6 L983.7 428.3 L986.1 438.1 M988.8 306.8 L988.6 316.3 L988.3 325.8 L987.9 335.2 L987.5 344.6 L987.3 354.0 L987.3 363.5 L987.7 373.0 L988.5 382.5 L989.7 392.1 L991.3 401.8 L993.2 411.6 L995.4 421.5 L997.8 431.4 L1000.2 441.3 M999.9 308.2 L999.5 317.8 L999.1 327.3 L998.7 336.8 L998.6 346.3 L998.7 355.9 L999.1 365.5 L1000.0 375.1 L1001.3 384.8 L1002.9 394.7 L1004.9 404.5 L1007.1 414.5 L1009.5 424.5 L1011.9 434.5 L1014.2 444.5 M1010.8 309.6 L1010.4 319.2 L1010.0 328.8 L1009.9 338.5 L1010.1 348.1 L1010.6 357.8 L1011.5 367.6 L1012.9 377.4 L1014.6 387.3 L1016.6 397.3 L1018.9 407.3 L1021.2 417.4 L1023.6 427.5 L1025.9 437.5 L1028.0 447.6 M1021.7 311.0 L1021.4 320.7 L1021.3 330.4 L1021.5 340.2 L1022.1 350.0 L1023.1 359.8 L1024.5 369.8 L1026.3 379.7 L1028.4 389.8 L1030.7 399.9 L1033.0 410.1 L1035.4 420.3 L1037.6 430.4 L1039.7 440.6 L1041.4 450.6 M1032.7 312.4 L1032.7 322.2 L1033.0 332.1 L1033.7 342.0 L1034.7 351.9 L1036.2 362.0 L1038.1 372.0 L1040.2 382.2 L1042.5 392.4 L1044.9 402.6 L1047.2 412.9 L1049.4 423.1 L1051.3 433.3 L1052.9 443.5 L1054.2 453.5 M1044.1 313.9 L1044.5 323.8 L1045.3 333.8 L1046.4 343.9 L1048.0 354.0 L1049.9 364.2 L1052.0 374.4 L1054.3 384.7 L1056.7 395.0 L1059.0 405.3 L1061.1 415.6 L1063.0 425.9 L1064.5 436.1 L1065.6 446.2 L1066.3 456.3 M1056.1 315.4 L1056.9 325.5 L1058.1 335.6 L1059.8 345.8 L1061.7 356.1 L1063.9 366.4 L1066.2 376.8 L1068.6 387.2 L1070.8 397.6 L1072.9 408.0 L1074.7 418.3 L1076.1 428.6 L1077.1 438.8 L1077.7 448.9 L1078.0 458.9 M1068.6 317.0 L1069.9 327.2 L1071.6 337.5 L1073.6 347.9 L1075.8 358.3 L1078.1 368.7 L1080.5 379.2 L1082.7 389.7 L1084.7 400.1 L1086.4 410.5 L1087.7 420.9 L1088.6 431.1 L1089.1 441.3 L1089.3 451.4 L1089.1 461.4 M1081.7 318.6 L1083.5 329.0 L1085.5 339.5 L1087.8 350.0 L1090.1 360.5 L1092.4 371.0 L1094.6 381.6 L1096.5 392.1 L1098.1 402.6 L1099.3 413.0 L1100.1 423.3 L1100.5 433.6 L1100.6 443.7 L1100.3 453.8 L1099.9 463.8 M1095.4 320.4 L1097.5 330.9 L1099.8 341.5 L1102.1 352.1 L1104.3 362.7 L1106.4 373.3 L1108.3 383.9 L1109.8 394.4 L1110.9 404.9 L1111.6 415.3 L1111.9 425.6 L1111.9 435.9 L1111.6 446.1 L1111.1 456.2 L1110.6 466.3 M1109.5 322.2 L1111.8 332.8 L1114.1 343.5 L1116.3 354.2 L1118.3 364.9 L1120.1 375.5 L1121.5 386.1 L1122.5 396.7 L1123.1 407.2 L1123.3 417.5 L1123.2 427.9 L1122.8 438.1 L1122.3 448.3 L1121.8 458.5 L1121.3 468.7 M1123.8 324.0 L1126.1 334.7 L1128.3 345.5 L1130.3 356.3 L1131.9 367.0 L1133.2 377.7 L1134.1 388.3 L1134.6 398.8 L1134.7 409.3 L1134.5 419.7 L1134.1 430.0 L1133.6 440.3 L1133.0 450.6 L1132.6 460.9 L1132.4 471.2 M1138.2 325.8 L1140.3 336.6 L1142.2 347.5 L1143.8 358.3 L1145.0 369.0 L1145.7 379.7 L1146.1 390.3 L1146.2 400.8 L1145.9 411.3 L1145.4 421.8 L1144.9 432.1 L1144.3 442.5 L1143.9 452.9 L1143.7 463.3 L1143.8 473.8 M1152.3 327.6 L1154.1 338.5 L1155.6 349.4 L1156.7 360.2 L1157.4 370.9 L1157.7 381.6 L1157.6 392.2 L1157.3 402.8 L1156.8 413.3 L1156.2 423.8 L1155.6 434.3 L1155.2 444.7 L1155.1 455.3 L1155.3 465.8 L1155.8 476.5 M1166.1 329.3 L1167.5 340.3 L1168.5 351.2 L1169.0 362.0 L1169.2 372.8 L1169.1 383.5 L1168.7 394.1 L1168.1 404.7 L1167.5 415.3 L1167.0 425.8 L1166.6 436.4 L1166.5 447.0 L1166.8 457.7 L1167.4 468.5 L1168.5 479.3 M1179.3 331.0 L1180.2 342.0 L1180.7 352.9 L1180.8 363.7 L1180.6 374.5 L1180.1 385.2 L1179.5 395.9 L1178.9 406.6 L1178.4 417.3 L1178.0 428.0 L1178.0 438.7 L1178.3 449.5 L1179.0 460.3 L1180.2 471.3 L1181.7 482.3 M1192.0 332.6 L1192.4 343.6 L1192.4 354.5 L1192.1 365.4 L1191.5 376.2 L1190.9 387.0 L1190.3 397.8 L1189.8 408.5 L1189.5 419.3 L1189.5 430.1 L1189.9 441.0 L1190.7 452.0 L1191.9 463.0 L1193.5 474.2 L1195.3 485.4 M1204.0 334.2 L1203.9 345.2 L1203.6 356.1 L1203.0 367.0 L1202.3 377.9 L1201.7 388.7 L1201.2 399.6 L1201.0 410.5 L1201.1 421.4 L1201.6 432.4 L1202.4 443.5 L1203.7 454.6 L1205.3 465.9 L1207.2 477.2 L1209.3 488.6 M1215.5 335.6 L1215.1 346.7 L1214.5 357.7 L1213.8 368.6 L1213.2 379.6 L1212.7 390.5 L1212.6 401.5 L1212.7 412.6 L1213.3 423.7 L1214.2 434.8 L1215.6 446.1 L1217.2 457.4 L1219.2 468.8 L1221.3 480.3 L1223.5 491.7 M1226.6 337.0 L1226.0 348.1 L1225.3 359.2 L1224.7 370.2 L1224.3 381.3 L1224.2 392.4 L1224.4 403.5 L1225.0 414.7 L1226.0 426.0 L1227.4 437.3 L1229.2 448.8 L1231.2 460.3 L1233.3 471.8 L1235.4 483.4 L1237.5 494.9 M1237.5 338.4 L1236.8 349.6 L1236.2 360.7 L1235.9 371.9 L1235.8 383.1 L1236.1 394.3 L1236.8 405.6 L1237.9 417.0 L1239.4 428.4 L1241.2 440.0 L1243.2 451.5 L1245.3 463.1 L1247.4 474.8 L1249.5 486.4 L1251.3 498.0 M1248.4 339.8 L1247.8 351.0 L1247.5 362.3 L1247.5 373.6 L1247.9 384.9 L1248.6 396.3 L1249.8 407.8 L1251.4 419.4 L1253.2 431.0 L1255.2 442.6 L1257.3 454.3 L1259.5 466.0 L1261.4 477.7 L1263.2 489.4 L1264.6 501.0 M935.5 303.9 L957.9 306.2 L980.3 308.1 L1002.6 309.8 L1025.0 311.4 L1047.4 313.0 L1069.8 314.6 L1092.2 316.3 L1114.6 318.4 L1137.1 320.8 L1159.6 323.6 L1182.2 326.8 L1204.7 330.4 L1227.3 334.3 L1249.9 338.5 M936.6 313.8 L958.9 315.8 L981.3 317.7 L1003.6 319.4 L1026.0 321.2 L1048.3 323.0 L1070.7 325.1 L1093.1 327.5 L1115.6 330.2 L1138.1 333.3 L1160.6 336.9 L1183.2 340.8 L1205.7 345.0 L1228.3 349.4 L1250.9 354.0 M937.7 323.1 L960.0 325.1 L982.3 327.1 L1004.6 329.1 L1026.9 331.2 L1049.3 333.6 L1071.7 336.3 L1094.2 339.4 L1116.6 342.8 L1139.2 346.7 L1161.7 350.9 L1184.2 355.3 L1206.8 360.0 L1229.3 364.7 L1251.8 369.3 M938.7 332.2 L961.0 334.4 L983.3 336.6 L1005.6 339.1 L1028.0 341.8 L1050.4 344.8 L1072.8 348.2 L1095.3 352.0 L1117.7 356.1 L1140.3 360.6 L1162.8 365.3 L1185.3 370.1 L1207.8 375.0 L1230.3 379.7 L1252.8 384.2 M939.8 341.4 L962.1 343.9 L984.4 346.6 L1006.7 349.6 L1029.1 353.0 L1051.5 356.7 L1073.9 360.8 L1096.4 365.3 L1118.9 370.0 L1141.4 374.9 L1163.9 379.9 L1186.4 384.9 L1208.8 389.7 L1231.2 394.3 L1253.7 398.5 M940.9 350.9 L963.2 353.9 L985.5 357.2 L1007.8 360.9 L1030.2 365.0 L1052.7 369.4 L1075.1 374.1 L1097.6 379.1 L1120.1 384.2 L1142.5 389.3 L1165.0 394.4 L1187.4 399.3 L1209.8 403.9 L1232.2 408.1 L1254.5 411.9 M942.0 360.9 L964.3 364.5 L986.7 368.5 L1009.1 372.9 L1031.5 377.6 L1053.9 382.6 L1076.4 387.8 L1098.8 393.1 L1121.2 398.3 L1143.6 403.5 L1166.0 408.5 L1188.4 413.1 L1210.7 417.3 L1233.0 421.2 L1255.3 424.6 M943.3 371.5 L965.6 375.8 L988.0 380.5 L1010.4 385.5 L1032.8 390.7 L1055.2 396.1 L1077.6 401.6 L1100.0 407.0 L1122.4 412.2 L1144.7 417.2 L1167.0 421.9 L1189.3 426.1 L1211.6 429.9 L1233.8 433.4 L1256.0 436.5 M944.6 382.8 L966.9 387.8 L989.3 393.0 L1011.7 398.5 L1034.1 404.1 L1056.5 409.7 L1078.8 415.2 L1101.2 420.5 L1123.5 425.5 L1145.7 430.2 L1168.0 434.5 L1190.2 438.3 L1212.4 441.8 L1234.6 445.0 L1256.7 447.9 M945.9 394.8 L968.3 400.3 L990.7 405.9 L1013.0 411.7 L1035.4 417.4 L1057.7 423.0 L1080.0 428.4 L1102.3 433.4 L1124.5 438.1 L1146.7 442.4 L1168.9 446.3 L1191.0 449.8 L1213.2 453.1 L1235.3 456.1 L1257.4 459.1 M947.4 407.1 L969.7 413.0 L992.0 418.9 L1014.4 424.7 L1036.7 430.4 L1058.9 435.8 L1081.1 440.9 L1103.3 445.6 L1125.5 449.9 L1147.6 453.9 L1169.7 457.5 L1191.8 460.8 L1213.9 464.0 L1236.0 467.2 L1258.2 470.4 M948.8 419.7 L971.1 425.7 L993.4 431.7 L1015.7 437.4 L1037.9 442.8 L1060.1 448.0 L1082.2 452.7 L1104.3 457.0 L1126.4 461.0 L1148.5 464.7 L1170.5 468.2 L1192.6 471.6 L1214.7 475.0 L1236.8 478.5 L1258.9 482.3 M950.2 432.1 L972.5 438.2 L994.7 444.0 L1016.9 449.5 L1039.0 454.6 L1061.1 459.4 L1083.2 463.8 L1105.2 467.8 L1127.3 471.6 L1149.3 475.3 L1171.3 478.8 L1193.4 482.5 L1215.5 486.3 L1237.6 490.3 L1259.7 494.8" fill="none" stroke="#000" stroke-width="0.9" stroke-opacity="0.35"/><path d="M957.8 271.0 L956.7 272.8 L955.7 274.5 L954.6 276.3 L953.5 278.0 L952.5 279.8 L951.4 281.5 L950.3 283.3 L949.3 285.1 L948.2 286.8 L947.2 288.6 L946.1 290.3 L945.0 292.1 L944.0 293.8 L942.9 295.6 M968.4 273.7 L967.4 275.4 L966.4 277.2 L965.4 279.0 L964.4 280.8 L963.4 282.5 L962.4 284.3 L961.4 286.1 L960.4 287.9 L959.4 289.6 L958.4 291.4 L957.4 293.2 L956.4 295.0 L955.4 296.7 L954.4 298.5 M979.1 276.3 L978.1 278.1 L977.2 279.9 L976.3 281.7 L975.3 283.5 L974.4 285.3 L973.5 287.1 L972.5 288.9 L971.6 290.7 L970.6 292.5 L969.7 294.3 L968.8 296.1 L967.8 297.9 L966.9 299.7 L966.0 301.4 M989.7 279.0 L988.9 280.8 L988.0 282.6 L987.1 284.4 L986.2 286.2 L985.4 288.0 L984.5 289.9 L983.6 291.7 L982.7 293.5 L981.9 295.3 L981.0 297.1 L980.1 298.9 L979.2 300.7 L978.4 302.6 L977.5 304.4 M1000.4 281.6 L999.6 283.5 L998.7 285.3 L997.9 287.1 L997.1 289.0 L996.3 290.8 L995.5 292.6 L994.7 294.5 L993.9 296.3 L993.1 298.1 L992.3 300.0 L991.4 301.8 L990.6 303.6 L989.8 305.5 L989.0 307.3 M1011.0 284.3 L1010.3 286.1 L1009.5 288.0 L1008.8 289.8 L1008.0 291.7 L1007.3 293.5 L1006.5 295.4 L1005.8 297.3 L1005.0 299.1 L1004.3 301.0 L1003.5 302.8 L1002.8 304.7 L1002.0 306.5 L1001.3 308.4 L1000.5 310.2 M1021.7 286.9 L1021.0 288.8 L1020.3 290.7 L1019.6 292.6 L1018.9 294.4 L1018.2 296.3 L1017.5 298.2 L1016.9 300.0 L1016.2 301.9 L1015.5 303.8 L1014.8 305.7 L1014.1 307.5 L1013.4 309.4 L1012.7 311.3 L1012.1 313.1 M1032.3 289.6 L1031.7 291.5 L1031.1 293.4 L1030.4 295.3 L1029.8 297.2 L1029.2 299.1 L1028.6 300.9 L1027.9 302.8 L1027.3 304.7 L1026.7 306.6 L1026.1 308.5 L1025.5 310.4 L1024.8 312.3 L1024.2 314.2 L1023.6 316.1 M1042.9 292.3 L1042.4 294.2 L1041.8 296.1 L1041.3 298.0 L1040.7 299.9 L1040.1 301.8 L1039.6 303.7 L1039.0 305.6 L1038.5 307.5 L1037.9 309.4 L1037.4 311.3 L1036.8 313.3 L1036.2 315.2 L1035.7 317.1 L1035.1 319.0 M1053.6 294.9 L1053.1 296.8 L1052.6 298.8 L1052.1 300.7 L1051.6 302.6 L1051.1 304.6 L1050.6 306.5 L1050.1 308.4 L1049.6 310.3 L1049.1 312.3 L1048.6 314.2 L1048.1 316.1 L1047.6 318.1 L1047.1 320.0 L1046.6 321.9 M1064.2 297.6 L1063.8 299.5 L1063.4 301.5 L1062.9 303.4 L1062.5 305.4 L1062.1 307.3 L1061.6 309.3 L1061.2 311.2 L1060.8 313.2 L1060.3 315.1 L1059.9 317.0 L1059.5 319.0 L1059.0 320.9 L1058.6 322.9 L1058.2 324.8 M1074.9 300.2 L1074.5 302.2 L1074.1 304.2 L1073.8 306.1 L1073.4 308.1 L1073.0 310.1 L1072.6 312.0 L1072.3 314.0 L1071.9 316.0 L1071.5 317.9 L1071.2 319.9 L1070.8 321.9 L1070.4 323.8 L1070.1 325.8 L1069.7 327.8 M1085.5 302.9 L1085.2 304.9 L1084.9 306.9 L1084.6 308.8 L1084.3 310.8 L1084.0 312.8 L1083.7 314.8 L1083.4 316.8 L1083.1 318.8 L1082.8 320.8 L1082.4 322.7 L1082.1 324.7 L1081.8 326.7 L1081.5 328.7 L1081.2 330.7 M1096.2 305.6 L1095.9 307.6 L1095.7 309.6 L1095.4 311.6 L1095.2 313.6 L1094.9 315.6 L1094.7 317.6 L1094.5 319.6 L1094.2 321.6 L1094.0 323.6 L1093.7 325.6 L1093.5 327.6 L1093.2 329.6 L1093.0 331.6 L1092.8 333.6 M1106.8 308.2 L1106.6 310.2 L1106.4 312.3 L1106.3 314.3 L1106.1 316.3 L1105.9 318.3 L1105.7 320.3 L1105.5 322.4 L1105.4 324.4 L1105.2 326.4 L1105.0 328.4 L1104.8 330.5 L1104.6 332.5 L1104.5 334.5 L1104.3 336.5 M1117.4 310.9 L1117.3 312.9 L1117.2 314.9 L1117.1 317.0 L1117.0 319.0 L1116.9 321.1 L1116.7 323.1 L1116.6 325.2 L1116.5 327.2 L1116.4 329.2 L1116.3 331.3 L1116.2 333.3 L1116.0 335.4 L1115.9 337.4 L1115.8 339.4 M1128.1 313.5 L1128.0 315.6 L1128.0 317.6 L1127.9 319.7 L1127.9 321.8 L1127.8 323.8 L1127.8 325.9 L1127.7 327.9 L1127.7 330.0 L1127.6 332.1 L1127.5 334.1 L1127.5 336.2 L1127.4 338.2 L1127.4 340.3 L1127.3 342.4 M1138.7 316.2 L1138.7 318.3 L1138.7 320.3 L1138.7 322.4 L1138.8 324.5 L1138.8 326.6 L1138.8 328.7 L1138.8 330.7 L1138.8 332.8 L1138.8 334.9 L1138.8 337.0 L1138.8 339.1 L1138.8 341.1 L1138.8 343.2 L1138.9 345.3 M1149.4 318.8 L1149.4 320.9 L1149.5 323.0 L1149.6 325.1 L1149.7 327.2 L1149.7 329.3 L1149.8 331.4 L1149.9 333.5 L1149.9 335.6 L1150.0 337.7 L1150.1 339.8 L1150.2 341.9 L1150.2 344.0 L1150.3 346.1 L1150.4 348.2 M1160.0 321.5 L1160.1 323.6 L1160.3 325.7 L1160.4 327.8 L1160.5 330.0 L1160.7 332.1 L1160.8 334.2 L1161.0 336.3 L1161.1 338.4 L1161.2 340.6 L1161.4 342.7 L1161.5 344.8 L1161.6 346.9 L1161.8 349.0 L1161.9 351.1 M1170.6 324.2 L1170.8 326.3 L1171.0 328.4 L1171.2 330.6 L1171.4 332.7 L1171.6 334.8 L1171.8 337.0 L1172.0 339.1 L1172.2 341.2 L1172.4 343.4 L1172.6 345.5 L1172.8 347.7 L1173.0 349.8 L1173.2 351.9 L1173.4 354.1 M1181.3 326.8 L1181.6 329.0 L1181.8 331.1 L1182.1 333.3 L1182.3 335.4 L1182.6 337.6 L1182.9 339.7 L1183.1 341.9 L1183.4 344.1 L1183.7 346.2 L1183.9 348.4 L1184.2 350.5 L1184.4 352.7 L1184.7 354.8 L1185.0 357.0 M1191.9 329.5 L1192.3 331.6 L1192.6 333.8 L1192.9 336.0 L1193.2 338.2 L1193.6 340.3 L1193.9 342.5 L1194.2 344.7 L1194.5 346.9 L1194.9 349.0 L1195.2 351.2 L1195.5 353.4 L1195.8 355.6 L1196.2 357.7 L1196.5 359.9 M1202.6 332.1 L1203.0 334.3 L1203.4 336.5 L1203.7 338.7 L1204.1 340.9 L1204.5 343.1 L1204.9 345.3 L1205.3 347.5 L1205.7 349.7 L1206.1 351.9 L1206.5 354.1 L1206.9 356.3 L1207.2 358.4 L1207.6 360.6 L1208.0 362.8 M1213.2 334.8 L1213.7 337.0 L1214.1 339.2 L1214.6 341.4 L1215.0 343.6 L1215.5 345.8 L1215.9 348.1 L1216.4 350.3 L1216.8 352.5 L1217.3 354.7 L1217.7 356.9 L1218.2 359.1 L1218.6 361.3 L1219.1 363.5 L1219.5 365.8 M1223.9 337.4 L1224.4 339.7 L1224.9 341.9 L1225.4 344.1 L1225.9 346.4 L1226.4 348.6 L1227.0 350.8 L1227.5 353.1 L1228.0 355.3 L1228.5 357.5 L1229.0 359.8 L1229.5 362.0 L1230.0 364.2 L1230.6 366.4 L1231.1 368.7 M1234.5 340.1 L1235.1 342.4 L1235.7 344.6 L1236.2 346.9 L1236.8 349.1 L1237.4 351.4 L1238.0 353.6 L1238.5 355.9 L1239.1 358.1 L1239.7 360.4 L1240.3 362.6 L1240.9 364.9 L1241.4 367.1 L1242.0 369.4 L1242.6 371.6 M957.8 271.0 L977.6 275.9 L997.3 280.9 L1017.1 285.8 L1036.9 290.7 L1056.6 295.7 L1076.4 300.6 L1096.2 305.6 L1115.9 310.5 L1135.7 315.4 L1155.4 320.4 L1175.2 325.3 L1195.0 330.2 L1214.7 335.2 L1234.5 340.1 M950.3 283.3 L970.9 288.5 L991.5 293.7 L1012.1 298.8 L1032.7 304.0 L1053.3 309.2 L1073.9 314.4 L1094.5 319.6 L1115.0 324.8 L1135.6 329.9 L1156.2 335.1 L1176.8 340.3 L1197.4 345.5 L1218.0 350.7 L1238.5 355.9 M942.9 295.6 L964.3 301.0 L985.7 306.5 L1007.1 311.9 L1028.5 317.3 L1049.9 322.7 L1071.3 328.2 L1092.8 333.6 L1114.2 339.0 L1135.6 344.5 L1157.0 349.9 L1178.4 355.3 L1199.8 360.7 L1221.2 366.2 L1242.6 371.6" fill="none" stroke="#000" stroke-width="1" stroke-opacity="0.9"/></g><path d="M957.8 271L1233.9 340M942.9 295.6L1242.6 371.6M952.5 415.2L1254.6 491M1254.6 491L1254.5 455L1253 420" fill="none" stroke="#f0f020" stroke-width="1" stroke-opacity="0.9"/><ellipse cx="1174" cy="398" rx="52" ry="48" fill="#d0b028" fill-opacity="0.55"/><path d="M1122 347Q1200 350 1228 418" fill="none" stroke="#f0f020" stroke-width="1" stroke-opacity="0.8"/><polygon points="1120.0,378.0 1128.0,373.5 1142.0,371.5 1157.0,373.5 1172.0,381.0 1184.0,391.0 1192.0,403.0 1197.0,418.0 1196.0,430.0 1138.7,521.6 1042.6,499.2" fill="#ffa500"/><clipPath id="c7"><polygon points="1120.0,378.0 1128.0,373.5 1142.0,371.5 1157.0,373.5 1172.0,381.0 1184.0,391.0 1192.0,403.0 1197.0,418.0 1196.0,430.0 1138.7,521.6 1042.6,499.2"/></clipPath><g clip-path="url(#c7)"><polygon points="1123.9,380.1 1130.0,383.7 1127.4,387.6 1121.2,384.1" fill="#6e8a52"/><polygon points="1119.1,387.2 1125.4,390.7 1122.8,394.6 1116.5,391.2" fill="#6e8a52"/><polygon points="1114.4,394.4 1120.7,397.7 1118.1,401.6 1111.7,398.3" fill="#6e8a52"/><polygon points="1109.6,401.5 1116.1,404.7 1113.5,408.6 1106.9,405.5" fill="#6e8a52"/><polygon points="1104.8,408.6 1111.4,411.7 1108.8,415.6 1102.2,412.6" fill="#6e8a52"/><polygon points="1100.1,415.7 1106.8,418.7 1104.2,422.7 1097.4,419.7" fill="#6e8a52"/><polygon points="1095.3,422.8 1102.1,425.8 1099.5,429.7 1092.6,426.8" fill="#6e8a52"/><polygon points="1090.5,429.9 1097.5,432.8 1094.9,436.7 1087.9,433.9" fill="#6e8a52"/><polygon points="1085.8,437.0 1092.8,439.8 1090.2,443.7 1083.1,441.0" fill="#6e8a52"/><polygon points="1081.0,444.2 1088.2,446.8 1085.6,450.7 1078.3,448.1" fill="#6e8a52"/><polygon points="1076.2,451.3 1083.5,453.8 1080.9,457.7 1073.5,455.2" fill="#6e8a52"/><polygon points="1071.4,458.4 1078.9,460.8 1076.3,464.8 1068.8,462.4" fill="#6e8a52"/><polygon points="1066.7,465.5 1074.2,467.9 1071.6,471.8 1064.0,469.5" fill="#6e8a52"/><polygon points="1061.9,472.6 1069.6,474.9 1067.0,478.8 1059.2,476.6" fill="#4e6a38"/><polygon points="1057.1,479.7 1064.9,481.9 1062.3,485.8 1054.5,483.7" fill="#4e6a38"/><polygon points="1052.4,486.8 1060.3,488.9 1057.7,492.8 1049.7,490.8" fill="#4e6a38"/><polygon points="1047.6,493.9 1055.6,495.9 1053.0,499.8 1044.9,497.9" fill="#4e6a38"/><polygon points="1131.9,384.8 1138.1,388.3 1135.5,392.1 1129.4,388.7" fill="#6e8a52"/><polygon points="1127.3,391.7 1133.6,395.2 1131.0,399.0 1124.8,395.7" fill="#6e8a52"/><polygon points="1122.7,398.7 1129.1,402.1 1126.6,405.9 1120.1,402.6" fill="#6e8a52"/><polygon points="1118.1,405.7 1124.6,409.0 1122.1,412.8 1115.5,409.6" fill="#6e8a52"/><polygon points="1113.5,412.7 1120.1,415.8 1117.6,419.7 1110.9,416.6" fill="#6e8a52"/><polygon points="1108.9,419.7 1115.6,422.7 1113.1,426.6 1106.3,423.6" fill="#6e8a52"/><polygon points="1104.3,426.7 1111.1,429.6 1108.6,433.5 1101.7,430.6" fill="#6e8a52"/><polygon points="1099.7,433.7 1106.6,436.5 1104.1,440.4 1097.1,437.6" fill="#6e8a52"/><polygon points="1095.1,440.7 1102.1,443.4 1099.6,447.3 1092.5,444.6" fill="#6e8a52"/><polygon points="1090.4,447.6 1097.6,450.3 1095.1,454.1 1087.9,451.5" fill="#6e8a52"/><polygon points="1085.8,454.6 1093.1,457.2 1090.6,461.0 1083.2,458.5" fill="#6e8a52"/><polygon points="1081.2,461.6 1088.6,464.1 1086.1,467.9 1078.6,465.5" fill="#6e8a52"/><polygon points="1076.6,468.6 1084.1,471.0 1081.6,474.8 1074.0,472.5" fill="#6e8a52"/><polygon points="1072.0,475.6 1079.7,477.8 1077.1,481.7 1069.4,479.5" fill="#4e6a38"/><polygon points="1067.4,482.6 1075.2,484.7 1072.6,488.6 1064.8,486.5" fill="#4e6a38"/><polygon points="1062.8,489.6 1070.7,491.6 1068.2,495.5 1060.2,493.5" fill="#4e6a38"/><polygon points="1058.2,496.5 1066.2,498.5 1063.7,502.4 1055.6,500.5" fill="#4e6a38"/><polygon points="1140.0,389.4 1146.1,392.9 1143.7,396.7 1137.5,393.2" fill="#6e8a52"/><polygon points="1135.5,396.3 1141.8,399.7 1139.3,403.5 1133.0,400.1" fill="#6e8a52"/><polygon points="1131.1,403.1 1137.4,406.4 1135.0,410.2 1128.6,407.0" fill="#6e8a52"/><polygon points="1126.6,410.0 1133.1,413.2 1130.7,417.0 1124.1,413.8" fill="#6e8a52"/><polygon points="1122.2,416.8 1128.7,420.0 1126.3,423.8 1119.7,420.7" fill="#6e8a52"/><polygon points="1117.7,423.7 1124.4,426.7 1122.0,430.5 1115.2,427.5" fill="#6e8a52"/><polygon points="1113.3,430.5 1120.1,433.5 1117.7,437.3 1110.8,434.4" fill="#6e8a52"/><polygon points="1108.8,437.4 1115.7,440.3 1113.3,444.0 1106.3,441.2" fill="#6e8a52"/><polygon points="1104.3,444.3 1111.4,447.0 1109.0,450.8 1101.9,448.1" fill="#6e8a52"/><polygon points="1099.9,451.1 1107.1,453.8 1104.6,457.6 1097.4,455.0" fill="#6e8a52"/><polygon points="1095.4,458.0 1102.7,460.5 1100.3,464.3 1092.9,461.8" fill="#6e8a52"/><polygon points="1091.0,464.8 1098.4,467.3 1096.0,471.1 1088.5,468.7" fill="#6e8a52"/><polygon points="1086.5,471.7 1094.1,474.1 1091.6,477.8 1084.0,475.5" fill="#6e8a52"/><polygon points="1082.1,478.6 1089.7,480.8 1087.3,484.6 1079.6,482.4" fill="#4e6a38"/><polygon points="1077.6,485.4 1085.4,487.6 1083.0,491.4 1075.1,489.3" fill="#4e6a38"/><polygon points="1073.2,492.3 1081.1,494.3 1078.6,498.1 1070.7,496.1" fill="#4e6a38"/><polygon points="1068.7,499.1 1076.7,501.1 1074.3,504.9 1066.2,503.0" fill="#4e6a38"/><polygon points="1148.0,394.0 1154.1,397.6 1151.8,401.3 1145.6,397.8" fill="#6e8a52"/><polygon points="1143.7,400.8 1149.9,404.2 1147.6,407.9 1141.3,404.5" fill="#6e8a52"/><polygon points="1139.4,407.5 1145.8,410.8 1143.4,414.5 1137.0,411.3" fill="#6e8a52"/><polygon points="1135.1,414.2 1141.6,417.5 1139.3,421.2 1132.7,418.0" fill="#6e8a52"/><polygon points="1130.8,421.0 1137.4,424.1 1135.1,427.8 1128.4,424.7" fill="#6e8a52"/><polygon points="1126.5,427.7 1133.2,430.7 1130.9,434.4 1124.1,431.5" fill="#6e8a52"/><polygon points="1122.2,434.4 1129.1,437.4 1126.7,441.1 1119.8,438.2" fill="#6e8a52"/><polygon points="1117.9,441.1 1124.9,444.0 1122.5,447.7 1115.5,444.9" fill="#6e8a52"/><polygon points="1113.6,447.9 1120.7,450.6 1118.4,454.3 1111.2,451.6" fill="#6e8a52"/><polygon points="1109.3,454.6 1116.5,457.3 1114.2,461.0 1106.9,458.4" fill="#6e8a52"/><polygon points="1105.0,461.3 1112.4,463.9 1110.0,467.6 1102.6,465.1" fill="#6e8a52"/><polygon points="1100.8,468.1 1108.2,470.5 1105.8,474.2 1098.3,471.8" fill="#6e8a52"/><polygon points="1096.5,474.8 1104.0,477.2 1101.7,480.9 1094.0,478.6" fill="#6e8a52"/><polygon points="1092.2,481.5 1099.8,483.8 1097.5,487.5 1089.8,485.3" fill="#4e6a38"/><polygon points="1087.9,488.3 1095.6,490.4 1093.3,494.1 1085.5,492.0" fill="#4e6a38"/><polygon points="1083.6,495.0 1091.5,497.1 1089.1,500.8 1081.2,498.8" fill="#4e6a38"/><polygon points="1079.3,501.7 1087.3,503.7 1084.9,507.4 1076.9,505.5" fill="#4e6a38"/><polygon points="1156.0,398.7 1162.2,402.2 1159.9,405.8 1153.7,402.4" fill="#6e8a52"/><polygon points="1151.9,405.3 1158.1,408.7 1155.9,412.4 1149.6,409.0" fill="#6e8a52"/><polygon points="1147.8,411.9 1154.1,415.2 1151.9,418.9 1145.5,415.6" fill="#6e8a52"/><polygon points="1143.6,418.5 1150.1,421.7 1147.8,425.4 1141.3,422.2" fill="#6e8a52"/><polygon points="1139.5,425.1 1146.1,428.2 1143.8,431.9 1137.2,428.8" fill="#6e8a52"/><polygon points="1135.4,431.7 1142.1,434.7 1139.8,438.4 1133.0,435.4" fill="#6e8a52"/><polygon points="1131.2,438.3 1138.0,441.2 1135.8,444.9 1128.9,442.0" fill="#6e8a52"/><polygon points="1127.1,444.9 1134.0,447.7 1131.8,451.4 1124.8,448.6" fill="#6e8a52"/><polygon points="1122.9,451.5 1130.0,454.2 1127.7,457.9 1120.6,455.2" fill="#6e8a52"/><polygon points="1118.8,458.1 1126.0,460.7 1123.7,464.4 1116.5,461.8" fill="#6e8a52"/><polygon points="1114.7,464.7 1122.0,467.2 1119.7,470.9 1112.3,468.4" fill="#6e8a52"/><polygon points="1110.5,471.3 1117.9,473.8 1115.7,477.4 1108.2,475.0" fill="#6e8a52"/><polygon points="1106.4,477.9 1113.9,480.3 1111.7,483.9 1104.1,481.6" fill="#6e8a52"/><polygon points="1102.2,484.5 1109.9,486.8 1107.7,490.4 1099.9,488.2" fill="#4e6a38"/><polygon points="1098.1,491.1 1105.9,493.3 1103.6,496.9 1095.8,494.8" fill="#4e6a38"/><polygon points="1094.0,497.7 1101.9,499.8 1099.6,503.4 1091.6,501.4" fill="#4e6a38"/><polygon points="1089.8,504.3 1097.8,506.3 1095.6,509.9 1087.5,508.0" fill="#4e6a38"/><polygon points="1164.1,403.3 1170.2,406.8 1168.0,410.4 1161.9,406.9" fill="#3a88a8"/><polygon points="1160.1,409.8 1166.3,413.2 1164.2,416.8 1157.9,413.4" fill="#3a88a8"/><polygon points="1156.1,416.3 1162.5,419.6 1160.3,423.2 1153.9,419.9" fill="#3a88a8"/><polygon points="1152.1,422.7 1158.6,426.0 1156.4,429.5 1149.9,426.4" fill="#3a88a8"/><polygon points="1148.2,429.2 1154.7,432.3 1152.6,435.9 1145.9,432.8" fill="#6e8a52"/><polygon points="1144.2,435.7 1150.9,438.7 1148.7,442.3 1141.9,439.3" fill="#6e8a52"/><polygon points="1140.2,442.2 1147.0,445.1 1144.9,448.7 1138.0,445.8" fill="#6e8a52"/><polygon points="1136.2,448.6 1143.2,451.5 1141.0,455.0 1134.0,452.3" fill="#6e8a52"/><polygon points="1132.2,455.1 1139.3,457.9 1137.1,461.4 1130.0,458.7" fill="#6e8a52"/><polygon points="1128.2,461.6 1135.4,464.2 1133.3,467.8 1126.0,465.2" fill="#6e8a52"/><polygon points="1124.3,468.1 1131.6,470.6 1129.4,474.2 1122.0,471.7" fill="#6e8a52"/><polygon points="1120.3,474.5 1127.7,477.0 1125.5,480.6 1118.1,478.2" fill="#6e8a52"/><polygon points="1116.3,481.0 1123.8,483.4 1121.7,486.9 1114.1,484.6" fill="#6e8a52"/><polygon points="1112.3,487.5 1120.0,489.7 1117.8,493.3 1110.1,491.1" fill="#4e6a38"/><polygon points="1108.3,493.9 1116.1,496.1 1114.0,499.7 1106.1,497.6" fill="#4e6a38"/><polygon points="1104.4,500.4 1112.3,502.5 1110.1,506.1 1102.1,504.0" fill="#4e6a38"/><polygon points="1100.4,506.9 1108.4,508.9 1106.2,512.4 1098.1,510.5" fill="#4e6a38"/><polygon points="1172.1,408.0 1178.2,411.5 1176.2,415.0 1170.0,411.5" fill="#3a88a8"/><polygon points="1168.3,414.3 1174.5,417.7 1172.4,421.2 1166.2,417.9" fill="#3a88a8"/><polygon points="1164.5,420.6 1170.8,424.0 1168.7,427.5 1162.3,424.2" fill="#3a88a8"/><polygon points="1160.6,427.0 1167.1,430.2 1165.0,433.7 1158.5,430.5" fill="#3a88a8"/><polygon points="1156.8,433.3 1163.4,436.5 1161.3,440.0 1154.7,436.9" fill="#6e8a52"/><polygon points="1153.0,439.7 1159.7,442.7 1157.6,446.2 1150.9,443.2" fill="#6e8a52"/><polygon points="1149.2,446.0 1156.0,449.0 1153.9,452.5 1147.0,449.6" fill="#6e8a52"/><polygon points="1145.3,452.4 1152.3,455.2 1150.2,458.7 1143.2,455.9" fill="#6e8a52"/><polygon points="1141.5,458.7 1148.6,461.5 1146.5,465.0 1139.4,462.3" fill="#6e8a52"/><polygon points="1137.7,465.1 1144.9,467.7 1142.8,471.2 1135.6,468.6" fill="#6e8a52"/><polygon points="1133.9,471.4 1141.2,474.0 1139.1,477.5 1131.7,475.0" fill="#6e8a52"/><polygon points="1130.1,477.8 1137.5,480.2 1135.4,483.7 1127.9,481.3" fill="#6e8a52"/><polygon points="1126.2,484.1 1133.8,486.5 1131.7,490.0 1124.1,487.7" fill="#6e8a52"/><polygon points="1122.4,490.4 1130.1,492.7 1128.0,496.2 1120.3,494.0" fill="#4e6a38"/><polygon points="1118.6,496.8 1126.4,499.0 1124.3,502.5 1116.4,500.3" fill="#4e6a38"/><polygon points="1114.8,503.1 1122.7,505.2 1120.6,508.7 1112.6,506.7" fill="#4e6a38"/><polygon points="1110.9,509.5 1119.0,511.5 1116.9,514.9 1108.8,513.0" fill="#4e6a38"/><polygon points="1180.2,412.6 1186.3,416.1 1184.3,419.5 1178.1,416.1" fill="#3a88a8"/><polygon points="1176.5,418.8 1182.7,422.2 1180.7,425.7 1174.4,422.3" fill="#3a88a8"/><polygon points="1172.8,425.0 1179.2,428.4 1177.2,431.8 1170.8,428.5" fill="#3a88a8"/><polygon points="1169.2,431.2 1175.6,434.5 1173.6,437.9 1167.1,434.7" fill="#3a88a8"/><polygon points="1165.5,437.5 1172.1,440.6 1170.1,444.0 1163.4,440.9" fill="#6e8a52"/><polygon points="1161.8,443.7 1168.5,446.7 1166.5,450.1 1159.8,447.2" fill="#6e8a52"/><polygon points="1158.2,449.9 1165.0,452.8 1163.0,456.3 1156.1,453.4" fill="#6e8a52"/><polygon points="1154.5,456.1 1161.4,459.0 1159.4,462.4 1152.4,459.6" fill="#6e8a52"/><polygon points="1150.8,462.3 1157.9,465.1 1155.9,468.5 1148.8,465.8" fill="#6e8a52"/><polygon points="1147.2,468.6 1154.3,471.2 1152.4,474.6 1145.1,472.0" fill="#6e8a52"/><polygon points="1143.5,474.8 1150.8,477.3 1148.8,480.7 1141.4,478.2" fill="#6e8a52"/><polygon points="1139.8,481.0 1147.2,483.4 1145.3,486.9 1137.8,484.5" fill="#6e8a52"/><polygon points="1136.2,487.2 1143.7,489.6 1141.7,493.0 1134.1,490.7" fill="#6e8a52"/><polygon points="1132.5,493.4 1140.1,495.7 1138.2,499.1 1130.4,496.9" fill="#4e6a38"/><polygon points="1128.8,499.6 1136.6,501.8 1134.6,505.2 1126.8,503.1" fill="#4e6a38"/><polygon points="1125.2,505.9 1133.1,507.9 1131.1,511.3 1123.1,509.3" fill="#4e6a38"/><polygon points="1121.5,512.1 1129.5,514.0 1127.5,517.5 1119.4,515.6" fill="#4e6a38"/><polygon points="1188.2,417.2 1194.3,420.8 1192.4,424.1 1186.2,420.6" fill="#3a88a8"/><polygon points="1184.7,423.3 1190.9,426.8 1189.0,430.1 1182.7,426.7" fill="#3a88a8"/><polygon points="1181.2,429.4 1187.5,432.7 1185.6,436.1 1179.2,432.8" fill="#3a88a8"/><polygon points="1177.7,435.5 1184.1,438.7 1182.2,442.1 1175.7,438.9" fill="#3a88a8"/><polygon points="1174.2,441.6 1180.7,444.7 1178.8,448.1 1172.2,445.0" fill="#6e8a52"/><polygon points="1170.6,447.7 1177.3,450.7 1175.4,454.1 1168.7,451.1" fill="#6e8a52"/><polygon points="1167.1,453.8 1174.0,456.7 1172.1,460.1 1165.2,457.2" fill="#6e8a52"/><polygon points="1163.6,459.9 1170.6,462.7 1168.7,466.1 1161.7,463.3" fill="#6e8a52"/><polygon points="1160.1,465.9 1167.2,468.7 1165.3,472.0 1158.1,469.4" fill="#6e8a52"/><polygon points="1156.6,472.0 1163.8,474.7 1161.9,478.0 1154.6,475.4" fill="#6e8a52"/><polygon points="1153.1,478.1 1160.4,480.7 1158.5,484.0 1151.1,481.5" fill="#6e8a52"/><polygon points="1149.6,484.2 1157.0,486.7 1155.1,490.0 1147.6,487.6" fill="#6e8a52"/><polygon points="1146.1,490.3 1153.6,492.7 1151.7,496.0 1144.1,493.7" fill="#6e8a52"/><polygon points="1142.6,496.4 1150.2,498.7 1148.3,502.0 1140.6,499.8" fill="#4e6a38"/><polygon points="1139.1,502.5 1146.8,504.6 1144.9,508.0 1137.1,505.9" fill="#4e6a38"/><polygon points="1135.5,508.6 1143.5,510.6 1141.6,514.0 1133.6,512.0" fill="#4e6a38"/><polygon points="1132.0,514.7 1140.1,516.6 1138.2,520.0 1130.1,518.1" fill="#4e6a38"/><path d="M1150 375L1085 510M1165 380L1100 514" stroke="#000" stroke-width="1" stroke-dasharray="1 2"/></g><polygon points="841.0,452.0 1142.7,524.8 1154.0,551.3 1156.6,639.7 1117.4,665.0 838.4,596.8 828.3,475.6" fill="#9e2aa2"/><polygon points="1142.7,524.8 1154.0,551.3 1156.6,639.7 1117.4,665.0 1130.0,600.0 1138.0,540.0" fill="#a82ab0"/><ellipse cx="1068" cy="566" rx="48" ry="38" fill="#e06038" fill-opacity="0.5" transform="rotate(35 1068 566)"/><clipPath id="c8"><polygon points="841.0,452.0 1142.7,524.8 1154.0,551.3 1156.6,639.7 1117.4,665.0 838.4,596.8 828.3,475.6"/></clipPath><g clip-path="url(#c8)"><path d="M841.0 452.0 L840.1 453.7 L839.2 455.4 L838.3 457.1 L837.4 458.7 L836.5 460.4 L835.6 462.1 L834.6 463.8 L833.7 465.5 L832.8 467.2 L831.9 468.9 L831.0 470.5 L830.1 472.2 L829.2 473.9 L828.3 475.6 M851.1 454.4 L850.2 456.1 L849.4 457.8 L848.5 459.5 L847.7 461.2 L846.8 462.9 L846.0 464.6 L845.1 466.3 L844.3 468.0 L843.4 469.7 L842.6 471.4 L841.7 473.0 L840.9 474.7 L840.0 476.4 L839.2 478.1 M861.1 456.9 L860.3 458.6 L859.5 460.3 L858.7 462.0 L857.9 463.7 L857.1 465.4 L856.4 467.1 L855.6 468.8 L854.8 470.4 L854.0 472.1 L853.2 473.8 L852.4 475.5 L851.6 477.2 L850.8 478.9 L850.0 480.6 M871.2 459.3 L870.4 461.0 L869.7 462.7 L869.0 464.4 L868.2 466.1 L867.5 467.8 L866.8 469.5 L866.0 471.2 L865.3 472.9 L864.5 474.6 L863.8 476.3 L863.1 478.1 L862.3 479.8 L861.6 481.5 L860.9 483.2 M881.2 461.7 L880.5 463.4 L879.9 465.1 L879.2 466.8 L878.5 468.6 L877.8 470.3 L877.2 472.0 L876.5 473.7 L875.8 475.4 L875.1 477.1 L874.4 478.8 L873.8 480.6 L873.1 482.3 L872.4 484.0 L871.7 485.7 M891.3 464.1 L890.7 465.9 L890.0 467.6 L889.4 469.3 L888.8 471.0 L888.2 472.7 L887.6 474.5 L886.9 476.2 L886.3 477.9 L885.7 479.6 L885.1 481.3 L884.4 483.1 L883.8 484.8 L883.2 486.5 L882.6 488.2 M901.3 466.6 L900.8 468.3 L900.2 470.0 L899.6 471.7 L899.1 473.5 L898.5 475.2 L898.0 476.9 L897.4 478.6 L896.8 480.4 L896.3 482.1 L895.7 483.8 L895.1 485.6 L894.6 487.3 L894.0 489.0 L893.4 490.7 M911.4 469.0 L910.9 470.7 L910.4 472.5 L909.9 474.2 L909.4 475.9 L908.9 477.7 L908.4 479.4 L907.8 481.1 L907.3 482.9 L906.8 484.6 L906.3 486.3 L905.8 488.1 L905.3 489.8 L904.8 491.5 L904.3 493.3 M921.5 471.4 L921.0 473.2 L920.6 474.9 L920.1 476.6 L919.7 478.4 L919.2 480.1 L918.8 481.9 L918.3 483.6 L917.9 485.3 L917.4 487.1 L917.0 488.8 L916.5 490.6 L916.1 492.3 L915.6 494.0 L915.2 495.8 M931.5 473.8 L931.1 475.6 L930.7 477.3 L930.3 479.1 L929.9 480.8 L929.5 482.6 L929.2 484.3 L928.8 486.1 L928.4 487.8 L928.0 489.6 L927.6 491.3 L927.2 493.1 L926.8 494.8 L926.4 496.6 L926.0 498.3 M941.6 476.3 L941.2 478.0 L940.9 479.8 L940.6 481.5 L940.2 483.3 L939.9 485.0 L939.6 486.8 L939.2 488.5 L938.9 490.3 L938.5 492.1 L938.2 493.8 L937.9 495.6 L937.5 497.3 L937.2 499.1 L936.9 500.8 M951.6 478.7 L951.3 480.5 L951.1 482.2 L950.8 484.0 L950.5 485.7 L950.2 487.5 L950.0 489.3 L949.7 491.0 L949.4 492.8 L949.1 494.5 L948.8 496.3 L948.6 498.1 L948.3 499.8 L948.0 501.6 L947.7 503.4 M961.7 481.1 L961.5 482.9 L961.2 484.7 L961.0 486.4 L960.8 488.2 L960.6 490.0 L960.4 491.7 L960.1 493.5 L959.9 495.3 L959.7 497.0 L959.5 498.8 L959.2 500.6 L959.0 502.3 L958.8 504.1 L958.6 505.9 M971.7 483.5 L971.6 485.3 L971.4 487.1 L971.2 488.9 L971.1 490.6 L970.9 492.4 L970.8 494.2 L970.6 496.0 L970.4 497.8 L970.3 499.5 L970.1 501.3 L969.9 503.1 L969.8 504.9 L969.6 506.6 L969.4 508.4 M981.8 486.0 L981.7 487.8 L981.6 489.5 L981.5 491.3 L981.4 493.1 L981.3 494.9 L981.2 496.7 L981.0 498.4 L980.9 500.2 L980.8 502.0 L980.7 503.8 L980.6 505.6 L980.5 507.4 L980.4 509.1 L980.3 510.9 M991.9 488.4 L991.8 490.2 L991.8 492.0 L991.7 493.8 L991.6 495.6 L991.6 497.3 L991.5 499.1 L991.5 500.9 L991.5 502.7 L991.4 504.5 L991.4 506.3 L991.3 508.1 L991.2 509.9 L991.2 511.7 L991.1 513.5 M1001.9 490.8 L1001.9 492.6 L1001.9 494.4 L1001.9 496.2 L1001.9 498.0 L1001.9 499.8 L1001.9 501.6 L1002.0 503.4 L1002.0 505.2 L1002.0 507.0 L1002.0 508.8 L1002.0 510.6 L1002.0 512.4 L1002.0 514.2 L1002.0 516.0 M1012.0 493.3 L1012.0 495.1 L1012.1 496.9 L1012.2 498.7 L1012.2 500.5 L1012.3 502.3 L1012.3 504.1 L1012.4 505.9 L1012.5 507.7 L1012.5 509.5 L1012.6 511.3 L1012.7 513.1 L1012.7 514.9 L1012.8 516.7 L1012.9 518.5 M1022.0 495.7 L1022.1 497.5 L1022.3 499.3 L1022.4 501.1 L1022.5 502.9 L1022.6 504.7 L1022.7 506.5 L1022.9 508.3 L1023.0 510.2 L1023.1 512.0 L1023.2 513.8 L1023.4 515.6 L1023.5 517.4 L1023.6 519.2 L1023.7 521.0 M1032.1 498.1 L1032.3 499.9 L1032.4 501.7 L1032.6 503.6 L1032.8 505.4 L1033.0 507.2 L1033.1 509.0 L1033.3 510.8 L1033.5 512.6 L1033.7 514.5 L1033.9 516.3 L1034.0 518.1 L1034.2 519.9 L1034.4 521.7 L1034.6 523.5 M1042.1 500.5 L1042.4 502.4 L1042.6 504.2 L1042.8 506.0 L1043.1 507.8 L1043.3 509.7 L1043.5 511.5 L1043.8 513.3 L1044.0 515.1 L1044.3 516.9 L1044.5 518.8 L1044.7 520.6 L1045.0 522.4 L1045.2 524.2 L1045.4 526.1 M1052.2 503.0 L1052.5 504.8 L1052.8 506.6 L1053.1 508.5 L1053.4 510.3 L1053.7 512.1 L1053.9 513.9 L1054.2 515.8 L1054.5 517.6 L1054.8 519.4 L1055.1 521.3 L1055.4 523.1 L1055.7 524.9 L1056.0 526.8 L1056.3 528.6 M1062.2 505.4 L1062.6 507.2 L1062.9 509.1 L1063.3 510.9 L1063.6 512.7 L1064.0 514.6 L1064.3 516.4 L1064.7 518.2 L1065.0 520.1 L1065.4 521.9 L1065.7 523.8 L1066.1 525.6 L1066.4 527.4 L1066.8 529.3 L1067.1 531.1 M1072.3 507.8 L1072.7 509.7 L1073.1 511.5 L1073.5 513.3 L1073.9 515.2 L1074.3 517.0 L1074.7 518.9 L1075.2 520.7 L1075.6 522.6 L1076.0 524.4 L1076.4 526.3 L1076.8 528.1 L1077.2 529.9 L1077.6 531.8 L1078.0 533.6 M1082.4 510.2 L1082.8 512.1 L1083.3 513.9 L1083.8 515.8 L1084.2 517.6 L1084.7 519.5 L1085.1 521.3 L1085.6 523.2 L1086.1 525.1 L1086.5 526.9 L1087.0 528.8 L1087.5 530.6 L1087.9 532.5 L1088.4 534.3 L1088.9 536.2 M1092.4 512.7 L1092.9 514.5 L1093.5 516.4 L1094.0 518.2 L1094.5 520.1 L1095.0 522.0 L1095.5 523.8 L1096.1 525.7 L1096.6 527.5 L1097.1 529.4 L1097.6 531.2 L1098.2 533.1 L1098.7 535.0 L1099.2 536.8 L1099.7 538.7 M1102.5 515.1 L1103.1 517.0 L1103.6 518.8 L1104.2 520.7 L1104.8 522.6 L1105.4 524.4 L1105.9 526.3 L1106.5 528.1 L1107.1 530.0 L1107.7 531.9 L1108.3 533.7 L1108.8 535.6 L1109.4 537.5 L1110.0 539.3 L1110.6 541.2 M1112.5 517.5 L1113.2 519.4 L1113.8 521.3 L1114.4 523.1 L1115.1 525.0 L1115.7 526.9 L1116.3 528.8 L1117.0 530.6 L1117.6 532.5 L1118.3 534.4 L1118.9 536.2 L1119.5 538.1 L1120.2 540.0 L1120.8 541.9 L1121.4 543.7 M1122.6 519.9 L1123.3 521.8 L1124.0 523.7 L1124.7 525.6 L1125.4 527.5 L1126.1 529.3 L1126.7 531.2 L1127.4 533.1 L1128.1 535.0 L1128.8 536.9 L1129.5 538.7 L1130.2 540.6 L1130.9 542.5 L1131.6 544.4 L1132.3 546.3 M1132.6 522.4 L1133.4 524.3 L1134.1 526.1 L1134.9 528.0 L1135.6 529.9 L1136.4 531.8 L1137.1 533.7 L1137.9 535.6 L1138.6 537.5 L1139.4 539.3 L1140.1 541.2 L1140.9 543.1 L1141.6 545.0 L1142.4 546.9 L1143.1 548.8 M1142.7 524.8 L1143.5 526.7 L1144.3 528.6 L1145.1 530.5 L1145.9 532.4 L1146.7 534.3 L1147.5 536.2 L1148.3 538.0 L1149.2 539.9 L1150.0 541.8 L1150.8 543.7 L1151.6 545.6 L1152.4 547.5 L1153.2 549.4 L1154.0 551.3 M841.0 452.0 L862.5 457.2 L884.1 462.4 L905.6 467.6 L927.2 472.8 L948.8 478.0 L970.3 483.2 L991.9 488.4 L1013.4 493.6 L1035.0 498.8 L1056.5 504.0 L1078.0 509.2 L1099.6 514.4 L1121.2 519.6 L1142.7 524.8 M834.6 463.8 L857.1 469.1 L879.5 474.4 L901.9 479.7 L924.3 485.0 L946.7 490.3 L969.1 495.6 L991.5 500.9 L1013.9 506.2 L1036.3 511.5 L1058.7 516.8 L1081.1 522.1 L1103.5 527.4 L1125.9 532.7 L1148.3 538.0 M828.3 475.6 L851.6 481.0 L874.8 486.4 L898.1 491.8 L921.4 497.2 L944.6 502.6 L967.9 508.0 L991.1 513.5 L1014.4 518.9 L1037.7 524.3 L1060.9 529.7 L1084.2 535.1 L1107.5 540.5 L1130.7 545.9 L1154.0 551.3" fill="none" stroke="#000" stroke-width="1" stroke-opacity="0.9"/><path d="M831.0 476.2 L832.1 485.0 L833.0 493.7 L833.5 502.3 L833.9 510.8 L834.0 519.4 L833.9 527.8 L833.8 536.3 L833.6 544.8 L833.5 553.2 L833.5 561.7 L833.7 570.2 L834.0 578.8 L834.6 587.5 L835.5 596.1 M842.3 478.9 L843.1 487.5 L843.5 496.1 L843.7 504.6 L843.7 513.1 L843.6 521.6 L843.4 530.0 L843.2 538.4 L843.0 546.9 L843.0 555.4 L843.1 563.9 L843.5 572.5 L844.1 581.1 L844.9 589.8 L846.0 598.5 M853.2 481.4 L853.6 490.0 L853.7 498.5 L853.6 506.9 L853.4 515.3 L853.1 523.8 L852.8 532.2 L852.6 540.6 L852.5 549.1 L852.7 557.6 L853.0 566.2 L853.6 574.8 L854.5 583.5 L855.6 592.2 L856.8 601.0 M863.8 483.8 L863.8 492.3 L863.6 500.7 L863.3 509.2 L862.9 517.5 L862.6 525.9 L862.3 534.4 L862.2 542.8 L862.4 551.3 L862.7 559.9 L863.3 568.5 L864.2 577.2 L865.3 585.9 L866.5 594.7 L867.9 603.5 M873.9 486.2 L873.6 494.6 L873.3 503.0 L872.8 511.4 L872.4 519.7 L872.2 528.2 L872.1 536.6 L872.2 545.1 L872.5 553.7 L873.2 562.3 L874.0 570.9 L875.1 579.7 L876.3 588.4 L877.6 597.2 L879.0 606.0 M883.8 488.5 L883.4 496.9 L882.9 505.2 L882.4 513.6 L882.1 522.0 L882.0 530.4 L882.1 538.9 L882.5 547.5 L883.1 556.1 L883.9 564.7 L885.0 573.5 L886.2 582.2 L887.5 591.0 L888.8 599.7 L890.0 608.5 M893.6 490.8 L893.0 499.1 L892.6 507.5 L892.2 515.9 L892.1 524.3 L892.2 532.8 L892.6 541.3 L893.2 549.9 L894.0 558.6 L895.1 567.3 L896.2 576.0 L897.5 584.8 L898.7 593.5 L899.9 602.2 L900.9 610.9 M903.3 493.0 L902.8 501.4 L902.5 509.8 L902.3 518.2 L902.4 526.7 L902.8 535.2 L903.4 543.8 L904.2 552.5 L905.2 561.1 L906.4 569.9 L907.6 578.6 L908.7 587.3 L909.8 596.0 L910.8 604.7 L911.5 613.3 M913.2 495.3 L912.8 503.7 L912.6 512.1 L912.7 520.6 L913.1 529.1 L913.7 537.7 L914.5 546.4 L915.5 555.1 L916.6 563.8 L917.8 572.5 L918.9 581.2 L919.9 589.9 L920.8 598.5 L921.4 607.1 L921.8 615.7 M923.3 497.7 L923.1 506.1 L923.2 514.6 L923.6 523.1 L924.2 531.7 L925.0 540.3 L926.0 549.0 L927.0 557.7 L928.1 566.4 L929.2 575.1 L930.1 583.7 L930.9 592.4 L931.4 600.9 L931.7 609.5 L931.8 617.9 M933.7 500.1 L933.8 508.6 L934.1 517.1 L934.7 525.7 L935.6 534.3 L936.5 543.0 L937.5 551.7 L938.6 560.3 L939.6 569.0 L940.4 577.6 L941.1 586.2 L941.5 594.8 L941.7 603.3 L941.6 611.7 L941.3 620.1 M944.5 502.6 L944.9 511.1 L945.5 519.7 L946.2 528.3 L947.2 537.0 L948.2 545.7 L949.1 554.3 L950.0 563.0 L950.8 571.6 L951.4 580.1 L951.7 588.7 L951.8 597.1 L951.6 605.5 L951.2 613.9 L950.6 622.2 M955.7 505.2 L956.3 513.8 L957.1 522.4 L958.0 531.0 L958.9 539.7 L959.8 548.3 L960.6 557.0 L961.3 565.6 L961.8 574.1 L962.0 582.6 L961.9 591.0 L961.6 599.4 L961.2 607.7 L960.5 616.0 L959.7 624.2 M967.3 507.9 L968.0 516.5 L968.9 525.1 L969.8 533.8 L970.6 542.4 L971.3 551.0 L971.9 559.6 L972.3 568.1 L972.4 576.5 L972.2 584.9 L971.8 593.3 L971.2 601.5 L970.5 609.8 L969.6 618.0 L968.7 626.3 M979.1 510.6 L979.9 519.3 L980.7 527.9 L981.5 536.5 L982.2 545.1 L982.6 553.6 L982.9 562.1 L982.9 570.5 L982.6 578.9 L982.1 587.2 L981.4 595.4 L980.5 603.7 L979.6 611.9 L978.7 620.1 L977.8 628.3 M991.0 513.4 L991.8 522.0 L992.5 530.6 L993.1 539.2 L993.4 547.7 L993.6 556.1 L993.4 564.5 L993.1 572.8 L992.5 581.1 L991.7 589.4 L990.7 597.6 L989.7 605.8 L988.7 613.9 L987.8 622.2 L987.0 630.4 M1003.0 516.2 L1003.6 524.8 L1004.1 533.3 L1004.4 541.8 L1004.4 550.2 L1004.1 558.5 L1003.7 566.9 L1002.9 575.1 L1002.0 583.3 L1001.0 591.5 L999.9 599.7 L998.9 607.8 L997.9 616.0 L997.1 624.3 L996.5 632.5 M1014.9 519.0 L1015.2 527.5 L1015.4 535.9 L1015.3 544.3 L1014.9 552.6 L1014.3 560.9 L1013.5 569.1 L1012.5 577.3 L1011.4 585.5 L1010.3 593.6 L1009.2 601.8 L1008.2 610.0 L1007.3 618.2 L1006.7 626.4 L1006.3 634.8 M1026.5 521.7 L1026.5 530.1 L1026.3 538.4 L1025.8 546.7 L1025.1 555.0 L1024.2 563.2 L1023.1 571.3 L1021.9 579.5 L1020.7 587.6 L1019.6 595.7 L1018.5 603.9 L1017.7 612.1 L1017.0 620.4 L1016.6 628.7 L1016.5 637.1 M1037.8 524.3 L1037.4 532.6 L1036.8 540.9 L1036.0 549.1 L1035.0 557.2 L1033.8 565.4 L1032.6 573.5 L1031.3 581.6 L1030.1 589.7 L1029.0 597.9 L1028.2 606.1 L1027.5 614.4 L1027.1 622.7 L1027.0 631.0 L1027.0 639.5 M1048.7 526.8 L1047.9 535.0 L1047.0 543.2 L1045.9 551.4 L1044.6 559.5 L1043.3 567.6 L1042.0 575.7 L1040.7 583.8 L1039.7 591.9 L1038.8 600.1 L1038.1 608.4 L1037.7 616.7 L1037.6 625.0 L1037.6 633.4 L1037.8 641.9 M1059.2 529.3 L1058.1 537.4 L1056.9 545.5 L1055.5 553.6 L1054.1 561.7 L1052.8 569.7 L1051.5 577.9 L1050.4 586.0 L1049.5 594.2 L1048.8 602.4 L1048.4 610.7 L1048.3 619.1 L1048.3 627.5 L1048.5 635.9 L1048.9 644.4 M1069.3 531.6 L1068.0 539.7 L1066.6 547.8 L1065.1 555.8 L1063.7 563.9 L1062.4 572.0 L1061.3 580.1 L1060.4 588.3 L1059.7 596.5 L1059.3 604.8 L1059.1 613.2 L1059.2 621.6 L1059.4 630.0 L1059.7 638.4 L1060.0 646.9 M1079.2 533.9 L1077.7 541.9 L1076.2 550.0 L1074.7 558.0 L1073.4 566.1 L1072.3 574.2 L1071.3 582.4 L1070.7 590.6 L1070.3 598.9 L1070.1 607.3 L1070.1 615.7 L1070.3 624.1 L1070.6 632.5 L1070.8 641.0 L1071.0 649.4 M1088.9 536.2 L1087.4 544.2 L1085.9 552.2 L1084.5 560.3 L1083.4 568.4 L1082.5 576.6 L1081.8 584.8 L1081.4 593.1 L1081.2 601.4 L1081.2 609.8 L1081.4 618.2 L1081.6 626.7 L1081.8 635.1 L1081.9 643.5 L1081.9 651.9 M1098.7 538.4 L1097.1 546.5 L1095.8 554.5 L1094.6 562.6 L1093.7 570.8 L1093.0 579.0 L1092.6 587.3 L1092.4 595.6 L1092.4 604.0 L1092.5 612.4 L1092.7 620.8 L1092.9 629.2 L1092.9 637.6 L1092.8 646.0 L1092.5 654.3 M1108.5 540.7 L1107.1 548.8 L1106.0 556.9 L1105.1 565.0 L1104.4 573.3 L1104.0 581.5 L1103.8 589.9 L1103.8 598.2 L1103.8 606.6 L1104.0 615.0 L1104.0 623.4 L1104.0 631.8 L1103.8 640.1 L1103.4 648.4 L1102.8 656.6 M1118.6 543.1 L1117.5 551.2 L1116.6 559.3 L1115.9 567.5 L1115.5 575.8 L1115.3 584.1 L1115.2 592.5 L1115.3 600.9 L1115.3 609.3 L1115.3 617.6 L1115.2 626.0 L1114.9 634.3 L1114.4 642.5 L1113.7 650.7 L1112.7 658.8 M1129.1 545.5 L1128.2 553.7 L1127.5 561.9 L1127.1 570.1 L1126.9 578.5 L1126.8 586.8 L1126.8 595.2 L1126.8 603.5 L1126.8 611.9 L1126.6 620.2 L1126.2 628.4 L1125.6 636.7 L1124.7 644.8 L1123.6 652.9 L1122.3 661.0 M1139.9 548.0 L1139.3 556.2 L1138.8 564.5 L1138.6 572.8 L1138.5 581.1 L1138.5 589.5 L1138.4 597.8 L1138.3 606.1 L1138.0 614.4 L1137.5 622.7 L1136.8 630.9 L1135.8 639.0 L1134.6 647.1 L1133.2 655.1 L1131.5 663.1 M1151.1 550.6 L1150.7 558.9 L1150.5 567.2 L1150.3 575.5 L1150.2 583.8 L1150.1 592.2 L1149.9 600.5 L1149.5 608.7 L1148.9 616.9 L1148.1 625.1 L1147.0 633.2 L1145.7 641.2 L1144.1 649.2 L1142.4 657.2 L1140.6 665.1 M828.6 478.6 L851.7 483.5 L874.9 488.2 L898.1 492.7 L921.4 497.2 L944.6 501.7 L967.9 506.3 L991.2 511.0 L1014.5 516.0 L1037.8 521.1 L1061.1 526.5 L1084.4 532.2 L1107.7 538.1 L1130.9 544.2 L1154.1 550.4 M829.4 488.9 L852.4 493.4 L875.5 497.9 L898.5 502.3 L921.6 506.8 L944.7 511.4 L967.9 516.1 L991.0 521.1 L1014.2 526.3 L1037.3 531.8 L1060.5 537.5 L1083.6 543.4 L1106.6 549.5 L1129.7 555.8 L1152.7 562.0 M830.2 498.7 L853.1 503.1 L876.0 507.5 L898.9 512.0 L921.9 516.5 L944.9 521.3 L967.9 526.3 L990.8 531.6 L1013.8 537.1 L1036.8 542.9 L1059.8 548.9 L1082.7 555.0 L1105.6 561.2 L1128.4 567.4 L1151.3 573.5 M831.0 508.5 L853.8 512.8 L876.5 517.2 L899.3 521.9 L922.2 526.7 L945.0 531.7 L967.8 537.1 L990.7 542.7 L1013.5 548.5 L1036.3 554.4 L1059.0 560.6 L1081.8 566.7 L1104.5 572.8 L1127.2 578.9 L1149.9 584.8 M831.9 518.2 L854.5 522.7 L877.1 527.3 L899.8 532.2 L922.4 537.3 L945.1 542.7 L967.8 548.3 L990.5 554.1 L1013.1 560.1 L1035.7 566.2 L1058.3 572.3 L1080.9 578.4 L1103.4 584.3 L1126.0 590.1 L1148.5 595.6 M832.7 528.2 L855.2 532.9 L877.7 537.8 L900.2 543.0 L922.7 548.4 L945.3 554.1 L967.8 559.9 L990.3 565.9 L1012.7 572.0 L1035.2 578.1 L1057.6 584.0 L1080.0 589.9 L1102.4 595.5 L1124.8 600.9 L1147.3 606.0 M833.5 538.6 L855.9 543.5 L878.3 548.8 L900.7 554.3 L923.1 560.0 L945.4 565.9 L967.8 571.9 L990.1 577.9 L1012.4 583.9 L1034.6 589.8 L1056.9 595.5 L1079.2 601.0 L1101.4 606.2 L1123.7 611.2 L1146.0 616.0 M834.5 549.4 L856.7 554.7 L878.9 560.3 L901.2 566.0 L923.4 571.9 L945.6 577.9 L967.7 583.9 L989.9 589.8 L1012.0 595.6 L1034.1 601.1 L1056.2 606.5 L1078.3 611.6 L1100.5 616.4 L1122.7 621.0 L1144.9 625.5 M835.4 560.8 L857.5 566.4 L879.6 572.2 L901.7 578.1 L923.7 584.0 L945.7 589.9 L967.7 595.7 L989.7 601.4 L1011.7 606.9 L1033.6 612.1 L1055.6 617.0 L1077.6 621.7 L1099.6 626.2 L1121.6 630.5 L1143.7 634.7 M836.4 572.7 L858.3 578.5 L880.3 584.3 L902.2 590.2 L924.0 596.1 L945.9 601.8 L967.7 607.3 L989.5 612.6 L1011.3 617.7 L1033.1 622.5 L1055.0 627.1 L1076.8 631.4 L1098.7 635.6 L1120.7 639.7 L1142.6 643.8 M837.4 584.9 L859.2 590.7 L880.9 596.6 L902.7 602.3 L924.3 607.9 L946.0 613.3 L967.7 618.5 L989.3 623.4 L1011.0 628.0 L1032.7 632.5 L1054.4 636.7 L1076.1 640.8 L1097.9 644.8 L1119.7 648.9 L1141.5 653.0 M838.4 597.2 L860.0 603.0 L881.6 608.6 L903.1 614.1 L924.7 619.4 L946.2 624.4 L967.7 629.1 L989.2 633.6 L1010.7 637.9 L1032.2 642.0 L1053.8 646.0 L1075.4 650.0 L1097.0 654.0 L1118.7 658.1 L1140.3 662.4" fill="none" stroke="#000" stroke-width="1" stroke-opacity="0.9"/><path d="M839.9 470.0 L841.2 479.6 L841.9 489.1 L841.8 498.5 L840.9 507.6 L839.5 516.6 L837.6 525.5 L835.3 534.3 L833.0 543.1 L830.7 552.0 L828.8 560.9 L827.4 570.0 L826.6 579.2 L826.5 588.6 L827.2 598.1 M854.4 473.6 L854.9 483.0 L854.6 492.3 L853.6 501.3 L852.0 510.3 L850.0 519.1 L847.7 527.9 L845.3 536.6 L843.1 545.5 L841.3 554.4 L840.0 563.4 L839.3 572.6 L839.4 582.0 L840.2 591.6 L841.7 601.2 M867.9 477.0 L867.4 486.1 L866.3 495.1 L864.5 504.0 L862.4 512.8 L860.0 521.5 L857.7 530.2 L855.5 539.0 L853.8 547.9 L852.6 557.0 L852.1 566.2 L852.3 575.6 L853.3 585.1 L854.9 594.8 L857.1 604.6 M880.3 480.1 L879.0 489.0 L877.1 497.8 L874.9 506.5 L872.5 515.2 L870.1 523.9 L868.0 532.7 L866.3 541.5 L865.3 550.6 L864.9 559.8 L865.3 569.2 L866.4 578.7 L868.2 588.4 L870.5 598.2 L873.1 608.0 M891.6 482.9 L889.7 491.6 L887.3 500.3 L884.9 508.9 L882.6 517.6 L880.5 526.4 L879.0 535.2 L878.0 544.3 L877.8 553.5 L878.3 562.9 L879.6 572.4 L881.5 582.1 L883.9 591.9 L886.6 601.7 L889.4 611.6 M902.2 485.6 L899.8 494.2 L897.4 502.8 L895.1 511.4 L893.1 520.1 L891.7 529.0 L890.9 538.1 L890.8 547.3 L891.5 556.6 L892.9 566.2 L894.9 575.9 L897.3 585.6 L900.1 595.5 L902.9 605.3 L905.5 615.1 M912.4 488.1 L909.9 496.7 L907.7 505.3 L905.8 514.0 L904.4 522.9 L903.8 531.9 L903.9 541.1 L904.7 550.5 L906.2 560.0 L908.3 569.7 L910.8 579.5 L913.6 589.3 L916.4 599.1 L919.0 608.8 L921.2 618.4 M922.5 490.6 L920.3 499.2 L918.5 507.9 L917.3 516.8 L916.8 525.8 L917.0 535.0 L918.0 544.4 L919.6 554.0 L921.8 563.7 L924.4 573.4 L927.2 583.2 L929.9 592.9 L932.4 602.6 L934.5 612.2 L936.0 621.7 M933.0 493.2 L931.3 501.9 L930.2 510.8 L929.8 519.8 L930.2 529.1 L931.3 538.5 L933.1 548.0 L935.4 557.7 L938.0 567.4 L940.8 577.1 L943.5 586.9 L945.9 596.5 L947.8 606.0 L949.2 615.4 L949.8 624.6 M944.1 496.0 L943.2 504.9 L942.9 513.9 L943.5 523.2 L944.7 532.6 L946.6 542.1 L949.0 551.8 L951.6 561.5 L954.4 571.2 L957.0 580.9 L959.3 590.5 L961.2 599.9 L962.3 609.2 L962.8 618.4 L962.5 627.4 M956.2 499.1 L956.1 508.1 L956.8 517.3 L958.2 526.7 L960.2 536.3 L962.6 545.9 L965.3 555.6 L968.1 565.3 L970.6 574.9 L972.8 584.5 L974.5 593.9 L975.5 603.1 L975.8 612.2 L975.3 621.1 L974.1 629.9 M969.4 502.4 L970.3 511.6 L971.8 521.0 L973.9 530.5 L976.4 540.2 L979.1 549.8 L981.8 559.5 L984.3 569.1 L986.3 578.6 L987.8 587.9 L988.7 597.1 L988.8 606.1 L988.1 614.9 L986.8 623.7 L984.9 632.2 M983.8 505.9 L985.4 515.3 L987.6 524.9 L990.1 534.5 L992.8 544.1 L995.5 553.7 L997.9 563.3 L999.8 572.7 L1001.2 582.0 L1001.8 591.1 L1001.7 600.0 L1000.9 608.8 L999.4 617.5 L997.4 626.0 L995.0 634.4 M999.1 509.8 L1001.4 519.3 L1003.9 528.9 L1006.6 538.5 L1009.2 548.1 L1011.5 557.6 L1013.3 566.9 L1014.5 576.1 L1015.0 585.2 L1014.7 594.0 L1013.7 602.7 L1012.1 611.3 L1009.9 619.8 L1007.5 628.2 L1004.9 636.6 M1015.2 513.8 L1017.8 523.4 L1020.5 533.0 L1023.0 542.5 L1025.2 551.9 L1026.9 561.2 L1027.9 570.4 L1028.2 579.3 L1027.7 588.1 L1026.5 596.7 L1024.7 605.2 L1022.5 613.6 L1020.0 622.0 L1017.4 630.4 L1015.0 638.8 M1031.7 517.9 L1034.3 527.5 L1036.8 537.0 L1038.9 546.3 L1040.4 555.6 L1041.2 564.6 L1041.3 573.5 L1040.7 582.2 L1039.3 590.8 L1037.4 599.2 L1035.1 607.6 L1032.5 615.9 L1029.9 624.2 L1027.5 632.6 L1025.5 641.0 M1048.2 522.1 L1050.6 531.5 L1052.6 540.8 L1053.9 550.0 L1054.6 559.0 L1054.5 567.8 L1053.6 576.4 L1052.1 584.9 L1050.1 593.3 L1047.6 601.6 L1045.0 609.8 L1042.5 618.1 L1040.1 626.5 L1038.2 634.9 L1036.9 643.5 M1064.4 526.1 L1066.2 535.4 L1067.4 544.5 L1067.9 553.4 L1067.6 562.1 L1066.6 570.7 L1064.9 579.1 L1062.8 587.4 L1060.3 595.6 L1057.6 603.9 L1055.1 612.1 L1052.8 620.4 L1051.0 628.9 L1049.8 637.4 L1049.3 646.2 M1079.9 530.0 L1081.0 539.0 L1081.2 547.9 L1080.8 556.5 L1079.6 565.0 L1077.8 573.3 L1075.5 581.6 L1072.9 589.8 L1070.2 597.9 L1067.7 606.2 L1065.5 614.5 L1063.8 622.9 L1062.7 631.5 L1062.4 640.2 L1062.8 649.1 M1094.5 533.6 L1094.6 542.4 L1093.9 551.0 L1092.6 559.4 L1090.6 567.7 L1088.2 575.8 L1085.6 584.0 L1082.9 592.1 L1080.4 600.3 L1078.3 608.6 L1076.7 617.0 L1075.7 625.6 L1075.5 634.3 L1076.1 643.2 L1077.3 652.3 M1107.9 537.0 L1107.1 545.5 L1105.5 553.8 L1103.5 562.0 L1101.0 570.1 L1098.3 578.2 L1095.6 586.3 L1093.1 594.5 L1091.1 602.8 L1089.6 611.2 L1088.8 619.7 L1088.8 628.5 L1089.5 637.4 L1090.8 646.4 L1092.8 655.6 M1120.2 540.1 L1118.5 548.3 L1116.3 556.5 L1113.7 564.5 L1111.0 572.6 L1108.3 580.6 L1105.9 588.8 L1104.0 597.0 L1102.6 605.4 L1102.0 614.0 L1102.1 622.7 L1102.9 631.7 L1104.4 640.7 L1106.4 649.9 L1108.8 659.1 M1131.5 542.9 L1129.2 551.0 L1126.5 559.0 L1123.8 567.0 L1121.1 575.0 L1118.8 583.1 L1117.0 591.4 L1115.7 599.8 L1115.2 608.3 L1115.5 617.1 L1116.5 626.0 L1118.1 635.0 L1120.2 644.2 L1122.6 653.4 L1125.1 662.6 M1142.1 545.5 L1139.4 553.5 L1136.6 561.4 L1134.0 569.4 L1131.7 577.5 L1130.0 585.8 L1128.9 594.2 L1128.6 602.8 L1129.0 611.5 L1130.1 620.4 L1131.8 629.5 L1133.9 638.6 L1136.4 647.8 L1138.8 657.0 L1141.2 666.1 M1152.2 548.1 L1149.5 556.0 L1146.9 564.0 L1144.7 572.0 L1143.1 580.3 L1142.1 588.7 L1141.9 597.3 L1142.5 606.0 L1143.7 614.9 L1145.5 624.0 L1147.8 633.1 L1150.2 642.2 L1152.7 651.4 L1154.9 660.5 L1156.8 669.5 M832.3 476.4 L855.0 480.6 L877.8 484.4 L900.6 487.7 L923.4 490.8 L946.2 494.0 L969.1 497.5 L991.9 501.3 L1014.8 505.7 L1037.7 510.8 L1060.6 516.6 L1083.5 523.1 L1106.3 530.1 L1129.2 537.7 L1152.0 545.7 M832.6 487.4 L855.3 490.9 L878.1 494.0 L900.8 497.0 L923.6 500.2 L946.4 503.7 L969.2 507.6 L992.0 512.2 L1014.9 517.5 L1037.7 523.4 L1060.6 530.1 L1083.4 537.3 L1106.2 545.0 L1129.0 552.9 L1151.8 561.0 M832.9 497.5 L855.6 500.5 L878.3 503.4 L901.0 506.6 L923.8 510.1 L946.5 514.2 L969.3 519.0 L992.1 524.4 L1014.9 530.6 L1037.7 537.4 L1060.5 544.8 L1083.3 552.5 L1106.1 560.4 L1128.8 568.4 L1151.5 576.2 M833.2 507.1 L855.8 510.0 L878.5 513.1 L901.2 516.8 L924.0 521.0 L946.7 526.0 L969.5 531.6 L992.2 538.0 L1015.0 545.0 L1037.8 552.5 L1060.5 560.2 L1083.2 568.1 L1105.9 576.0 L1128.6 583.5 L1151.3 590.7 M833.5 516.7 L856.1 520.0 L878.8 523.7 L901.5 528.1 L924.2 533.3 L946.9 539.2 L969.6 545.7 L992.4 552.8 L1015.1 560.4 L1037.8 568.2 L1060.5 576.0 L1083.1 583.7 L1105.8 591.0 L1128.4 597.9 L1151.1 604.1 M833.8 527.0 L856.4 530.9 L879.1 535.5 L901.7 540.9 L924.4 547.0 L947.1 553.7 L969.8 560.9 L992.5 568.5 L1015.1 576.3 L1037.8 584.0 L1060.4 591.5 L1083.0 598.6 L1105.6 605.2 L1128.2 611.1 L1150.9 616.3 M834.1 538.4 L856.8 543.2 L879.4 548.8 L902.0 555.1 L924.7 561.9 L947.3 569.3 L970.0 576.9 L992.6 584.6 L1015.2 592.2 L1037.8 599.5 L1060.4 606.3 L1083.0 612.6 L1105.5 618.1 L1128.1 623.0 L1150.7 627.2 M834.5 551.2 L857.1 557.0 L879.7 563.4 L902.4 570.4 L925.0 577.9 L947.6 585.5 L970.2 593.1 L992.7 600.6 L1015.3 607.6 L1037.8 614.1 L1060.4 620.0 L1082.9 625.2 L1105.4 629.7 L1128.0 633.6 L1150.5 636.9 M835.0 565.4 L857.5 572.1 L880.1 579.2 L902.7 586.7 L925.3 594.3 L947.8 601.8 L970.3 609.0 L992.9 615.8 L1015.4 622.0 L1037.8 627.5 L1060.3 632.3 L1082.8 636.5 L1105.3 640.0 L1127.8 643.1 L1150.4 645.9 M835.4 581.0 L858.0 588.2 L880.5 595.7 L903.0 603.2 L925.6 610.6 L948.0 617.6 L970.5 624.1 L993.0 629.9 L1015.4 635.1 L1037.9 639.6 L1060.3 643.3 L1082.8 646.6 L1105.2 649.4 L1127.7 652.0 L1150.2 654.5 M835.9 597.4 L858.4 604.9 L880.9 612.3 L903.4 619.5 L925.8 626.2 L948.3 632.4 L970.7 637.9 L993.1 642.7 L1015.5 646.8 L1037.9 650.3 L1060.3 653.2 L1082.7 655.8 L1105.1 658.3 L1127.6 660.7 L1150.1 663.4" fill="none" stroke="#000" stroke-width="0.9" stroke-opacity="0.4"/></g><path d="M841 452L1142.7 524.8M828.3 475.6L1154 551.3M838.4 596.8L1117.4 665M828.3 475.6L841 452M1142.7 524.8L1154 551.3L1156.6 639.7L1117.4 665" fill="none" stroke="#ff30ff" stroke-width="1"/><ellipse cx="1043.5" cy="585.3" rx="51.4" ry="31" fill="#f8a010" transform="rotate(35.5 1043.5 585.3)"/><ellipse cx="1041" cy="583.5" rx="48.5" ry="28.3" fill="#857d28" transform="rotate(35.5 1041 583.5)"/><clipPath id="holec"><ellipse cx="1041" cy="583.5" rx="48.5" ry="28.3" transform="rotate(35.5 1041 583.5)"/></clipPath><g clip-path="url(#holec)"><path d="M1002.8 545.8 L1002.9 550.5 L1002.6 555.2 L1002.1 559.8 L1001.4 564.3 L1000.4 568.8 L999.2 573.2 L998.0 577.6 L996.7 582.0 L995.4 586.4 L994.3 590.9 L993.4 595.4 L992.6 600.0 L992.2 604.6 L991.9 609.3 M1014.5 549.0 L1014.2 553.6 L1013.6 558.2 L1012.7 562.6 L1011.6 567.1 L1010.4 571.4 L1009.1 575.8 L1007.8 580.1 L1006.5 584.5 L1005.3 588.9 L1004.4 593.4 L1003.7 597.9 L1003.2 602.5 L1003.0 607.2 L1003.1 611.9 M1025.8 552.2 L1025.1 556.6 L1024.2 561.1 L1023.0 565.4 L1021.7 569.7 L1020.3 574.0 L1018.9 578.3 L1017.6 582.7 L1016.5 587.1 L1015.5 591.5 L1014.8 596.0 L1014.4 600.6 L1014.2 605.2 L1014.3 609.9 L1014.5 614.6 M1036.7 555.2 L1035.7 559.6 L1034.4 563.8 L1033.1 568.1 L1031.6 572.4 L1030.2 576.6 L1028.9 580.9 L1027.7 585.3 L1026.8 589.7 L1026.1 594.1 L1025.7 598.7 L1025.5 603.3 L1025.5 607.9 L1025.8 612.6 L1026.1 617.3 M1047.3 558.1 L1045.9 562.4 L1044.5 566.6 L1043.0 570.8 L1041.6 575.0 L1040.2 579.3 L1039.1 583.6 L1038.1 587.9 L1037.4 592.4 L1037.0 596.9 L1036.9 601.5 L1036.9 606.1 L1037.2 610.7 L1037.5 615.4 L1037.9 620.1 M1057.5 561.0 L1056.0 565.1 L1054.5 569.3 L1053.0 573.5 L1051.7 577.7 L1050.5 582.0 L1049.6 586.3 L1048.9 590.7 L1048.5 595.2 L1048.4 599.7 L1048.4 604.3 L1048.6 608.9 L1049.0 613.6 L1049.3 618.2 L1049.6 622.8 M1067.6 563.8 L1066.1 567.9 L1064.6 572.0 L1063.2 576.2 L1062.0 580.5 L1061.1 584.8 L1060.5 589.1 L1060.1 593.6 L1059.9 598.1 L1060.0 602.7 L1060.2 607.2 L1060.5 611.8 L1060.8 616.4 L1061.0 621.0 L1061.1 625.5 M1077.7 566.6 L1076.2 570.7 L1074.8 574.8 L1073.7 579.0 L1072.8 583.3 L1072.1 587.7 L1071.8 592.1 L1071.6 596.6 L1071.7 601.1 L1071.9 605.6 L1072.1 610.2 L1072.4 614.7 L1072.5 619.3 L1072.5 623.8 L1072.3 628.2 M1087.9 569.4 L1086.6 573.5 L1085.4 577.7 L1084.5 582.0 L1083.9 586.3 L1083.6 590.7 L1083.4 595.1 L1083.5 599.6 L1083.6 604.1 L1083.9 608.6 L1084.0 613.2 L1084.1 617.6 L1084.0 622.1 L1083.7 626.4 L1083.2 630.7 M999.8 547.5 L1006.3 548.9 L1012.7 550.1 L1019.2 551.1 L1025.7 552.1 L1032.2 553.2 L1038.7 554.3 L1045.2 555.5 L1051.7 556.9 L1058.2 558.4 L1064.6 560.3 L1071.1 562.3 L1077.4 564.5 L1083.8 566.8 L1090.1 569.3 M999.1 556.2 L1005.6 557.2 L1012.0 558.2 L1018.4 559.2 L1024.9 560.2 L1031.4 561.2 L1037.8 562.5 L1044.2 563.9 L1050.6 565.5 L1057.0 567.3 L1063.4 569.4 L1069.7 571.6 L1076.0 574.0 L1082.3 576.4 L1088.5 578.9 M998.5 564.5 L1004.9 565.4 L1011.3 566.3 L1017.7 567.3 L1024.1 568.3 L1030.5 569.6 L1036.8 571.0 L1043.2 572.7 L1049.5 574.6 L1055.8 576.6 L1062.1 578.9 L1068.3 581.2 L1074.5 583.6 L1080.7 586.1 L1086.9 588.4 M997.9 572.7 L1004.2 573.6 L1010.6 574.5 L1016.9 575.6 L1023.2 576.8 L1029.5 578.3 L1035.8 580.0 L1042.1 581.9 L1048.3 584.0 L1054.5 586.3 L1060.7 588.6 L1066.9 591.0 L1073.0 593.3 L1079.2 595.6 L1085.4 597.8 M997.2 580.9 L1003.5 581.8 L1009.8 582.9 L1016.1 584.2 L1022.3 585.7 L1028.5 587.5 L1034.7 589.4 L1040.9 591.5 L1047.1 593.8 L1053.2 596.1 L1059.3 598.4 L1065.4 600.7 L1071.6 602.9 L1077.7 604.9 L1083.9 606.8 M996.6 589.3 L1002.8 590.4 L1009.0 591.8 L1015.2 593.3 L1021.4 595.1 L1027.5 597.0 L1033.6 599.2 L1039.7 601.4 L1045.8 603.7 L1051.9 606.0 L1058.0 608.2 L1064.0 610.2 L1070.1 612.2 L1076.3 613.9 L1082.4 615.4 M995.9 598.1 L1002.1 599.4 L1008.2 601.0 L1014.3 602.8 L1020.4 604.8 L1026.5 606.9 L1032.5 609.1 L1038.5 611.4 L1044.6 613.6 L1050.6 615.7 L1056.6 617.7 L1062.7 619.5 L1068.8 621.1 L1074.9 622.4 L1081.1 623.6 M995.2 607.2 L1001.3 608.8 L1007.3 610.7 L1013.4 612.7 L1019.4 614.8 L1025.4 617.0 L1031.4 619.2 L1037.3 621.3 L1043.3 623.3 L1049.3 625.2 L1055.4 626.9 L1061.4 628.3 L1067.5 629.6 L1073.6 630.6 L1079.7 631.5" fill="none" stroke="#000" stroke-width="1" stroke-opacity="0.9"/></g></svg></div>
<div style="position:absolute;left:341px;top:790px;width:1190px;height:240px;background:#efefef"></div>
<div class="t" style="left:345.7px;top:798.30px;font-size:15px;color:#000;font-family:'Liberation Sans',sans-serif;">Command Line</div>
<svg style="position:absolute;left:1504px;top:799.5px" width="27" height="12" viewBox="0 0 27 12"><rect x="0.5" y="0.5" width="11" height="11" rx="2" fill="none" stroke="#777"/><rect x="2.8" y="4.8" width="4.6" height="4.6" rx="1" fill="none" stroke="#606060" stroke-width="1.1"/><path d="M4.8 4.6V3.2Q4.8 2.6 5.4 2.6H8.6Q9.2 2.6 9.2 3.2V6.4Q9.2 7 8.6 7H7.6" fill="none" stroke="#606060" stroke-width="1.1"/><rect x="14.5" y="0.5" width="11" height="11" rx="2" fill="none" stroke="#777"/><path d="M17.3 3.3l5.4 5.4M22.7 3.3l-5.4 5.4" stroke="#505050" stroke-width="2"/></svg>
<div style="position:absolute;left:343px;top:817px;width:1185px;height:175px;background:#fff;border:1px solid #b5b5b5;box-sizing:border-box"></div>
<div style="position:absolute;left:344.5px;top:818.5px;width:1183px;height:172px;border:1px solid #cfcfcf;box-sizing:border-box"></div>
<div class="t" style="left:350.6px;top:824.10px;font-size:10.83px;color:#111;font-family:'Liberation Mono',monospace;">Cubit&gt;#contact pair</div>
<div class="t" style="left:350.6px;top:839.10px;font-size:10.83px;color:#111;font-family:'Liberation Mono',monospace;">Cubit&gt;ccx create contactpair surfaceinteraction 1 surfacetosurface master 1 slave 2</div>
<div class="t" style="left:350.6px;top:854.10px;font-size:10.83px;color:#111;font-family:'Liberation Mono',monospace;">Journaled Command: ccx create contactpair surfaceinteraction 1 surfacetosurface master 1 slave 2</div>
<div class="t" style="left:350.6px;top:884.10px;font-size:10.83px;color:#111;font-family:'Liberation Mono',monospace;">Cubit&gt;</div>
<div class="t" style="left:350.6px;top:899.10px;font-size:10.83px;color:#111;font-family:'Liberation Mono',monospace;">Geometry visibility OFF.</div>
<div class="t" style="left:350.6px;top:929.10px;font-size:10.83px;color:#111;font-family:'Liberation Mono',monospace;">Geometry visibility ON.</div>
<div class="t" style="left:350.6px;top:959.10px;font-size:10.83px;color:#111;font-family:'Liberation Mono',monospace;">Cubit&gt;</div>
<div style="position:absolute;left:1512px;top:819px;width:15px;height:171px;background:#e3e3e3;border-left:1px solid #c4c4c4;box-sizing:border-box"></div>
<div style="position:absolute;left:1513px;top:819px;width:14px;height:14px;background:#f6f6f6;border-bottom:1px solid #c8c8c8;box-sizing:border-box"></div>
<div style="position:absolute;left:1513px;top:948px;width:14px;height:28px;background:linear-gradient(90deg,#fdfdfd,#ececec);border-top:1px solid #c4c4c4;box-sizing:border-box"></div>
<div style="position:absolute;left:1513px;top:976px;width:14px;height:14px;background:#f6f6f6;border-top:1px solid #c8c8c8;box-sizing:border-box"></div>
<svg style="position:absolute;left:1513px;top:819px" width="14" height="14" viewBox="0 0 14 14"><path d="M3 9L7 5L11 9z" fill="#555"/></svg>
<svg style="position:absolute;left:1513px;top:976px" width="14" height="14" viewBox="0 0 14 14"><path d="M3 5L7 9L11 5z" fill="#555"/></svg>
<div style="position:absolute;left:343.4px;top:993.3px;width:27px;height:23.5px;background:#dcdcdc;border:1px solid #c0c0c0;border-radius:3px;box-sizing:border-box"></div>
<div style="position:absolute;left:377.5px;top:993.3px;width:27px;height:23.5px;background:linear-gradient(#fafafa,#efefef);border:1px solid #c6c6c6;border-radius:3px;box-sizing:border-box"></div>
<svg style="position:absolute;left:343px;top:993px" width="28" height="24" viewBox="0 0 28 24"><circle cx="14" cy="12" r="8" fill="#e8405c"/><path d="M17 8.5l-5 3 5 3M11 8.5l5 3-5 3" fill="none" stroke="#fff" stroke-width="1"/></svg>
<svg style="position:absolute;left:377px;top:993px" width="28" height="24" viewBox="0 0 28 24"><path d="M14 5c-3 0-4 1-4 3v2h4v1H8c-2 0-3 1-3 4s1 4 3 4h1v-2c0-2 1-3 3-3h4c1.5 0 2.5-1 2.5-2.5V8c0-2-1.5-3-4.5-3z" fill="#3a74b0"/><path d="M14 21c3 0 4-1 4-3v-2h-4v-1h6c2 0 3-1 3-4s-1-4-3-4h-1v2c0 2-1 3-3 3h-4c-1.5 0-2.5 1-2.5 2.5V18c0 2 1.5 3 4.5 3z" fill="#f5cf3a"/></svg>
<svg style="position:absolute;left:400px;top:985px" width="240" height="40" viewBox="0 0 240 40"><path d="M5.6 6L16 33.8Q17 34 19 34L86.4 34Q88.5 34 89 32L97 6z" fill="#fff" stroke="#222" stroke-width="1"/><path d="M98.9 6L109 33Q110 33.5 112 33.5L146.4 33.5Q148 33.5 149 31.5L155.8 6" fill="#efefef" stroke="#222" stroke-width="1"/><path d="M157 6L167.7 33Q169 33.5 171 33.5L222 33.5Q223.5 33.5 224 31.5L231 6" fill="#efefef" stroke="#222" stroke-width="1"/></svg>
<div style="position:absolute;left:343px;top:991px;width:1186px;height:1px;background:#b5b5b5"></div>
<div class="t" style="left:417.5px;top:998.00px;font-size:15px;color:#000;font-family:'Liberation Sans',sans-serif;">Command</div>
<div class="t" style="left:510.8px;top:996.70px;font-size:15px;color:#000;font-family:'Liberation Sans',sans-serif;">Error</div>
<div class="t" style="left:570px;top:996.70px;font-size:15px;color:#000;font-family:'Liberation Sans',sans-serif;">History</div>
<div style="position:absolute;left:1531px;top:95px;width:386px;height:935px;background:#efefef"></div>
<div class="t" style="left:1541.6px;top:97.00px;font-size:15px;color:#000;font-family:'Liberation Sans',sans-serif;">Command Panel</div>
<svg style="position:absolute;left:1890px;top:99.3px" width="27" height="12" viewBox="0 0 27 12"><rect x="0.5" y="0.5" width="11" height="11" rx="2" fill="none" stroke="#777"/><rect x="2.8" y="4.8" width="4.6" height="4.6" rx="1" fill="none" stroke="#606060" stroke-width="1.1"/><path d="M4.8 4.6V3.2Q4.8 2.6 5.4 2.6H8.6Q9.2 2.6 9.2 3.2V6.4Q9.2 7 8.6 7H7.6" fill="none" stroke="#606060" stroke-width="1.1"/><rect x="14.5" y="0.5" width="11" height="11" rx="2" fill="none" stroke="#777"/><path d="M17.3 3.3l5.4 5.4M22.7 3.3l-5.4 5.4" stroke="#505050" stroke-width="2"/></svg>
<div class="t" style="left:1579.5px;top:121.10px;font-size:15px;color:#000;font-family:'Liberation Sans',sans-serif;">Mode</div>
<div style="position:absolute;left:1580.5px;top:140.3px;width:294px;height:54px;background:#e9e9e9;border:1px solid #d8d8d8;border-radius:2px;box-sizing:border-box"></div>
<div style="position:absolute;left:1587px;top:147px;width:39.5px;height:39.5px;background:linear-gradient(#fdfdfd,#ececec);border:1px solid #c4c4c4;border-radius:3px;box-sizing:border-box"></div>
<div style="position:absolute;left:1627px;top:147px;width:39.5px;height:39.5px;background:linear-gradient(#fdfdfd,#ececec);border:1px solid #c4c4c4;border-radius:3px;box-sizing:border-box"></div>
<div style="position:absolute;left:1667px;top:147px;width:39.5px;height:39.5px;background:linear-gradient(#fdfdfd,#ececec);border:1px solid #c4c4c4;border-radius:3px;box-sizing:border-box"></div>
<div style="position:absolute;left:1707px;top:147px;width:39.5px;height:39.5px;background:linear-gradient(#fdfdfd,#ececec);border:1px solid #c4c4c4;border-radius:3px;box-sizing:border-box"></div>
<div style="position:absolute;left:1747px;top:147px;width:39.5px;height:39.5px;background:linear-gradient(#fdfdfd,#ececec);border:1px solid #c4c4c4;border-radius:3px;box-sizing:border-box"></div>
<div style="position:absolute;left:1787px;top:147px;width:39.5px;height:39.5px;background:linear-gradient(#fdfdfd,#ececec);border:1px solid #c4c4c4;border-radius:3px;box-sizing:border-box"></div>
<div style="position:absolute;left:1827px;top:147px;width:39.5px;height:39.5px;background:linear-gradient(#fdfdfd,#ececec);border:1px solid #c4c4c4;border-radius:3px;box-sizing:border-box"></div>
<div style="position:absolute;left:1531px;top:994px;width:386px;height:1px;background:#cfcfcf"></div>
<div style="position:absolute;left:1537.4px;top:994px;width:135px;height:26.5px;background:#f7f7f7;border:1px solid #c2c2c2;border-top:none;border-radius:0 0 3px 3px;box-sizing:border-box"></div>
<div style="position:absolute;left:1672.6px;top:995px;width:106px;height:23px;background:#dcdcdc;border:1px solid #c2c2c2;border-top:none;border-radius:0 0 3px 3px;box-sizing:border-box"></div>
<div class="t" style="left:1549.7px;top:999.60px;font-size:15px;color:#000;font-family:'Liberation Sans',sans-serif;">Command Panel</div>
<div class="t" style="left:1684px;top:999.30px;font-size:15px;color:#000;font-family:'Liberation Sans',sans-serif;">Power Tools</div>
<div style="position:absolute;left:1101px;top:1025px;width:791px;height:10px;background:#fff;border:1px solid #a8a8a8;border-radius:3px;box-sizing:border-box"></div>
<div style="position:absolute;left:1893px;top:1026px;width:23px;height:10px;background:#fafafa;border:1px solid #b0b0b0;border-radius:3px;box-sizing:border-box"></div>
<div style="position:absolute;left:258px;top:550px;width:77px;height:1px;background:#d0d0d0"></div>
<div style="position:absolute;left:338px;top:552px;width:1px;height:1px;background:#a0a0a0"></div>
<div style="position:absolute;left:1534px;top:552px;width:1px;height:1px;background:#a0a0a0"></div>
<div style="position:absolute;left:929px;top:792px;width:1px;height:1px;background:#a0a0a0"></div>
<div style="position:absolute;left:338px;top:555px;width:1px;height:1px;background:#a0a0a0"></div>
<div style="position:absolute;left:1534px;top:555px;width:1px;height:1px;background:#a0a0a0"></div>
<div style="position:absolute;left:932px;top:792px;width:1px;height:1px;background:#a0a0a0"></div>
<div style="position:absolute;left:338px;top:558px;width:1px;height:1px;background:#a0a0a0"></div>
<div style="position:absolute;left:1534px;top:558px;width:1px;height:1px;background:#a0a0a0"></div>
<div style="position:absolute;left:935px;top:792px;width:1px;height:1px;background:#a0a0a0"></div>
<div style="position:absolute;left:338px;top:561px;width:1px;height:1px;background:#a0a0a0"></div>
<div style="position:absolute;left:1534px;top:561px;width:1px;height:1px;background:#a0a0a0"></div>
<div style="position:absolute;left:938px;top:792px;width:1px;height:1px;background:#a0a0a0"></div>
<div style="position:absolute;left:338px;top:564px;width:1px;height:1px;background:#a0a0a0"></div>
<div style="position:absolute;left:1534px;top:564px;width:1px;height:1px;background:#a0a0a0"></div>
<div style="position:absolute;left:941px;top:792px;width:1px;height:1px;background:#a0a0a0"></div>
<div style="position:absolute;left:338px;top:567px;width:1px;height:1px;background:#a0a0a0"></div>
<div style="position:absolute;left:1534px;top:567px;width:1px;height:1px;background:#a0a0a0"></div>
<div style="position:absolute;left:944px;top:792px;width:1px;height:1px;background:#a0a0a0"></div><svg style="position:absolute;left:2px;top:64px" width="5" height="24" viewBox="0 0 5 24"><rect x="0" y="4" width="1" height="1" fill="#b8b8b8"/><rect x="0" y="7" width="1" height="1" fill="#b8b8b8"/><rect x="0" y="10" width="1" height="1" fill="#b8b8b8"/><rect x="0" y="13" width="1" height="1" fill="#b8b8b8"/><rect x="0" y="16" width="1" height="1" fill="#b8b8b8"/><rect x="0" y="19" width="1" height="1" fill="#b8b8b8"/><rect x="3" y="4" width="1" height="1" fill="#b8b8b8"/><rect x="3" y="7" width="1" height="1" fill="#b8b8b8"/><rect x="3" y="10" width="1" height="1" fill="#b8b8b8"/><rect x="3" y="13" width="1" height="1" fill="#b8b8b8"/><rect x="3" y="16" width="1" height="1" fill="#b8b8b8"/><rect x="3" y="19" width="1" height="1" fill="#b8b8b8"/></svg>
<svg style="position:absolute;left:14px;top:64px" width="24" height="24" viewBox="0 0 24 24"><defs><linearGradient id="dg" x1="0" y1="0" x2="1" y2="1"><stop offset="0.4" stop-color="#fff"/><stop offset="1" stop-color="#b8c0c8"/></linearGradient></defs><path d="M3 2.2H13L19 7.8V21.8H3z" fill="url(#dg)" stroke="#333" stroke-width="1.1" stroke-linejoin="round"/><path d="M13 2.2V7.8H19z" fill="#dde2e8" stroke="#333" stroke-width="0.9" stroke-linejoin="round"/></svg>
<svg style="position:absolute;left:44px;top:64px" width="24" height="24" viewBox="0 0 24 24"><defs><linearGradient id="fold" x1="0" y1="0" x2="1" y2="1"><stop offset="0" stop-color="#fff4c0"/><stop offset="0.6" stop-color="#f5d040"/><stop offset="1" stop-color="#e8b800"/></linearGradient></defs><path d="M1.5 21.4V4.2Q1.5 3.1 2.6 3.1H6.5L7.6 4.5H19.3V7.3" fill="#f0d060" stroke="#222" stroke-width="1"/><path d="M4.8 7.3H22.8L19.8 21.4H1.4z" fill="url(#fold)" stroke="#222" stroke-width="1" stroke-linejoin="round"/></svg>
<svg style="position:absolute;left:75px;top:64px" width="24" height="24" viewBox="0 0 24 24"><path d="M2 3Q2 2 3 2H21Q22 2 22 3V21Q22 22 21 22H4.5L2 19.5z" fill="#13397a"/><rect x="5" y="2.8" width="14.6" height="11.2" fill="#f2f4f8"/><path d="M7 4.8H13.5M15 4.8H17.5M6.8 8.2H10M11 8.2H14M15 8.2H17.8M6.8 10.8H10M11.2 10.8H13.6M15 10.8H17.5" stroke="#555" stroke-width="1"/><rect x="7" y="15" width="10.5" height="7" fill="#aaa"/><rect x="7.4" y="15.2" width="3" height="6.8" fill="#333"/></svg>
<svg style="position:absolute;left:106px;top:64px" width="24" height="24" viewBox="0 0 24 24"><path d="M2.2 2.2H10.7L16.7 7.8V20.7H2.2z" fill="#f6f6f6" stroke="#444" stroke-width="1.1" stroke-linejoin="round"/><path d="M10.7 2.2V7.8H16.7z" fill="#dde2e8" stroke="#444" stroke-width="0.9" stroke-linejoin="round"/><path d="M22.2 1.4Q21 9 15.5 14.2L18.3 17L10.3 17.6L10.8 9.8L13.5 12.4Q18 8 22.2 1.4z" fill="#3cc020" stroke="#1a5a10" stroke-width="0.7" stroke-linejoin="round"/></svg>
<svg style="position:absolute;left:137px;top:64px" width="24" height="24" viewBox="0 0 24 24"><path d="M2.2 2.2H10.7L16.7 7.8V20.7H2.2z" fill="#f6f6f6" stroke="#444" stroke-width="1.1" stroke-linejoin="round"/><path d="M10.7 2.2V7.8H16.7z" fill="#dde2e8" stroke="#444" stroke-width="0.9" stroke-linejoin="round"/><path d="M8.5 19Q10 11 16 6.5L13.5 4.2L21.5 2.2L21 10.5L18.3 8.3Q13 12.5 8.5 19z" fill="#3cc020" stroke="#1a5a10" stroke-width="0.7" stroke-linejoin="round"/></svg>
<div style="position:absolute;left:168px;top:68px;width:1px;height:16px;background:#d0d0d0"></div>
<svg style="position:absolute;left:176px;top:64px" width="24" height="24" viewBox="0 0 24 24"><path d="M3 2.2H13L19 7.8V21.8H3z" fill="#fbe6c4" stroke="#444" stroke-width="1.1" stroke-linejoin="round"/><path d="M13 2.2V7.8H19z" fill="#dde2e8" stroke="#444" stroke-width="0.9" stroke-linejoin="round"/><path d="M8 20L19 4L20.5 5L10 21z" fill="#e8c050" stroke="#553" stroke-width="0.6"/><circle cx="20" cy="4" r="1.3" fill="#e44"/></svg>
<svg style="position:absolute;left:207px;top:64px" width="24" height="24" viewBox="0 0 24 24"><path d="M3 2.2H13L19 7.8V21.8H3z" fill="#fbe6c4" stroke="#444" stroke-width="1.1" stroke-linejoin="round"/><path d="M13 2.2V7.8H19z" fill="#dde2e8" stroke="#444" stroke-width="0.9" stroke-linejoin="round"/><path d="M6.5 9.5V19.5L16.5 14.5z" fill="#2a9a2a" stroke="#164" stroke-width="0.7"/></svg>
<svg style="position:absolute;left:238px;top:64px" width="24" height="24" viewBox="0 0 24 24"><path d="M3 2.2H13L19 7.8V21.8H3z" fill="#fbe6c4" stroke="#444" stroke-width="1.1" stroke-linejoin="round"/><path d="M13 2.2V7.8H19z" fill="#dde2e8" stroke="#444" stroke-width="0.9" stroke-linejoin="round"/><path d="M5 3.5V10L10.5 6.8z" fill="#2a9a2a"/><text x="5" y="20" font-family="Liberation Sans" font-size="10" fill="#3a6090">ID</text></svg>
<svg style="position:absolute;left:268px;top:64px" width="24" height="24" viewBox="0 0 24 24"><circle cx="11.5" cy="12" r="10" fill="#fbe6c4" stroke="#222" stroke-width="1.2"/><rect x="6.5" y="5" width="4" height="14" fill="#2a9a1a" stroke="#222" stroke-width="0.6"/><rect x="12.5" y="5" width="4" height="14" fill="#2a9a1a" stroke="#222" stroke-width="0.6"/></svg>
<svg style="position:absolute;left:299px;top:64px" width="24" height="24" viewBox="0 0 24 24"><rect x="0" y="9" width="23" height="12" fill="#f0d8a8"/><circle cx="8" cy="14" r="3" fill="#4a8ac0"/><path d="M2 23L14 8" stroke="#111" stroke-width="2.5"/><path d="M10 6L16 2L22 8L19 11L16 8L13 10z" fill="#888" stroke="#333" stroke-width="0.8"/></svg>
<svg style="position:absolute;left:335px;top:64px" width="5" height="24" viewBox="0 0 5 24"><rect x="0" y="4" width="1" height="1" fill="#b8b8b8"/><rect x="0" y="7" width="1" height="1" fill="#b8b8b8"/><rect x="0" y="10" width="1" height="1" fill="#b8b8b8"/><rect x="0" y="13" width="1" height="1" fill="#b8b8b8"/><rect x="0" y="16" width="1" height="1" fill="#b8b8b8"/><rect x="0" y="19" width="1" height="1" fill="#b8b8b8"/><rect x="3" y="4" width="1" height="1" fill="#b8b8b8"/><rect x="3" y="7" width="1" height="1" fill="#b8b8b8"/><rect x="3" y="10" width="1" height="1" fill="#b8b8b8"/><rect x="3" y="13" width="1" height="1" fill="#b8b8b8"/><rect x="3" y="16" width="1" height="1" fill="#b8b8b8"/><rect x="3" y="19" width="1" height="1" fill="#b8b8b8"/></svg>
<svg style="position:absolute;left:345px;top:64px" width="24" height="24" viewBox="0 0 24 24"><defs><linearGradient id="ub" x1="0" y1="0" x2="1" y2="1"><stop offset="0" stop-color="#4a9ae8"/><stop offset="1" stop-color="#0a3a80"/></linearGradient></defs><path d="M2 16.5L3.8 5.5L7.2 8.8Q11 6 14 8.5L13 11.5Q10 10.5 9 12L11.5 14z" fill="url(#ub)"/><path d="M17 12Q18 16 14.5 21.5Q20 17 19.5 11z" fill="#1a4a90"/><circle cx="17" cy="6.5" r="5.6" fill="#fff" stroke="#444" stroke-width="0.8"/><path d="M15 4.6A2.8 2.8 0 1 0 19 4.6" fill="none" stroke="#111" stroke-width="1.3"/><path d="M17 3V6.8" stroke="#111" stroke-width="1.3"/></svg>
<svg style="position:absolute;left:376px;top:64px" width="24" height="24" viewBox="0 0 24 24"><defs><linearGradient id="ub2" x1="0" y1="0" x2="1" y2="1"><stop offset="0" stop-color="#4a9ae8"/><stop offset="1" stop-color="#0a3a80"/></linearGradient></defs><path d="M2 16L4 4.6L7.5 8Q14 3 20 7Q24 11 15.5 21Q19 13.5 15.5 10.8Q12.5 9.5 10 11L11.7 12.8Z" fill="url(#ub2)"/></svg>
<div style="position:absolute;left:408px;top:68px;width:1px;height:16px;background:#d0d0d0"></div>
<svg style="position:absolute;left:415px;top:64px" width="24" height="24" viewBox="0 0 24 24"><path d="M1.5 7L10 1.5L22.5 3.5L15 10zM1.5 7L15 10L14.7 21.8L3.5 18.3zM15 10L22.5 3.5L21.5 17L14.7 21.8z" fill="#fff" stroke="#222" stroke-width="1.2" stroke-linejoin="round"/><path d="M10 1.5L10 14L3.5 18.3M10 14L21.5 17" fill="none" stroke="#aaa" stroke-width="0.8"/></svg>
<svg style="position:absolute;left:446px;top:64px" width="24" height="24" viewBox="0 0 24 24"><path d="M1.5 7L10 1.5L22.5 3.5L15 10z" fill="#9c9c9c" stroke="#111" stroke-width="1.2" stroke-linejoin="round"/><path d="M1.5 7L15 10L14.7 21.8L3.5 18.3z" fill="#a8a8a8" stroke="#111" stroke-width="1.2" stroke-linejoin="round"/><path d="M15 10L22.5 3.5L21.5 17L14.7 21.8z" fill="#8a8a8a" stroke="#111" stroke-width="1.2" stroke-linejoin="round"/></svg>
<div style="position:absolute;left:474px;top:62px;width:30px;height:29px;background:#e0e0e0;border:1px solid #c4c4c4;border-radius:3px;box-sizing:border-box"></div>
<svg style="position:absolute;left:477px;top:64px" width="24" height="24" viewBox="0 0 24 24"><path d="M1.5 7L10 1.5L22.5 3.5L15 10z" fill="#7ac83a" stroke="#111" stroke-width="1.2" stroke-linejoin="round"/><path d="M1.5 7L15 10L14.7 21.8L3.5 18.3z" fill="#98e050" stroke="#111" stroke-width="1.2" stroke-linejoin="round"/><path d="M15 10L22.5 3.5L21.5 17L14.7 21.8z" fill="#2a5a2a" stroke="#111" stroke-width="1.2" stroke-linejoin="round"/><path d="M10 1.5L10 14L3.5 18.3M10 14L21.5 17" fill="none" stroke="#5a9a30" stroke-width="0.8"/></svg>
<svg style="position:absolute;left:508px;top:64px" width="24" height="24" viewBox="0 0 24 24"><path d="M1.5 7L10 1.5L22.5 3.5L15 10z" fill="#62a020" stroke="#111" stroke-width="1.2" stroke-linejoin="round"/><path d="M1.5 7L15 10L14.7 21.8L3.5 18.3z" fill="#90e030" stroke="#111" stroke-width="1.2" stroke-linejoin="round"/><path d="M15 10L22.5 3.5L21.5 17L14.7 21.8z" fill="#0a3a0a" stroke="#111" stroke-width="1.2" stroke-linejoin="round"/></svg>
<div style="position:absolute;left:536px;top:62px;width:30px;height:29px;background:#e0e0e0;border:1px solid #c4c4c4;border-radius:3px;box-sizing:border-box"></div>
<svg style="position:absolute;left:539px;top:64px" width="24" height="24" viewBox="0 0 24 24"><path d="M7 4H15V13H7z" fill="#7ad030" stroke="#3a6a10" stroke-width="0.8"/><ellipse cx="11" cy="4" rx="4" ry="1.6" fill="#5aa020" stroke="#3a6a10" stroke-width="0.6"/><path d="M12 21L17 11L23 21z" fill="#7ad030" stroke="#3a6a10" stroke-width="0.8"/><circle cx="7" cy="17" r="5" fill="#6ac020" stroke="#3a6a10" stroke-width="0.8"/></svg>
<div style="position:absolute;left:567px;top:62px;width:30px;height:29px;background:#e0e0e0;border:1px solid #c4c4c4;border-radius:3px;box-sizing:border-box"></div>
<svg style="position:absolute;left:570px;top:64px" width="24" height="24" viewBox="0 0 24 24"><path d="M1.5 7L10 1.5L22.5 3.5L15 10z" fill="#6aaa20" stroke="#111" stroke-width="1.2" stroke-linejoin="round"/><path d="M1.5 7L15 10L14.7 21.8L3.5 18.3z" fill="#8ad030" stroke="#111" stroke-width="1.2" stroke-linejoin="round"/><path d="M15 10L22.5 3.5L21.5 17L14.7 21.8z" fill="#2a4a10" stroke="#111" stroke-width="1.2" stroke-linejoin="round"/><path d="M3 11L15.5 13M3.5 15L15.3 17.5M7.5 8L7.5 20M11.5 8.5L11 21M17 12L21 9M17 16L20.5 13M9 4L18 6M6 5.5L17 7.5" stroke="#1a2a0a" stroke-width="0.9"/></svg>
<svg style="position:absolute;left:601px;top:64px" width="24" height="24" viewBox="0 0 24 24"><circle cx="10" cy="9" r="6" fill="#e8962a"/><circle cx="4" cy="10" r="2.5" fill="#f0c030"/><circle cx="15" cy="14" r="2.5" fill="#f0c030"/><path d="M20 3V17M18 14L20 18L22 14" stroke="#444" stroke-width="1.2" fill="none"/><path d="M2 21H21" stroke="#c07020" stroke-width="1.5"/><circle cx="2.5" cy="21" r="1.6" fill="#e8962a"/><circle cx="11" cy="21" r="1.6" fill="#e8962a"/><circle cx="20" cy="21" r="1.6" fill="#e8962a"/></svg>
<div style="position:absolute;left:629px;top:62px;width:30px;height:29px;background:#e0e0e0;border:1px solid #c4c4c4;border-radius:3px;box-sizing:border-box"></div>
<svg style="position:absolute;left:632px;top:64px" width="24" height="24" viewBox="0 0 24 24"><rect x="3" y="14" width="18" height="7" fill="#b8a0d8"/><rect x="3" y="2" width="5" height="19" fill="#b8a0d8"/><path d="M3 2V21M5.5 2V21M8 2V21M13.5 2V21M3 14H21M3 17.5H21M3 21H21M8 6H21" stroke="#3a2a5a" stroke-width="0.9" fill="none"/></svg>
<div style="position:absolute;left:660px;top:62px;width:30px;height:29px;background:#e0e0e0;border:1px solid #c4c4c4;border-radius:3px;box-sizing:border-box"></div>
<svg style="position:absolute;left:663px;top:64px" width="24" height="24" viewBox="0 0 24 24"><path d="M1.5 7L10 1.5L22.5 3.5L15 10z" fill="#6a4a9a" stroke="#222" stroke-width="1.2" stroke-linejoin="round"/><path d="M1.5 7L15 10L14.7 21.8L3.5 18.3z" fill="#c8b8e8" stroke="#222" stroke-width="1.2" stroke-linejoin="round"/><path d="M15 10L22.5 3.5L21.5 17L14.7 21.8z" fill="#4a2a7a" stroke="#222" stroke-width="1.2" stroke-linejoin="round"/><circle cx="10" cy="11" r="3.5" fill="#fff"/></svg>
<div style="position:absolute;left:691px;top:62px;width:30px;height:29px;background:#e0e0e0;border:1px solid #c4c4c4;border-radius:3px;box-sizing:border-box"></div>
<svg style="position:absolute;left:694px;top:64px" width="24" height="24" viewBox="0 0 24 24"><rect x="2" y="2" width="14" height="14" fill="#6a6ae0" stroke="#111" stroke-width="1.2"/><rect x="8" y="9" width="13" height="12" fill="#ddd" stroke="#fff" stroke-width="1.2"/><rect x="8" y="9" width="8" height="7" fill="#4a4ab0"/></svg>
<svg style="position:absolute;left:725px;top:64px" width="24" height="24" viewBox="0 0 24 24"><path d="M3 13Q4 5 12 6L12 3L20 7.5L12 12L12 9Q7 9 5 14z" fill="#6ac820" stroke="#2a7a10" stroke-width="0.6"/><path d="M21 11Q20 19 12 18L12 21L4 16.5L12 12L12 15Q17 15 19 10z" fill="#6ac820" stroke="#2a7a10" stroke-width="0.6"/></svg>
<svg style="position:absolute;left:756px;top:64px" width="24" height="24" viewBox="0 0 24 24"><path d="M13 13L21 21" stroke="#6a5a40" stroke-width="3"/><circle cx="9" cy="9" r="7.5" fill="#6a98c8" stroke="#2a4a7a" stroke-width="0.8"/><path d="M5 9H13M9 5V13" stroke="#111" stroke-width="2"/></svg>
<svg style="position:absolute;left:787px;top:64px" width="24" height="24" viewBox="0 0 24 24"><path d="M13 13L21 21" stroke="#6a5a40" stroke-width="3"/><circle cx="9" cy="9" r="7.5" fill="#6a98c8" stroke="#2a4a7a" stroke-width="0.8"/><path d="M5 9H13" stroke="#111" stroke-width="2"/></svg>
<svg style="position:absolute;left:818px;top:64px" width="24" height="24" viewBox="0 0 24 24"><circle cx="12" cy="12" r="9" fill="#3a6aa8" stroke="#1a3a6a" stroke-width="0.8"/><path d="M12 1V23M1 12H23M8 1H16M8 23H16M1 8V16M23 8V16" stroke="#223" stroke-width="0.8" fill="none"/></svg>
<svg style="position:absolute;left:849px;top:64px" width="24" height="24" viewBox="0 0 24 24"><path d="M2 11L16 5L23 3L20 10z" fill="#e8d0a0" stroke="#111" stroke-width="1"/><path d="M2 11L16 8L15 22L2 22z" fill="#a89070" stroke="#111" stroke-width="1"/><path d="M16 8L21 3L21 14L15 22z" fill="#5a5040" stroke="#111" stroke-width="1"/></svg>
<svg style="position:absolute;left:880px;top:64px" width="24" height="24" viewBox="0 0 24 24"><rect x="7" y="2" width="14" height="14" fill="#a08868" stroke="#222" stroke-width="0.9"/><path d="M2 1V22H21M2 4H4M2 7H4M2 10H4M2 13H4M2 16H4M6 20V22M9 20V22M12 20V22M15 20V22M18 20V22" stroke="#555" stroke-width="0.8" fill="none"/></svg>
<svg style="position:absolute;left:911px;top:64px" width="24" height="24" viewBox="0 0 24 24"><path d="M1.5 7L10 1.5L22.5 3.5L15 10z" fill="#0a6a0a" stroke="#111" stroke-width="1.2" stroke-linejoin="round"/><path d="M1.5 7L15 10L14.7 21.8L3.5 18.3z" fill="#555" stroke="#111" stroke-width="1.2" stroke-linejoin="round"/><path d="M15 10L22.5 3.5L21.5 17L14.7 21.8z" fill="#0a5a0a" stroke="#111" stroke-width="1.2" stroke-linejoin="round"/><path d="M6 9L15 10.5L14.5 19L7 17z" fill="#8ae020" stroke="#222" stroke-width="0.6"/></svg>
<svg style="position:absolute;left:942px;top:64px" width="24" height="24" viewBox="0 0 24 24"><path d="M1.5 7L10 1.5L22.5 3.5L15 10z" fill="#aaa" stroke="#777" stroke-width="1.2" stroke-linejoin="round"/><path d="M1.5 7L15 10L14.7 21.8L3.5 18.3z" fill="#bbb" stroke="#777" stroke-width="1.2" stroke-linejoin="round"/><path d="M15 10L22.5 3.5L21.5 17L14.7 21.8z" fill="#888" stroke="#777" stroke-width="1.2" stroke-linejoin="round"/><path d="M3 20L11 14L10 12L15 12L14 17L12 15L4 21z" fill="#ddd" stroke="#999" stroke-width="0.6"/></svg>
<svg style="position:absolute;left:973px;top:64px" width="24" height="24" viewBox="0 0 24 24"><path d="M2 5L8 2L14 3L14 13L8 16L2 14z" fill="#e8e8e8" stroke="#3a5ab0" stroke-width="1"/><path d="M8 2L14 3L14 13" fill="#888"/><path d="M12 19L16 13L23 15L19 22z" fill="#ddd" stroke="#e88a20" stroke-width="1.2"/></svg>
<svg style="position:absolute;left:1004px;top:64px" width="24" height="24" viewBox="0 0 24 24"><circle cx="8" cy="12" r="7" fill="#c0c8f8" stroke="#5a6ae0" stroke-width="0.8"/><circle cx="16" cy="12" r="7" fill="#c0c8f8" stroke="#5a6ae0" stroke-width="0.8"/><path d="M12 5.5Q16 12 12 18.5Q8 12 12 5.5z" fill="#3a4aa0" stroke="#111" stroke-width="0.8"/></svg>
<svg style="position:absolute;left:1035px;top:64px" width="24" height="24" viewBox="0 0 24 24"><rect x="1" y="1" width="21" height="16" fill="none" stroke="#222" stroke-dasharray="1.5 1.5" stroke-width="0.9"/><rect x="7" y="2" width="10" height="10" fill="#a89070" stroke="#222" stroke-width="0.9"/><rect x="7" y="14" width="10" height="8" fill="#8a7050" stroke="#222" stroke-width="0.9"/></svg>
<svg style="position:absolute;left:1066px;top:64px" width="24" height="24" viewBox="0 0 24 24"><rect x="1" y="1" width="21" height="21" fill="none" stroke="#222" stroke-dasharray="1.5 1.5" stroke-width="0.9"/><rect x="4" y="4" width="15" height="15" fill="#a89070" stroke="#222" stroke-width="1.2"/><path d="M4 4L19 19M19 4L4 19" stroke="#333" stroke-width="0.6"/></svg>
<svg style="position:absolute;left:1097px;top:64px" width="24" height="24" viewBox="0 0 24 24"><path d="M1 12V1H17V8" fill="none" stroke="#222" stroke-dasharray="1.5 1.5" stroke-width="0.9"/><rect x="8" y="8" width="14" height="14" fill="#a08868" stroke="#222" stroke-width="1"/></svg>
<svg style="position:absolute;left:1133px;top:64px" width="5" height="24" viewBox="0 0 5 24"><rect x="0" y="4" width="1" height="1" fill="#b8b8b8"/><rect x="0" y="7" width="1" height="1" fill="#b8b8b8"/><rect x="0" y="10" width="1" height="1" fill="#b8b8b8"/><rect x="0" y="13" width="1" height="1" fill="#b8b8b8"/><rect x="0" y="16" width="1" height="1" fill="#b8b8b8"/><rect x="0" y="19" width="1" height="1" fill="#b8b8b8"/><rect x="3" y="4" width="1" height="1" fill="#b8b8b8"/><rect x="3" y="7" width="1" height="1" fill="#b8b8b8"/><rect x="3" y="10" width="1" height="1" fill="#b8b8b8"/><rect x="3" y="13" width="1" height="1" fill="#b8b8b8"/><rect x="3" y="16" width="1" height="1" fill="#b8b8b8"/><rect x="3" y="19" width="1" height="1" fill="#b8b8b8"/></svg>
<svg style="position:absolute;left:1144px;top:64px" width="24" height="24" viewBox="0 0 24 24"><circle cx="12" cy="4" r="3" fill="#1a4a8a"/><circle cx="6" cy="8" r="3" fill="#1a4a8a"/><circle cx="18" cy="8" r="3" fill="#1a4a8a"/><circle cx="12" cy="11" r="3" fill="#2a5a9a"/><path d="M1 18Q3 12 8 13Q12 11 16 13Q21 12 23 18L23 20H1z" fill="#1a4a8a"/></svg>
<svg style="position:absolute;left:1175px;top:64px" width="24" height="24" viewBox="0 0 24 24"><path d="M8 5L14 2L22 3L17 7zM8 5L17 7L17 15L9 13zM17 7L22 3L21 12L17 15z" fill="#2a5a9a" stroke="#111" stroke-width="0.9"/><path d="M2 11L8 8L15 9L10 13zM2 11L10 13L10 22L3 19zM10 13L15 9L14 18L10 22z" fill="#7aa8d8" stroke="#111" stroke-width="0.9"/></svg>
<svg style="position:absolute;left:1206px;top:64px" width="24" height="24" viewBox="0 0 24 24"><path d="M2 7L9 3L21 4L15 8z" fill="#3a6aa8" stroke="#111" stroke-width="1"/><path d="M2 7L15 8L14 22L4 20z" fill="#8ab8e8" stroke="#111" stroke-width="1"/><path d="M15 8L21 4L20 17L14 22z" fill="#0a3a7a" stroke="#111" stroke-width="1"/></svg>
<svg style="position:absolute;left:1237px;top:64px" width="24" height="24" viewBox="0 0 24 24"><path d="M2 1L20 5L21 22L5 17z" fill="#6a9ad8" stroke="#111" stroke-width="1"/></svg>
<svg style="position:absolute;left:1268px;top:64px" width="24" height="24" viewBox="0 0 24 24"><path d="M3 21Q6 8 20 3" fill="none" stroke="#3a4a7a" stroke-width="2"/></svg>
<svg style="position:absolute;left:1299px;top:64px" width="24" height="24" viewBox="0 0 24 24"><circle cx="12" cy="12" r="6.5" fill="#1a4a8a"/><circle cx="10" cy="10" r="2.5" fill="#8ab0d8" opacity="0.7"/></svg>
<svg style="position:absolute;left:1335px;top:64px" width="5" height="24" viewBox="0 0 5 24"><rect x="0" y="4" width="1" height="1" fill="#b8b8b8"/><rect x="0" y="7" width="1" height="1" fill="#b8b8b8"/><rect x="0" y="10" width="1" height="1" fill="#b8b8b8"/><rect x="0" y="13" width="1" height="1" fill="#b8b8b8"/><rect x="0" y="16" width="1" height="1" fill="#b8b8b8"/><rect x="0" y="19" width="1" height="1" fill="#b8b8b8"/><rect x="3" y="4" width="1" height="1" fill="#b8b8b8"/><rect x="3" y="7" width="1" height="1" fill="#b8b8b8"/><rect x="3" y="10" width="1" height="1" fill="#b8b8b8"/><rect x="3" y="13" width="1" height="1" fill="#b8b8b8"/><rect x="3" y="16" width="1" height="1" fill="#b8b8b8"/><rect x="3" y="19" width="1" height="1" fill="#b8b8b8"/></svg>
<div style="position:absolute;left:1343px;top:62px;width:30px;height:29px;background:#e0e0e0;border:1px solid #c4c4c4;border-radius:3px;box-sizing:border-box"></div>
<svg style="position:absolute;left:1346px;top:64px" width="24" height="24" viewBox="0 0 24 24"><path d="M2 12H20M11 3V21" stroke="#8a20d0" stroke-width="2"/><circle cx="11" cy="12" r="1.4" fill="#fff"/></svg>
<svg style="position:absolute;left:1377px;top:64px" width="24" height="24" viewBox="0 0 24 24"><path d="M4 12H19" stroke="#8a20d0" stroke-width="1.8"/><circle cx="3.5" cy="12" r="2" fill="#fff" stroke="#8a20d0" stroke-width="1"/><circle cx="19.5" cy="12" r="2" fill="#fff" stroke="#8a20d0" stroke-width="1"/></svg>
<svg style="position:absolute;left:1408px;top:64px" width="24" height="24" viewBox="0 0 24 24"><defs><linearGradient id="sq" x1="0" y1="0" x2="1" y2="1"><stop offset="0" stop-color="#f4f0fa"/><stop offset="1" stop-color="#b8a8d8"/></linearGradient></defs><rect x="3" y="3" width="17" height="17" fill="url(#sq)" stroke="#8a20d0" stroke-width="1.6"/><circle cx="3" cy="3" r="1.8" fill="#fff" stroke="#8a20d0" stroke-width="0.9"/><circle cx="20" cy="3" r="1.8" fill="#fff" stroke="#8a20d0" stroke-width="0.9"/><circle cx="3" cy="20" r="1.8" fill="#fff" stroke="#8a20d0" stroke-width="0.9"/><circle cx="20" cy="20" r="1.8" fill="#fff" stroke="#8a20d0" stroke-width="0.9"/></svg>
<svg style="position:absolute;left:1439px;top:64px" width="24" height="24" viewBox="0 0 24 24"><path d="M1.5 7L10 1.5L22.5 3.5L15 10z" fill="#4a2a7a" stroke="#333" stroke-width="1.2" stroke-linejoin="round"/><path d="M1.5 7L15 10L14.7 21.8L3.5 18.3z" fill="#c8b8e0" stroke="#333" stroke-width="1.2" stroke-linejoin="round"/><path d="M15 10L22.5 3.5L21.5 17L14.7 21.8z" fill="#4a2a6a" stroke="#333" stroke-width="1.2" stroke-linejoin="round"/><circle cx="3" cy="7" r="1.8" fill="#fff" stroke="#8a20d0" stroke-width="0.9"/><circle cx="12" cy="2" r="1.8" fill="#fff" stroke="#8a20d0" stroke-width="0.9"/><circle cx="21" cy="5" r="1.8" fill="#fff" stroke="#8a20d0" stroke-width="0.9"/><circle cx="12" cy="10" r="1.8" fill="#fff" stroke="#8a20d0" stroke-width="0.9"/><circle cx="3" cy="19" r="1.8" fill="#fff" stroke="#8a20d0" stroke-width="0.9"/><circle cx="12" cy="22" r="1.8" fill="#fff" stroke="#8a20d0" stroke-width="0.9"/><circle cx="21" cy="17" r="1.8" fill="#fff" stroke="#8a20d0" stroke-width="0.9"/></svg>
<svg style="position:absolute;left:1470px;top:64px" width="24" height="24" viewBox="0 0 24 24"><rect x="2" y="15" width="19" height="6" fill="#c0a8e0"/><rect x="2" y="2" width="5" height="19" fill="#c0a8e0"/><path d="M2 2V21M4.5 2V21M7 2V21M13 2V21M2 15H21M2 18H21M2 21H21M7 6H21" stroke="#2a1a4a" stroke-width="0.9" fill="none"/></svg>
<svg style="position:absolute;left:1501px;top:64px" width="24" height="24" viewBox="0 0 24 24"><path d="M1.5 7L10 1.5L22.5 3.5L15 10z" fill="#5a3a8a" stroke="#222" stroke-width="1.2" stroke-linejoin="round"/><path d="M1.5 7L15 10L14.7 21.8L3.5 18.3z" fill="#c8b8e8" stroke="#222" stroke-width="1.2" stroke-linejoin="round"/><path d="M15 10L22.5 3.5L21.5 17L14.7 21.8z" fill="#4a2a7a" stroke="#222" stroke-width="1.2" stroke-linejoin="round"/><circle cx="10" cy="11" r="3.5" fill="#fff"/></svg>
<svg style="position:absolute;left:1537px;top:64px" width="5" height="24" viewBox="0 0 5 24"><rect x="0" y="4" width="1" height="1" fill="#b8b8b8"/><rect x="0" y="7" width="1" height="1" fill="#b8b8b8"/><rect x="0" y="10" width="1" height="1" fill="#b8b8b8"/><rect x="0" y="13" width="1" height="1" fill="#b8b8b8"/><rect x="0" y="16" width="1" height="1" fill="#b8b8b8"/><rect x="0" y="19" width="1" height="1" fill="#b8b8b8"/><rect x="3" y="4" width="1" height="1" fill="#b8b8b8"/><rect x="3" y="7" width="1" height="1" fill="#b8b8b8"/><rect x="3" y="10" width="1" height="1" fill="#b8b8b8"/><rect x="3" y="13" width="1" height="1" fill="#b8b8b8"/><rect x="3" y="16" width="1" height="1" fill="#b8b8b8"/><rect x="3" y="19" width="1" height="1" fill="#b8b8b8"/></svg>
<svg style="position:absolute;left:1548px;top:64px" width="24" height="24" viewBox="0 0 24 24"><path d="M11 2V12" stroke="#333" stroke-width="2"/><path d="M7 10L11 16L15 10z" fill="#333"/><rect x="2" y="17" width="19" height="5" fill="#f0a040" stroke="#222" stroke-width="0.9"/></svg>
<svg style="position:absolute;left:1579px;top:64px" width="24" height="24" viewBox="0 0 24 24"><path d="M3 3H19M4 3V12M11 3V12M18 3V12" stroke="#333" stroke-width="1.2" fill="none"/><path d="M2 10L4 14L6 10zM9 10L11 14L13 10zM16 10L18 14L20 10z" fill="#333"/><rect x="2" y="16" width="19" height="5" fill="#f0a040" stroke="#222" stroke-width="0.9"/></svg>
<svg style="position:absolute;left:1610px;top:64px" width="24" height="24" viewBox="0 0 24 24"><rect x="1" y="8" width="8" height="8" fill="#f06020" stroke="#333" stroke-width="0.8"/><ellipse cx="10" cy="12" rx="2.5" ry="10" fill="#777" stroke="#333" stroke-width="0.8"/><path d="M12 8H16V4L22 12L16 20V16H12z" fill="#a8c0f0" stroke="#5a7ab0" stroke-width="0.8"/></svg>
<svg style="position:absolute;left:1641px;top:64px" width="24" height="24" viewBox="0 0 24 24"><path d="M2 8L21 8L21 13L2 13z" fill="#e8d0b0" stroke="#a89070" stroke-width="0.6"/><path d="M2 11Q12 10 20 17L19 20Q11 14 2 15z" fill="#e8a050" stroke="#333" stroke-width="0.9"/></svg>
<svg style="position:absolute;left:1672px;top:64px" width="24" height="24" viewBox="0 0 24 24"><rect x="9" y="2" width="5" height="15" rx="2.5" fill="#fff" stroke="#555" stroke-width="0.9"/><circle cx="11.5" cy="19" r="3.5" fill="#f0a040" stroke="#555" stroke-width="0.8"/><path d="M11.5 10V17" stroke="#f0a040" stroke-width="2"/></svg>
<svg style="position:absolute;left:1703px;top:64px" width="24" height="24" viewBox="0 0 24 24"><path d="M3 14Q2 6 7 6Q10 6 10 10Q8 12 6 10M11 14Q10 6 15 6Q18 6 18 10Q16 12 14 10" fill="#e8e0d0" stroke="#333" stroke-width="1"/><rect x="2" y="16" width="19" height="5" fill="#f0a040" stroke="#222" stroke-width="0.9"/></svg>
<svg style="position:absolute;left:1734px;top:64px" width="24" height="24" viewBox="0 0 24 24"><text x="5" y="13" font-family="Liberation Serif" font-style="italic" font-size="17" fill="#111">a</text><path d="M2 18H16V15L21 19L16 23V20H2z" fill="#f0a040" stroke="#333" stroke-width="0.6"/></svg>
<svg style="position:absolute;left:1782px;top:64px" width="12" height="24" viewBox="0 0 12 24"><path d="M2 9L5 12L2 15M6 9L9 12L6 15" fill="none" stroke="#555" stroke-width="1"/></svg>
<svg style="position:absolute;left:1802px;top:64px" width="5" height="24" viewBox="0 0 5 24"><rect x="0" y="4" width="1" height="1" fill="#b8b8b8"/><rect x="0" y="7" width="1" height="1" fill="#b8b8b8"/><rect x="0" y="10" width="1" height="1" fill="#b8b8b8"/><rect x="0" y="13" width="1" height="1" fill="#b8b8b8"/><rect x="0" y="16" width="1" height="1" fill="#b8b8b8"/><rect x="0" y="19" width="1" height="1" fill="#b8b8b8"/><rect x="3" y="4" width="1" height="1" fill="#b8b8b8"/><rect x="3" y="7" width="1" height="1" fill="#b8b8b8"/><rect x="3" y="10" width="1" height="1" fill="#b8b8b8"/><rect x="3" y="13" width="1" height="1" fill="#b8b8b8"/><rect x="3" y="16" width="1" height="1" fill="#b8b8b8"/><rect x="3" y="19" width="1" height="1" fill="#b8b8b8"/></svg>
<svg style="position:absolute;left:1813px;top:64px" width="24" height="24" viewBox="0 0 24 24"><path d="M4 4H20M4 12H20M4 20H20M4 4V20M20 4V20" stroke="#333" stroke-width="1"/><path d="M4 12H20" stroke="#e8963a" stroke-width="2.5"/><circle cx="4" cy="4" r="1.8" fill="#333"/><circle cx="20" cy="4" r="1.8" fill="#333"/><circle cx="4" cy="12" r="2.6" fill="#e8963a"/><circle cx="20" cy="12" r="2.6" fill="#e8963a"/><circle cx="4" cy="20" r="1.8" fill="#333"/><circle cx="20" cy="20" r="1.8" fill="#333"/></svg>
<svg style="position:absolute;left:1842px;top:64px" width="12" height="24" viewBox="0 0 12 24"><path d="M2 9L5 12L2 15M6 9L9 12L6 15" fill="none" stroke="#555" stroke-width="1"/></svg>
<svg style="position:absolute;left:1862px;top:64px" width="5" height="24" viewBox="0 0 5 24"><rect x="0" y="4" width="1" height="1" fill="#b8b8b8"/><rect x="0" y="7" width="1" height="1" fill="#b8b8b8"/><rect x="0" y="10" width="1" height="1" fill="#b8b8b8"/><rect x="0" y="13" width="1" height="1" fill="#b8b8b8"/><rect x="0" y="16" width="1" height="1" fill="#b8b8b8"/><rect x="0" y="19" width="1" height="1" fill="#b8b8b8"/><rect x="3" y="4" width="1" height="1" fill="#b8b8b8"/><rect x="3" y="7" width="1" height="1" fill="#b8b8b8"/><rect x="3" y="10" width="1" height="1" fill="#b8b8b8"/><rect x="3" y="13" width="1" height="1" fill="#b8b8b8"/><rect x="3" y="16" width="1" height="1" fill="#b8b8b8"/><rect x="3" y="19" width="1" height="1" fill="#b8b8b8"/></svg>
<svg style="position:absolute;left:1874px;top:64px" width="22" height="24" viewBox="0 0 22 24"><ellipse cx="11" cy="13" rx="9" ry="5" transform="rotate(-30 11 13)" fill="none" stroke="#e8963a" stroke-width="2"/><path d="M4 22L19 4" stroke="#333" stroke-width="2.2"/><path d="M15 5L20 2L19 8z" fill="#333"/></svg>
<svg style="position:absolute;left:1902px;top:64px" width="12" height="24" viewBox="0 0 12 24"><path d="M2 9L5 12L2 15M6 9L9 12L6 15" fill="none" stroke="#555" stroke-width="1"/></svg><svg style="position:absolute;left:14px;top:640px" width="22" height="22" viewBox="0 0 22 22"><rect x="1" y="1" width="20" height="20" fill="#c898e0" stroke="#555" stroke-width="0.8"/><path d="M7.7 1V21M14.3 1V21M1 7.7H21M1 14.3H21" stroke="#666" stroke-width="0.8"/><path d="M4 14h5v6H4zM11 14h5v6h-5z" fill="#111"/><path d="M6 11h2v3H6zM12 11h2v3h-2z" fill="#111"/></svg>
<svg style="position:absolute;left:44px;top:640px" width="22" height="22" viewBox="0 0 22 22"><rect x="1" y="1" width="20" height="20" fill="none" stroke="#999" stroke-width="0.6" stroke-dasharray="1 1"/><path d="M1 1H8V8H14V14H21V21H1z" fill="#a8a8a8" stroke="#777" stroke-width="0.8"/><path d="M1 8H8M1 14H14M8 8V21M14 14V21" stroke="#888" stroke-width="0.8"/></svg>
<svg style="position:absolute;left:74px;top:640px" width="22" height="22" viewBox="0 0 22 22"><path d="M1 17Q3 6 14 5Q21 5 21 11Q20 17 10 19L2 19z" fill="#b0b0b0" stroke="#888" stroke-width="0.8"/><path d="M4 15Q8 9 17 9" stroke="#ddd" fill="none"/></svg>
<svg style="position:absolute;left:104px;top:640px" width="22" height="22" viewBox="0 0 22 22"><circle cx="11" cy="7" r="5" fill="#b8b8b8" stroke="#888" stroke-width="0.8"/><circle cx="11" cy="7" r="2.5" fill="#ddd"/><path d="M8 11L6 21L9 19L11 21L13 19L16 21L14 11" fill="#aaa" stroke="#888" stroke-width="0.6"/></svg>
<svg style="position:absolute;left:134px;top:640px" width="22" height="22" viewBox="0 0 22 22"><rect x="1" y="1" width="20" height="20" fill="#a8a8a8" stroke="#888" stroke-width="0.8"/><path d="M7.7 1V21M14.3 1V21M1 7.7H21M1 14.3H21" stroke="#888" stroke-width="0.8"/><path d="M9 1L21 13M21 1L9 13" stroke="#888"/></svg>
<svg style="position:absolute;left:164px;top:640px" width="22" height="22" viewBox="0 0 22 22"><path d="M3 9Q4 4 12 4L12 1L20 6L12 11L12 8Q7 8 5 11z" fill="#c8c8c8" stroke="#777" stroke-width="0.8"/><path d="M19 13Q18 18 10 18L10 21L2 16L10 11L10 14Q15 14 17 11z" fill="#c8c8c8" stroke="#777" stroke-width="0.8"/></svg>
<svg style="position:absolute;left:296px;top:640px" width="22" height="22" viewBox="0 0 22 22"><path d="M3 6L6 3L11 8L16 3L19 6L14 11L19 16L16 19L11 14L6 19L3 16L8 11z" fill="#999" stroke="#666" stroke-width="0.8"/></svg>
<svg style="position:absolute;left:1591px;top:151px" width="32" height="32" viewBox="0 0 32 32"><path d="M4.4 4.5V16.3H19.3V4.5z" fill="#1a4a88"/><ellipse cx="11.85" cy="4.3" rx="7.45" ry="1.8" fill="#2a5a98" stroke="#0a1a3a" stroke-width="0.6"/><path d="M4.4 4.3V16M19.3 4.3V14" stroke="#0a1a3a" stroke-width="0.7"/><path d="M16.3 26L21.5 11L31.9 26.7z" fill="#123e7a" stroke="#0a1a3a" stroke-width="0.8" stroke-linejoin="round"/><circle cx="8.3" cy="23" r="8" fill="#2a5aa0" stroke="#0a1a3a" stroke-width="0.8"/><circle cx="6" cy="20.5" r="3" fill="#5a8ac8" opacity="0.5"/></svg>
<svg style="position:absolute;left:1631px;top:151px" width="32" height="32" viewBox="0 0 32 32"><path d="M0.5 7L13.5 0.8L31 2.5L20 9z" fill="#6a4a9a"/><path d="M0.5 7L20 9L19.5 30L4.5 25z" fill="#b8a0e0"/><path d="M20 9L31 2.5L29 22L19.5 30z" fill="#5a3a8a"/><path d="M7 7.7L9.5 26.7M13.5 8.3L14.5 28.3M1.8 13L19.8 16M3.2 19L19.7 23M4.8 4.9L23.7 6.8M9.2 2.9L27.3 4.7M7 7.7L19.3 1.4M13.5 8.3L25.2 1.9M23.7 6.8L22.7 27.3M27.3 4.7L25.8 24.7M19.8 16L30.3 9M19.7 23L29.7 15.5" stroke="#111" stroke-width="1.4"/><path d="M0.5 7L13.5 0.8L31 2.5L29 22L19.5 30L4.5 25zM0.5 7L20 9L31 2.5M20 9L19.5 30" fill="none" stroke="#111" stroke-width="1.5" stroke-linejoin="round"/></svg>
<svg style="position:absolute;left:1671px;top:151px" width="32" height="32" viewBox="0 0 32 32"><path d="M0.5 7L13.5 0.8L31 2.5L20 9z" fill="#e0a820"/><path d="M0.5 7L20 9L19.5 30L4.5 25z" fill="#f4bc30"/><path d="M20 9L31 2.5L29 22L19.5 30z" fill="#c08010"/><path d="M7 7.7L9.5 26.7M13.5 8.3L14.5 28.3M1.8 13L19.8 16M3.2 19L19.7 23M4.8 4.9L23.7 6.8M9.2 2.9L27.3 4.7M7 7.7L19.3 1.4M13.5 8.3L25.2 1.9M23.7 6.8L22.7 27.3M27.3 4.7L25.8 24.7M19.8 16L30.3 9M19.7 23L29.7 15.5" stroke="#111" stroke-width="1.4"/><path d="M0.5 7L13.5 0.8L31 2.5L29 22L19.5 30L4.5 25zM0.5 7L20 9L31 2.5M20 9L19.5 30" fill="none" stroke="#111" stroke-width="1.5" stroke-linejoin="round"/></svg>
<svg style="position:absolute;left:1711px;top:151px" width="32" height="32" viewBox="0 0 32 32"><path d="M5.5 11H25.6V16H5.5z" fill="#e8d4b8" stroke="#b89a78" stroke-width="0.5"/><path d="M5.5 13.3Q16 14 25 18.5L24.3 22.2Q15 17.5 5.5 17.3z" fill="#e8983a" stroke="#6a4a20" stroke-width="0.6"/></svg>
<svg style="position:absolute;left:1751px;top:151px" width="32" height="32" viewBox="0 0 32 32"><rect x="5.6" y="8" width="20" height="15.7" fill="#f0a850" stroke="#a06020" stroke-width="0.8"/><path d="M5.6 13.2H25.6M5.6 18.4H25.6M15.6 8V13.2M10.6 13.2V18.4M20.6 13.2V18.4M15.6 18.4V23.7" stroke="#b87030" stroke-width="0.9"/><rect x="6" y="8.4" width="19.2" height="4.5" fill="#ffd8a0" opacity="0.5"/></svg>
<svg style="position:absolute;left:1791px;top:151px" width="32" height="32" viewBox="0 0 32 32"><defs><radialGradient id="rg" cx="0" cy="1" r="1.35"><stop offset="0" stop-color="#e00"/><stop offset="0.22" stop-color="#ee0"/><stop offset="0.45" stop-color="#0d0"/><stop offset="0.72" stop-color="#0ee"/><stop offset="1" stop-color="#00c"/></radialGradient></defs><rect x="4.5" y="4.5" width="25.5" height="25" fill="#000"/><rect x="2" y="2" width="26" height="25.5" fill="url(#rg)" stroke="#111" stroke-width="0.9"/></svg>
<svg style="position:absolute;left:1831px;top:151px" width="32" height="32" viewBox="0 0 32 32"><path d="M4.5 13V22M1 14l3.5-1.5M1 16.5l3.5-1.5M1 19l3.5-1.5M1 21.5l3.5-1.5" stroke="#333" stroke-width="0.8"/><rect x="5" y="14" width="24.6" height="4.5" rx="1" fill="#fafafa" stroke="#555" stroke-width="0.9"/><path d="M28 3V13" stroke="#e00" stroke-width="1"/><path d="M26 10L28 14L30 10" fill="none" stroke="#e00" stroke-width="1"/></svg>
<svg style="position:absolute;left:390px;top:710px" width="70" height="70" viewBox="390 710 70 70"><path d="M412 748L410.5 730" stroke="#0f0" stroke-width="2"/><path d="M407 733L410 723.5L413 733z" fill="#0f0"/><path d="M412 748L433 754.5" stroke="#f00" stroke-width="2.2"/><path d="M431 751L443 756.5L431 758z" fill="#f00"/><path d="M412 748L399 770" stroke="#00f" stroke-width="2.5"/><text x="410" y="722" font-family="Liberation Sans" font-size="10" fill="#222">Y</text><text x="444" y="756" font-family="Liberation Sans" font-size="10" fill="#222">X</text><text x="396" y="770" font-family="Liberation Sans" font-size="10" fill="#222">Z</text></svg>
</body></html>
